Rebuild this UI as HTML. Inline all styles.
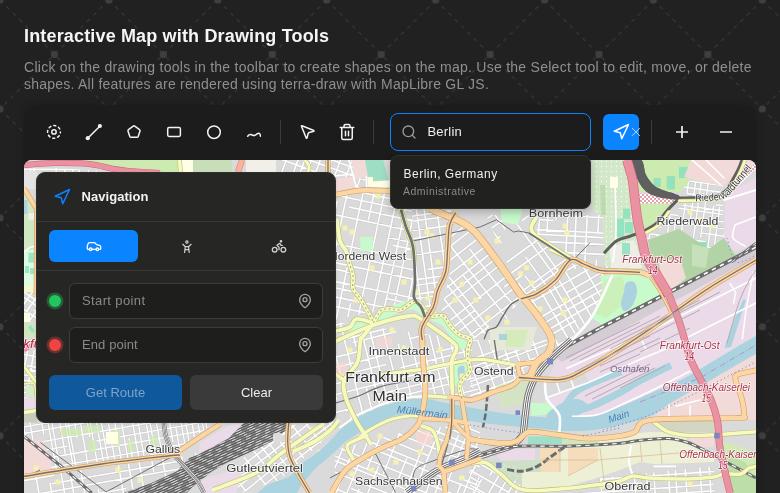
<!DOCTYPE html>
<html lang="en">
<head>
<meta charset="utf-8">
<title>Interactive Map with Drawing Tools</title>
<style>
*{box-sizing:border-box;margin:0;padding:0}
html,body{width:780px;height:493px;overflow:hidden;background:#212121;font-family:"Liberation Sans",sans-serif;color:#f2f2f2}
body{position:relative}
#bgpat{position:absolute;left:0;top:0;width:780px;height:493px}
.abs{position:absolute}
h1,p.desc,#search,#drop,#panel{will-change:transform}
h1{position:absolute;left:24px;top:25px;font-size:18px;line-height:22px;font-weight:700;color:#f5f5f5;white-space:nowrap;letter-spacing:0.16px}
p.desc{position:absolute;left:24px;top:59px;font-size:14px;line-height:16.5px;color:#8f8f8f;white-space:nowrap;letter-spacing:0.265px}
#card{position:absolute;left:24px;top:105px;width:732px;height:400px;background:#1c1c1c;border-radius:12px 12px 0 0;box-shadow:0 0 8px rgba(0,0,0,.14)}
#map{position:absolute;left:24px;top:160px;width:732px;height:333px;border-radius:8px 8px 0 0;overflow:hidden;background:#e0dfdf}
.tool{position:absolute;width:20px;height:20px}
.tool svg{display:block}
.vdiv{position:absolute;width:1px;height:24px;top:120px;background:#3a3a3a}
#search{position:absolute;left:390px;top:113px;width:201px;height:38px;border:1px solid #0a84ff;border-radius:8px;background:#1c1c1c}
#search span{position:absolute;left:36.5px;top:10px;font-size:13px;line-height:16px;color:#f0f0f0;letter-spacing:.2px}
#navbtn{position:absolute;left:603px;top:114px;width:36px;height:36px;border-radius:6px;background:#0a84ff}
#drop{position:absolute;left:390px;top:155px;width:201px;height:54px;border-radius:8px;background:#212120;border:1px solid #313130;box-shadow:0 3px 8px rgba(0,0,0,.25)}
#drop .t{position:absolute;left:12.5px;top:9.5px;font-size:12px;line-height:16px;color:#f0f0f0;letter-spacing:.5px}
#drop .s{position:absolute;left:12px;top:28px;font-size:10.5px;line-height:14px;color:#8a8a8a;letter-spacing:.49px}
#panel{position:absolute;left:36px;top:172px;width:300px;height:250.5px;border-radius:9px;background:#262625;border:1px solid #2f2f2e;box-shadow:0 1px 3px rgba(0,0,0,.12)}
#panel .hd{position:absolute;left:43.500px;top:16px;font-size:13px;line-height:16px;font-weight:700;color:#f2f2f2;letter-spacing:.05px}
#panel .ln{position:absolute;left:-1px;width:298px;height:1px;background:#383837}
.mode{position:absolute;top:57px;height:32px;width:89px;border-radius:6px}
.inp{position:absolute;left:31px;width:254px;height:36px;border-radius:6px;background:#1e1e1d;border:1px solid #3c3c3b}
.inp span{position:absolute;left:12px;top:9px;font-size:13px;line-height:16px;color:#8a8a8a}
.dot{position:absolute;left:10.500px;width:12px;height:12px;border-radius:50%}
.btn{position:absolute;top:202px;height:35px;width:133px;border-radius:6px;font-size:13px;line-height:35px;text-align:center}
</style>
</head>
<body>
<svg id="bgpat" width="780" height="493">
<defs>
<pattern id="pt" x="0" y="0" width="108.9" height="108.9" patternUnits="userSpaceOnUse">
<path d="M0 0L108.9 108.9M108.9 0L0 108.9" stroke="#3b3b3b" stroke-width="1" stroke-dasharray="4 5" fill="none"/>
<circle cx="0" cy="0" r="3.6" fill="#3f3f3f"/><circle cx="108.9" cy="0" r="3.6" fill="#3f3f3f"/><circle cx="0" cy="108.9" r="3.6" fill="#3f3f3f"/><circle cx="108.9" cy="108.9" r="3.6" fill="#3f3f3f"/><circle cx="54.45" cy="54.45" r="3.6" fill="#3f3f3f"/>
</pattern>
</defs>
<rect width="780" height="493" fill="url(#pt)"/>
</svg>

<h1>Interactive Map with Drawing Tools</h1>
<p class="desc">Click on the drawing tools in the toolbar to create shapes on the map. Use the Select tool to edit, move, or delete<br><span style="letter-spacing:.233px">shapes. All features are rendered using terra-draw with MapLibre GL JS.</span></p>

<div id="card"></div>

<!-- toolbar -->
<div id="toolbar">
<svg class="abs" style="left:24px;top:104px" width="732" height="56" viewBox="24 104 732 56" fill="none" stroke="#f2f2f2" stroke-width="1.5" stroke-linecap="round" stroke-linejoin="round">
<!-- point -->
<circle cx="54" cy="131.9" r="6.4" stroke-dasharray="2 3.027" stroke-dashoffset="1"/>
<circle cx="54" cy="131.9" r="2.2"/>
<!-- line -->
<path d="M88 138L99.8 126.2"/>
<circle cx="87.8" cy="138.2" r="2.1" fill="#f2f2f2" stroke="none"/><circle cx="99.9" cy="126" r="2.1" fill="#f2f2f2" stroke="none"/>
<!-- polygon -->
<path d="M133.2 126.2a1.3 1.3 0 0 1 1.6 0l4.7 3.5a1.3 1.3 0 0 1 .45 1.45l-1.75 5.3a1.3 1.3 0 0 1-1.2 .85h-6a1.3 1.3 0 0 1-1.2-.85l-1.75-5.3a1.3 1.3 0 0 1 .45-1.45z"/>
<!-- rect -->
<rect x="167.7" y="127.5" width="12.7" height="8.9" rx="1.4"/>
<!-- circle -->
<circle cx="214" cy="132.2" r="6.3"/>
<!-- freehand -->
<path d="M247.700 136.300C248.600 135 249.800 134.300 251 134.600S253.400 135.900 255 135.300S257.600 132.900 259 133.200S260.300 135 260.400 136.300"/>
<!-- select -->
<path d="M301.45 126.2a.37.37 0 0 1 .49-.49l11.9 4.85a.38.38 0 0 1-.05.71l-4.55 1.18a1.5 1.5 0 0 0-1.08 1.07l-1.17 4.57a.38.38 0 0 1-.71.05z"/>
<!-- trash -->
<g stroke-width="1.5"><path d="M340.25 127.5h13.5M352.25 127.5v10.5c0 .75-.75 1.5-1.5 1.5h-7.5c-.75 0-1.500-.75-1.500-1.500v-10.5M344 127.500v-1.500c0-.75.75-1.500 1.500-1.500h3c.75 0 1.500.75 1.500 1.500v1.500M345.500 131.250v4.500M348.500 131.250v4.500"/></g>
<!-- plus / minus -->
<g stroke-width="1.7" stroke-linecap="butt"><path d="M676 132h12M682 126v12M720 132h12"/></g>
</svg>
<div class="vdiv" style="left:280px"></div>
<div class="vdiv" style="left:373px"></div>
<div class="vdiv" style="left:651px"></div>
<div id="search"><svg class="abs" style="left:10px;top:10px" width="16" height="16" viewBox="0 0 24 24" fill="none" stroke="#9b9b9b" stroke-width="2" stroke-linecap="round"><circle cx="11" cy="11" r="8"/><path d="m21 21-4.300-4.300"/></svg><span>Berlin</span></div>
<div id="navbtn"><svg class="abs" style="left:8.500px;top:8.800px" width="18" height="18" viewBox="0 0 24 24" fill="none" stroke="#fff" stroke-width="2" stroke-linecap="round" stroke-linejoin="round"><polygon points="3 11 22 2 13 21 11 13 3 11"/></svg></div>
<svg class="abs" style="left:630px;top:126px" width="12" height="12" viewBox="0 0 12 12" fill="none" stroke="#b4d6fb" stroke-width="1" stroke-linecap="round"><path d="M2.200 2.200l7.400 7.400M9.600 2.200l-7.400 7.400"/></svg>
</div>

<div id="map">
<!--MAPSVG-->
<svg width="732" height="333" viewBox="24 160 732 333" font-family="'Liberation Sans',sans-serif" style="display:block;filter:blur(.6px)">
<rect x="24" y="160" width="732" height="333" fill="#dbdada"/>
<clipPath id="c1"><path d="M335 190L412 190 414 300 380 310 335 320Z"/></clipPath>
<g clip-path="url(#c1)" fill="none"><path d="M313 159.3L344.8 166.1M344.8 166.1L373.8 172.3M368.2 178.5L402.7 185.9M402.7 185.9L463.9 198.9M463.9 198.9L468.1 199.8M346.7 182.6L377.3 189.1M377.3 189.1L433.6 201.1M433.6 201.1L466.3 208M336.9 187.3L370.8 194.5M370.8 194.5L412.8 203.5M412.8 203.5L460.7 213.6M460.7 213.6L465 214.5M306.7 188.9L354.1 199M354.1 199L412.6 211.5M412.6 211.5L449.5 219.3M449.5 219.3L463.3 222.2M349.1 207.1L400 217.9M400 217.9L447.4 228M447.4 228L461.5 231M302.7 207.9L345.7 217.1M345.7 217.1L406.8 230.1M457.5 240.8L459.3 241.2M300.3 218.9L337.1 226.7M388 237.5L431.3 246.7M299 225.2L334.4 232.8M392.7 245.2L435.6 254.3M435.6 254.3L455.6 258.5M296.8 235.3L338.4 244.2M338.4 244.2L397.2 256.7M397.2 256.7L429.1 263.5M429.1 263.5L453.5 268.6M330.8 252.4L372.5 261.2M372.5 261.2L419.6 271.2M419.6 271.2L451.5 278M292.9 253.7L321.2 259.7M321.2 259.7L376.2 271.4M376.2 271.4L431.8 283.2M291.6 259.9L320.4 266M320.4 266L352.6 272.9M289.1 271.6L320.9 278.4M320.9 278.4L359.9 286.7M359.9 286.7L390.7 293.3M390.7 293.3L445.7 304.9M287.8 277.7L317.9 284.1M317.9 284.1L353.9 291.7M386.1 298.6L444.5 311M286 286.4L313.3 292.2M313.3 292.2L375.6 305.5M375.6 305.5L427.5 316.5M427.5 316.5L442.6 319.7M284 295.5L339 307.2M339 307.2L373.5 314.6M373.5 314.6L436 327.9M436 327.9L440.7 328.8M282.4 303.4L327.7 313M355.1 318.8L391.6 326.6M391.6 326.6L439 336.7M280.1 314.2L342.7 327.5M342.7 327.5L382.4 336M382.4 336L417.1 343.3M417.1 343.3L436.7 347.5M467.7 193L460.6 226.3M451.6 268.7L443.4 307.1M443.4 307.1L434.5 349M434.5 349L434.4 349.6M458.2 190.9L449.2 233.3M449.2 233.3L442.6 264.4M442.6 264.4L432.7 310.8M427.5 335.6L424.9 347.6M446.9 188.5L437.8 231.6M437.8 231.6L429.6 270M422.1 305.3L417.8 325.7M417.8 325.7L413.7 345.2M432.6 185.5L423.2 229.9M423.2 229.9L417.7 255.7M417.7 255.7L411.7 283.9M411.7 283.9L403.9 320.3M420.3 182.9L413.3 215.7M413.3 215.7L403.7 261M403.7 261L394 306.6M394 306.6L387 339.5M406 206.1L397 248.4M397 248.4L390 281.6M390 281.6L382.4 317.2M382.4 317.2L378.1 337.6M401 178.8L393.4 214.4M393.4 214.4L387.5 242.2M387.5 242.2L380.2 276.3M380.2 276.3L371.5 317.6M371.5 317.6L367.7 335.4M388 176L379.7 215.4M379.7 215.4L372.3 250.3M372.3 250.3L362.4 296.6M362.4 296.6L354.8 332.7M378.2 173.9L368.3 220.3M350.7 303.2L344.9 330.5M367.6 171.7L359.1 211.7M359.1 211.7L354 235.7M354 235.7L344 282.7M344 282.7L334.3 328.3M352.5 168.5L343.3 211.7M343.3 211.7L336.5 243.8M336.5 243.8L330.2 273.3M330.2 273.3L324.1 302.1M324.1 302.1L319.7 322.7M337.2 201.1L327.1 248.6M311.2 323.2L311.2 323.4M336.5 165.1L326.8 210.5M321 237.8L311.3 283.4M319.6 194.8L309.8 241M315.2 160.5L308.9 190M308.9 190L299.1 235.9M299.1 235.9L294.1 259.5M283.2 310.6L281.9 317.2" stroke="#cbcaca" stroke-width="2.6"/><path d="M313 159.3L344.8 166.1M344.8 166.1L373.8 172.3M368.2 178.5L402.7 185.9M402.7 185.9L463.9 198.9M463.9 198.9L468.1 199.8M346.7 182.6L377.3 189.1M377.3 189.1L433.6 201.1M433.6 201.1L466.3 208M336.9 187.3L370.8 194.5M370.8 194.5L412.8 203.5M412.8 203.5L460.7 213.6M460.7 213.6L465 214.5M306.7 188.9L354.1 199M354.1 199L412.6 211.5M412.6 211.5L449.5 219.3M449.5 219.3L463.3 222.2M349.1 207.1L400 217.9M400 217.9L447.4 228M447.4 228L461.5 231M302.7 207.9L345.7 217.1M345.7 217.1L406.8 230.1M457.5 240.8L459.3 241.2M300.3 218.9L337.1 226.7M388 237.5L431.3 246.7M299 225.2L334.4 232.8M392.7 245.2L435.6 254.3M435.6 254.3L455.6 258.5M296.8 235.3L338.4 244.2M338.4 244.2L397.2 256.7M397.2 256.7L429.1 263.5M429.1 263.5L453.5 268.6M330.8 252.4L372.5 261.2M372.5 261.2L419.6 271.2M419.6 271.2L451.5 278M292.9 253.7L321.2 259.7M321.2 259.7L376.2 271.4M376.2 271.4L431.8 283.2M291.6 259.9L320.4 266M320.4 266L352.6 272.9M289.1 271.6L320.9 278.4M320.9 278.4L359.9 286.7M359.9 286.7L390.7 293.3M390.7 293.3L445.7 304.9M287.8 277.7L317.9 284.1M317.9 284.1L353.9 291.7M386.1 298.6L444.5 311M286 286.4L313.3 292.2M313.3 292.2L375.6 305.5M375.6 305.5L427.5 316.5M427.5 316.5L442.6 319.7M284 295.5L339 307.2M339 307.2L373.5 314.6M373.5 314.6L436 327.9M436 327.9L440.7 328.8M282.4 303.4L327.7 313M355.1 318.8L391.6 326.6M391.6 326.6L439 336.7M280.1 314.2L342.7 327.5M342.7 327.5L382.4 336M382.4 336L417.1 343.3M417.1 343.3L436.7 347.5M467.7 193L460.6 226.3M451.6 268.7L443.4 307.1M443.4 307.1L434.5 349M434.5 349L434.4 349.6M458.2 190.9L449.2 233.3M449.2 233.3L442.6 264.4M442.6 264.4L432.7 310.8M427.5 335.6L424.9 347.6M446.9 188.5L437.8 231.6M437.8 231.6L429.6 270M422.1 305.3L417.8 325.7M417.8 325.7L413.7 345.2M432.6 185.5L423.2 229.9M423.2 229.9L417.7 255.7M417.7 255.7L411.7 283.9M411.7 283.9L403.9 320.3M420.3 182.9L413.3 215.7M413.3 215.7L403.7 261M403.7 261L394 306.6M394 306.6L387 339.5M406 206.1L397 248.4M397 248.4L390 281.6M390 281.6L382.4 317.2M382.4 317.2L378.1 337.6M401 178.8L393.4 214.4M393.4 214.4L387.5 242.2M387.5 242.2L380.2 276.3M380.2 276.3L371.5 317.6M371.5 317.6L367.7 335.4M388 176L379.7 215.4M379.7 215.4L372.3 250.3M372.3 250.3L362.4 296.6M362.4 296.6L354.8 332.7M378.2 173.9L368.3 220.3M350.7 303.2L344.9 330.5M367.6 171.7L359.1 211.7M359.1 211.7L354 235.7M354 235.7L344 282.7M344 282.7L334.3 328.3M352.5 168.5L343.3 211.7M343.3 211.7L336.5 243.8M336.5 243.8L330.2 273.3M330.2 273.3L324.1 302.1M324.1 302.1L319.7 322.7M337.2 201.1L327.1 248.6M311.2 323.2L311.2 323.4M336.5 165.1L326.8 210.5M321 237.8L311.3 283.4M319.6 194.8L309.8 241M315.2 160.5L308.9 190M308.9 190L299.1 235.9M299.1 235.9L294.1 259.5M283.2 310.6L281.9 317.2" stroke="#fff" stroke-width="1.566"/></g>
<clipPath id="c2"><path d="M412 205L452 205 446 270 430 312 415 300Z"/></clipPath>
<g clip-path="url(#c2)" fill="none"><path d="M363.1 207.5L399 202.4M399 202.4L430.9 197.9M430.9 197.9L457.1 194.3M457.1 194.3L483.2 190.6M483.2 190.6L484.2 190.5M364.3 215.9L393.6 211.8M393.6 211.8L434.7 206M434.7 206L485.3 198.9M365.3 222.9L426 214.3M426 214.3L481.3 206.5M481.3 206.5L486.3 205.8M396.2 223.5L448.2 216.2M479.6 211.8L487 210.7M367.3 237.1L401.5 232.3M401.5 232.3L443.5 226.4M443.5 226.4L485 220.5M485 220.5L488.3 220.1M368.4 244.9L428.5 236.5M466.8 231.1L489.4 227.9M487.9 236L490.5 235.6M370.6 261.1L415.1 254.8M415.1 254.8L464.2 247.9M464.2 247.9L491.7 244M371.9 269.8L402.8 265.5M451.3 258.7L492.9 252.8M427.5 269.5L471.8 263.3M471.8 263.3L494 260.2M374.1 285.6L431.6 277.5M431.6 277.5L481.9 270.4M374.9 291.1L430.3 283.3M430.3 283.3L478.3 276.6M478.3 276.6L495.9 274.1M376.1 299.9L428.4 292.6M428.4 292.6L473.1 286.3M473.1 286.3L497.1 282.9M376.7 304.2L411.7 299.2M411.7 299.2L444.6 294.6M444.6 294.6L497.7 287.1M378 313.2L428 306.1M428 306.1L475.6 299.4M379.1 321.2L415.5 316.1M441.5 312.4L476.7 307.5M476.7 307.5L500.1 304.2M380 327.4L422.1 321.5M422.1 321.5L451.9 317.3M451.9 317.3L484.6 312.7M482.4 189.7L488.7 234.8M488.7 234.8L492.4 261.2M492.4 261.2L498.7 305.7M471.1 191.3L474.3 214M474.3 214L478.9 246.8M478.9 246.8L484.3 284.8M484.3 284.8L488.1 312.3M467.7 191.8L472.2 224.1M476.1 251.4L480 279.8M451.8 194L454.9 216.4M454.9 216.4L460.3 254.7M460.3 254.7L464.1 281.6M464.1 281.6L468.3 311.3M468.3 311.3L468.8 315M447.4 215.5L453.2 257M453.2 257L459.5 301.3M459.5 301.3L461.5 316.1M435 196.4L441.3 241.2M441.3 241.2L447 282.1M447 282.1L452 317.4M422.5 198.1L425.4 218.6M425.4 218.6L429.8 249.9M429.8 249.9L434.9 286.3M434.9 286.3L437.8 306.8M437.8 306.8L439.5 319.2M414.9 199.2L420.4 238.2M420.4 238.2L424 264.3M424 264.3L427.9 291.5M427.9 291.5L431.9 320.2M406.4 200.4L412.5 243.8M412.5 243.8L416.1 268.9M416.1 268.9L422.5 314.8M422.5 314.8L423.4 321.4M397.2 201.7L400.2 223.3M400.2 223.3L403.9 249.4M403.9 249.4L409.9 292.3M409.9 292.3L414.1 322.6M414.1 322.6L414.2 322.7M388.9 202.8L392.6 229.5M392.6 229.5L395.8 252M395.8 252L400.8 288M400.8 288L404.3 313M404.3 313L405.9 323.9M374.1 204.9L380 246.9M382.7 266.6L388.1 304.8M388.1 304.8L391.1 326M368.8 205.7L375 249.7M375 249.7L380.9 291.8M384.5 317.6L385.8 326.7" stroke="#cbcaca" stroke-width="2.6"/><path d="M363.1 207.5L399 202.4M399 202.4L430.9 197.9M430.9 197.9L457.1 194.3M457.1 194.3L483.2 190.6M483.2 190.6L484.2 190.5M364.3 215.9L393.6 211.8M393.6 211.8L434.7 206M434.7 206L485.3 198.9M365.3 222.9L426 214.3M426 214.3L481.3 206.5M481.3 206.5L486.3 205.8M396.2 223.5L448.2 216.2M479.6 211.8L487 210.7M367.3 237.1L401.5 232.3M401.5 232.3L443.5 226.4M443.5 226.4L485 220.5M485 220.5L488.3 220.1M368.4 244.9L428.5 236.5M466.8 231.1L489.4 227.9M487.9 236L490.5 235.6M370.6 261.1L415.1 254.8M415.1 254.8L464.2 247.9M464.2 247.9L491.7 244M371.9 269.8L402.8 265.5M451.3 258.7L492.9 252.8M427.5 269.5L471.8 263.3M471.8 263.3L494 260.2M374.1 285.6L431.6 277.5M431.6 277.5L481.9 270.4M374.9 291.1L430.3 283.3M430.3 283.3L478.3 276.6M478.3 276.6L495.9 274.1M376.1 299.9L428.4 292.6M428.4 292.6L473.1 286.3M473.1 286.3L497.1 282.9M376.7 304.2L411.7 299.2M411.7 299.2L444.6 294.6M444.6 294.6L497.7 287.1M378 313.2L428 306.1M428 306.1L475.6 299.4M379.1 321.2L415.5 316.1M441.5 312.4L476.7 307.5M476.7 307.5L500.1 304.2M380 327.4L422.1 321.5M422.1 321.5L451.9 317.3M451.9 317.3L484.6 312.7M482.4 189.7L488.7 234.8M488.7 234.8L492.4 261.2M492.4 261.2L498.7 305.7M471.1 191.3L474.3 214M474.3 214L478.9 246.8M478.9 246.8L484.3 284.8M484.3 284.8L488.1 312.3M467.7 191.8L472.2 224.1M476.1 251.4L480 279.8M451.8 194L454.9 216.4M454.9 216.4L460.3 254.7M460.3 254.7L464.1 281.6M464.1 281.6L468.3 311.3M468.3 311.3L468.8 315M447.4 215.5L453.2 257M453.2 257L459.5 301.3M459.5 301.3L461.5 316.1M435 196.4L441.3 241.2M441.3 241.2L447 282.1M447 282.1L452 317.4M422.5 198.1L425.4 218.6M425.4 218.6L429.8 249.9M429.8 249.9L434.9 286.3M434.9 286.3L437.8 306.8M437.8 306.8L439.5 319.2M414.9 199.2L420.4 238.2M420.4 238.2L424 264.3M424 264.3L427.9 291.5M427.9 291.5L431.9 320.2M406.4 200.4L412.5 243.8M412.5 243.8L416.1 268.9M416.1 268.9L422.5 314.8M422.5 314.8L423.4 321.4M397.2 201.7L400.2 223.3M400.2 223.3L403.9 249.4M403.9 249.4L409.9 292.3M409.9 292.3L414.1 322.6M414.1 322.6L414.2 322.7M388.9 202.8L392.6 229.5M392.6 229.5L395.8 252M395.8 252L400.8 288M400.8 288L404.3 313M404.3 313L405.9 323.9M374.1 204.9L380 246.9M382.7 266.6L388.1 304.8M388.1 304.8L391.1 326M368.8 205.7L375 249.7M375 249.7L380.9 291.8M384.5 317.6L385.8 326.7" stroke="#fff" stroke-width="1.566"/></g>
<clipPath id="c3"><path d="M452 215L486 250 522 296 500 330 470 340 440 318 450 272Z"/></clipPath>
<g clip-path="url(#c3)" fill="none"><path d="M371.6 265.4L414.2 232.2M414.2 232.2L458.1 197.9M495.6 168.6L495.7 168.5M407.5 249.1L436.1 226.7M478 194L501.3 175.8M501.3 175.8L501.4 175.7M381.9 278.6L403.4 261.8M403.4 261.8L438.3 234.6M438.3 234.6L478.5 203.1M478.5 203.1L506 181.6M387.7 286L429.8 253.1M429.8 253.1L451.6 236.1M451.6 236.1L492.8 203.9M492.8 203.9L511.8 189M392.2 291.8L414.4 274.4M414.4 274.4L448 248.1M448 248.1L475.1 227M475.1 227L516.3 194.8M398.9 300.3L429.3 276.5M429.3 276.5L457.3 254.7M457.3 254.7L501.1 220.5M501.1 220.5L523 203.4M401.6 303.8L435.1 277.6M484.4 239L517.3 213.4M405.5 308.8L438.4 283.1M438.4 283.1L485.7 246.1M485.7 246.1L529.6 211.8M410.9 315.7L459.8 277.4M459.8 277.4L481.9 260.1M481.9 260.1L514.3 234.8M514.3 234.8L535 218.7M415.4 321.4L447 296.7M447 296.7L471.8 277.3M471.8 277.3L499.1 256M499.1 256L539.5 224.4M420 327.4L455.2 299.9M455.2 299.9L503.7 262M503.7 262L535.7 237M535.7 237L544.1 230.4M450.5 320.2L473.5 302.2M473.5 302.2L502.3 279.7M502.3 279.7L550.1 242.3M550.1 242.3L552.2 240.7M432.5 343.3L474.9 310.1M504.2 287.2L547.8 253.2M547.8 253.2L556.6 246.3M436.7 348.7L472 321.1M472 321.1L521.4 282.5M521.4 282.5L550 260.1M550 260.1L560.8 251.7M442.9 356.6L485.9 322.9M485.9 322.9L530 288.5M530 288.5L560.9 264.4M560.9 264.4L567 259.6M445.7 360.2L489.2 326.2M512.3 308.2L549.8 278.8M549.8 278.8L569.8 263.2M476.1 350.4L512.1 322.3M512.1 322.3L546.5 295.4M546.5 295.4L576.6 271.9M459.6 378L505.9 341.8M505.9 341.8L530.6 322.5M530.6 322.5L560.5 299.1M560.5 299.1L583.7 281M463 382.3L491.4 360.1M491.4 360.1L538.8 323.1M538.8 323.1L569.7 299M569.7 299L587.1 285.3M493.3 168L518.6 200.4M518.6 200.4L533.7 219.8M533.7 219.8L562.2 256.2M488.3 171.9L505 193.3M505 193.3L529.1 224.1M529.1 224.1L549.2 249.9M549.2 249.9L570.8 277.5M570.8 277.5L585.3 296M479.1 179.1L503.8 210.7M523.9 236.4L540.9 258.2M540.9 258.2L565.2 289.3M470.7 185.6L487.4 206.9M487.4 206.9L504.4 228.7M527.8 258.6L542.9 278M542.9 278L566.3 308M566.3 308L567.7 309.7M462.4 192.1L480.9 215.7M480.9 215.7L511.8 255.3M511.8 255.3L535.5 285.7M535.5 285.7L556.5 312.5M556.5 312.5L559.4 316.2M470.6 220.8L500.5 259.1M500.5 259.1L528.9 295.5M528.9 295.5L550.5 323.1M449.2 202.4L472.6 232.5M502.7 271L527.5 302.7M469.6 249.1L491.9 277.7M491.9 277.7L523 317.6M523 317.6L536.1 334.4M428.8 218.3L443.1 236.5M443.1 236.5L463.5 262.7M463.5 262.7L488.2 294.3M488.2 294.3L504.4 315.1M504.4 315.1L521.8 337.3M521.8 337.3L525.8 342.4M422.5 223.3L443.1 249.7M463.5 275.7L481.3 298.6M511.2 336.8L519.4 347.4M412.9 230.7L428.4 250.5M428.4 250.5L451.8 280.5M451.8 280.5L470.7 304.7M470.7 304.7L494.7 335.4M494.7 335.4L509.9 354.9M407.9 234.6L432.6 266.3M432.6 266.3L450.2 288.8M450.2 288.8L477.9 324.2M477.9 324.2L494.5 345.4M399.2 241.5L420.7 268.9M420.7 268.9L434.7 286.8M434.7 286.8L449.4 305.7M449.4 305.7L477.1 341.1M477.1 341.1L491.3 359.3M491.3 359.3L496.2 365.6M388.7 249.7L420.4 290.3M420.4 290.3L448.7 326.5M448.7 326.5L480.2 366.8M480.2 366.8L485.7 373.8M412.1 294.3L431.8 319.5M431.8 319.5L448 340.2M448 340.2L466.3 363.7M466.3 363.7L478.5 379.4M373.8 261.4L391.9 284.5M411 309L427.6 330.3M427.6 330.3L458.2 369.5M458.2 369.5L470.7 385.5" stroke="#cbcaca" stroke-width="2.6"/><path d="M371.6 265.4L414.2 232.2M414.2 232.2L458.1 197.9M495.6 168.6L495.7 168.5M407.5 249.1L436.1 226.7M478 194L501.3 175.8M501.3 175.8L501.4 175.7M381.9 278.6L403.4 261.8M403.4 261.8L438.3 234.6M438.3 234.6L478.5 203.1M478.5 203.1L506 181.6M387.7 286L429.8 253.1M429.8 253.1L451.6 236.1M451.6 236.1L492.8 203.9M492.8 203.9L511.8 189M392.2 291.8L414.4 274.4M414.4 274.4L448 248.1M448 248.1L475.1 227M475.1 227L516.3 194.8M398.9 300.3L429.3 276.5M429.3 276.5L457.3 254.7M457.3 254.7L501.1 220.5M501.1 220.5L523 203.4M401.6 303.8L435.1 277.6M484.4 239L517.3 213.4M405.5 308.8L438.4 283.1M438.4 283.1L485.7 246.1M485.7 246.1L529.6 211.8M410.9 315.7L459.8 277.4M459.8 277.4L481.9 260.1M481.9 260.1L514.3 234.8M514.3 234.8L535 218.7M415.4 321.4L447 296.7M447 296.7L471.8 277.3M471.8 277.3L499.1 256M499.1 256L539.5 224.4M420 327.4L455.2 299.9M455.2 299.9L503.7 262M503.7 262L535.7 237M535.7 237L544.1 230.4M450.5 320.2L473.5 302.2M473.5 302.2L502.3 279.7M502.3 279.7L550.1 242.3M550.1 242.3L552.2 240.7M432.5 343.3L474.9 310.1M504.2 287.2L547.8 253.2M547.8 253.2L556.6 246.3M436.7 348.7L472 321.1M472 321.1L521.4 282.5M521.4 282.5L550 260.1M550 260.1L560.8 251.7M442.9 356.6L485.9 322.9M485.9 322.9L530 288.5M530 288.5L560.9 264.4M560.9 264.4L567 259.6M445.7 360.2L489.2 326.2M512.3 308.2L549.8 278.8M549.8 278.8L569.8 263.2M476.1 350.4L512.1 322.3M512.1 322.3L546.5 295.4M546.5 295.4L576.6 271.9M459.6 378L505.9 341.8M505.9 341.8L530.6 322.5M530.6 322.5L560.5 299.1M560.5 299.1L583.7 281M463 382.3L491.4 360.1M491.4 360.1L538.8 323.1M538.8 323.1L569.7 299M569.7 299L587.1 285.3M493.3 168L518.6 200.4M518.6 200.4L533.7 219.8M533.7 219.8L562.2 256.2M488.3 171.9L505 193.3M505 193.3L529.1 224.1M529.1 224.1L549.2 249.9M549.2 249.9L570.8 277.5M570.8 277.5L585.3 296M479.1 179.1L503.8 210.7M523.9 236.4L540.9 258.2M540.9 258.2L565.2 289.3M470.7 185.6L487.4 206.9M487.4 206.9L504.4 228.7M527.8 258.6L542.9 278M542.9 278L566.3 308M566.3 308L567.7 309.7M462.4 192.1L480.9 215.7M480.9 215.7L511.8 255.3M511.8 255.3L535.5 285.7M535.5 285.7L556.5 312.5M556.5 312.5L559.4 316.2M470.6 220.8L500.5 259.1M500.5 259.1L528.9 295.5M528.9 295.5L550.5 323.1M449.2 202.4L472.6 232.5M502.7 271L527.5 302.7M469.6 249.1L491.9 277.7M491.9 277.7L523 317.6M523 317.6L536.1 334.4M428.8 218.3L443.1 236.5M443.1 236.5L463.5 262.7M463.5 262.7L488.2 294.3M488.2 294.3L504.4 315.1M504.4 315.1L521.8 337.3M521.8 337.3L525.8 342.4M422.5 223.3L443.1 249.7M463.5 275.7L481.3 298.6M511.2 336.8L519.4 347.4M412.9 230.7L428.4 250.5M428.4 250.5L451.8 280.5M451.8 280.5L470.7 304.7M470.7 304.7L494.7 335.4M494.7 335.4L509.9 354.9M407.9 234.6L432.6 266.3M432.6 266.3L450.2 288.8M450.2 288.8L477.9 324.2M477.9 324.2L494.5 345.4M399.2 241.5L420.7 268.9M420.7 268.9L434.7 286.8M434.7 286.8L449.4 305.7M449.4 305.7L477.1 341.1M477.1 341.1L491.3 359.3M491.3 359.3L496.2 365.6M388.7 249.7L420.4 290.3M420.4 290.3L448.7 326.5M448.7 326.5L480.2 366.8M480.2 366.8L485.7 373.8M412.1 294.3L431.8 319.5M431.8 319.5L448 340.2M448 340.2L466.3 363.7M466.3 363.7L478.5 379.4M373.8 261.4L391.9 284.5M411 309L427.6 330.3M427.6 330.3L458.2 369.5M458.2 369.5L470.7 385.5" stroke="#fff" stroke-width="1.566"/></g>
<clipPath id="c4"><path d="M486 215L540 215 533 234 570 262 553 284 522 297Z"/></clipPath>
<g clip-path="url(#c4)" fill="none"><path d="M439.5 240.8L477.4 213.3M477.4 213.3L510 189.5M510 189.5L540.9 167.1M445.5 249.1L497.4 211.3M497.4 211.3L531.2 186.8M531.2 186.8L546.9 175.4M451.5 257.3L496.5 224.6M496.5 224.6L523.6 204.9M523.6 204.9L546.8 188.1M546.8 188.1L552.9 183.6M458.3 266.8L500.3 236.3M522.1 220.5L548.4 201.4M548.4 201.4L559.8 193.1M463.3 273.6L491.9 252.7M546.9 212.8L564.7 199.9M469.8 282.6L497.8 262.2M534 235.9L571.2 208.9M472.9 286.9L514.1 257M514.1 257L559.7 223.9M479.6 296.1L512 272.5M512 272.5L547.3 246.9M547.3 246.9L581.1 222.4M484.4 302.7L522.3 275.1M492 313.1L518.1 294.1M518.1 294.1L558.3 264.9M558.3 264.9L593.4 239.4M525.7 294.6L574.5 259.1M501.9 326.7L537.8 300.6M537.8 300.6L573.3 274.8M573.3 274.8L598.3 256.7M598.3 256.7L603.3 253M507.5 334.5L555 300M555 300L584.8 278.3M584.8 278.3L609 260.8M511.7 340.2L552.9 310.2M552.9 310.2L581.3 289.6M581.3 289.6L603.5 273.4M603.5 273.4L613.1 266.5M540.8 169.2L559.2 194.6M559.2 194.6L577.7 220M577.7 220L606.4 259.4M606.4 259.4L614.5 270.6M531.2 176.2L558.7 214M558.7 214L586.5 252.3M586.5 252.3L604.9 277.6M589.7 271.5L597.9 282.7M517.5 186.2L530.8 204.6M530.8 204.6L554.7 237.4M580.4 272.7L591.2 287.6M532.3 235.1L560.3 273.7M499.2 199.4L512.4 217.7M512.4 217.7L539.4 254.8M539.4 254.8L566.7 292.3M489 206.8L505.3 229.2M525.4 256.9L542.6 280.6M542.6 280.6L562.7 308.3M479.9 213.4L501.5 243.1M525 275.6L545 303M545 303L553.6 314.9M472.1 219.2L488.5 241.8M488.5 241.8L502.8 261.4M518.4 283L534.6 305.3M463.4 225.5L490.1 262.3M490.1 262.3L511.5 291.7M511.5 291.7L537.1 326.9M453.6 232.5L470.1 255.2M515.4 317.6L527.3 334M442.1 240.9L461 267M461 267L480.6 294M480.6 294L494.8 313.5M494.8 313.5L507.9 331.5M507.9 331.5L515.8 342.4" stroke="#cbcaca" stroke-width="2.6"/><path d="M439.5 240.8L477.4 213.3M477.4 213.3L510 189.5M510 189.5L540.9 167.1M445.5 249.1L497.4 211.3M497.4 211.3L531.2 186.8M531.2 186.8L546.9 175.4M451.5 257.3L496.5 224.6M496.5 224.6L523.6 204.9M523.6 204.9L546.8 188.1M546.8 188.1L552.9 183.6M458.3 266.8L500.3 236.3M522.1 220.5L548.4 201.4M548.4 201.4L559.8 193.1M463.3 273.6L491.9 252.7M546.9 212.8L564.7 199.9M469.8 282.6L497.8 262.2M534 235.9L571.2 208.9M472.9 286.9L514.1 257M514.1 257L559.7 223.9M479.6 296.1L512 272.5M512 272.5L547.3 246.9M547.3 246.9L581.1 222.4M484.4 302.7L522.3 275.1M492 313.1L518.1 294.1M518.1 294.1L558.3 264.9M558.3 264.9L593.4 239.4M525.7 294.6L574.5 259.1M501.9 326.7L537.8 300.6M537.8 300.6L573.3 274.8M573.3 274.8L598.3 256.7M598.3 256.7L603.3 253M507.5 334.5L555 300M555 300L584.8 278.3M584.8 278.3L609 260.8M511.7 340.2L552.9 310.2M552.9 310.2L581.3 289.6M581.3 289.6L603.5 273.4M603.5 273.4L613.1 266.5M540.8 169.2L559.2 194.6M559.2 194.6L577.7 220M577.7 220L606.4 259.4M606.4 259.4L614.5 270.6M531.2 176.2L558.7 214M558.7 214L586.5 252.3M586.5 252.3L604.9 277.6M589.7 271.5L597.9 282.7M517.5 186.2L530.8 204.6M530.8 204.6L554.7 237.4M580.4 272.7L591.2 287.6M532.3 235.1L560.3 273.7M499.2 199.4L512.4 217.7M512.4 217.7L539.4 254.8M539.4 254.8L566.7 292.3M489 206.8L505.3 229.2M525.4 256.9L542.6 280.6M542.6 280.6L562.7 308.3M479.9 213.4L501.5 243.1M525 275.6L545 303M545 303L553.6 314.9M472.1 219.2L488.5 241.8M488.5 241.8L502.8 261.4M518.4 283L534.6 305.3M463.4 225.5L490.1 262.3M490.1 262.3L511.5 291.7M511.5 291.7L537.1 326.9M453.6 232.5L470.1 255.2M515.4 317.6L527.3 334M442.1 240.9L461 267M461 267L480.6 294M480.6 294L494.8 313.5M494.8 313.5L507.9 331.5M507.9 331.5L515.8 342.4" stroke="#fff" stroke-width="1.566"/></g>
<clipPath id="c5"><path d="M540 215L603 215 612 272 572 262 536 234Z"/></clipPath>
<g clip-path="url(#c5)" fill="none"><path d="M525.3 188.9L578.1 191.7M578.1 191.7L617 193.7M617 193.7L628.1 194.3M524.9 197.2L559.3 199M559.3 199L610.8 201.7M610.8 201.7L627.7 202.6M567.1 208.8L606 210.9M606 210.9L627.2 212M524 213.5L575.5 216.2M575.5 216.2L604.3 217.7M604.3 217.7L626.9 218.9M523.7 218.8L553.6 220.4M523.2 228.9L573.1 231.5M573.1 231.5L611.1 233.5M523 233.5L547.7 234.8M547.7 234.8L597.5 237.4M597.5 237.4L625.8 238.9M522.6 240.3L566.2 242.6M566.2 242.6L614.3 245.1M614.3 245.1L625.5 245.7M522.1 250.2L553.3 251.8M553.3 251.8L606 254.6M606 254.6L624.9 255.6M521.6 259.6L560.2 261.6M604.6 263.9L624.4 265M521.1 268.2L553 269.9M553 269.9L591.7 271.9M591.7 271.9L624 273.6M520.7 275.9L566 278.3M566 278.3L602.5 280.2M520.3 283.9L569.8 286.5M610.6 288.6L623.2 289.3M628.1 194.8L626.1 231.4M626.1 231.4L624.4 264.8M624.4 264.8L622.7 297.6M616.1 234.2L613.7 280.2M613.7 280.2L612.8 297.1M610.7 193.9L609.1 224.5M609.1 224.5L607.1 262.7M607.1 262.7L605.7 289.2M605.7 289.2L605.3 296.7M599.9 193.3L597.8 234.3M596.5 259.4L594.5 296.1M588.5 192.7L586.7 227.2M586.7 227.2L584.3 272.6M584.3 272.6L583.1 295.5M577.5 192.1L576 219.4M576 219.4L574.9 242.1M574.9 242.1L573.3 271M573.3 271L572.1 295M567.8 216L565.7 254.9M565.7 254.9L564.4 280.8M564.4 280.8L563.6 294.5M557.7 191.1L556.1 220.2M553.9 262.6L552.3 293.9M549.2 190.6L547 232.4M546 252.2L543.8 293.5M540.8 190.2L539.6 213.4M539.6 213.4L537.5 253.7M537.5 253.7L536.2 277.2M536.2 277.2L535.4 293M527 189.5L524.9 229.9M524.9 229.9L522.6 273.4M522.6 273.4L521.7 292.3" stroke="#cbcaca" stroke-width="2.6"/><path d="M525.3 188.9L578.1 191.7M578.1 191.7L617 193.7M617 193.7L628.1 194.3M524.9 197.2L559.3 199M559.3 199L610.8 201.7M610.8 201.7L627.7 202.6M567.1 208.8L606 210.9M606 210.9L627.2 212M524 213.5L575.5 216.2M575.5 216.2L604.3 217.7M604.3 217.7L626.9 218.9M523.7 218.8L553.6 220.4M523.2 228.9L573.1 231.5M573.1 231.5L611.1 233.5M523 233.5L547.7 234.8M547.7 234.8L597.5 237.4M597.5 237.4L625.8 238.9M522.6 240.3L566.2 242.6M566.2 242.6L614.3 245.1M614.3 245.1L625.5 245.7M522.1 250.2L553.3 251.8M553.3 251.8L606 254.6M606 254.6L624.9 255.6M521.6 259.6L560.2 261.6M604.6 263.9L624.4 265M521.1 268.2L553 269.9M553 269.9L591.7 271.9M591.7 271.9L624 273.6M520.7 275.9L566 278.3M566 278.3L602.5 280.2M520.3 283.9L569.8 286.5M610.6 288.6L623.2 289.3M628.1 194.8L626.1 231.4M626.1 231.4L624.4 264.8M624.4 264.8L622.7 297.6M616.1 234.2L613.7 280.2M613.7 280.2L612.8 297.1M610.7 193.9L609.1 224.5M609.1 224.5L607.1 262.7M607.1 262.7L605.7 289.2M605.7 289.2L605.3 296.7M599.9 193.3L597.8 234.3M596.5 259.4L594.5 296.1M588.5 192.7L586.7 227.2M586.7 227.2L584.3 272.6M584.3 272.6L583.1 295.5M577.5 192.1L576 219.4M576 219.4L574.9 242.1M574.9 242.1L573.3 271M573.3 271L572.1 295M567.8 216L565.7 254.9M565.7 254.9L564.4 280.8M564.4 280.8L563.6 294.5M557.7 191.1L556.1 220.2M553.9 262.6L552.3 293.9M549.2 190.6L547 232.4M546 252.2L543.8 293.5M540.8 190.2L539.6 213.4M539.6 213.4L537.5 253.7M537.5 253.7L536.2 277.2M536.2 277.2L535.4 293M527 189.5L524.9 229.9M524.9 229.9L522.6 273.4M522.6 273.4L521.7 292.3" stroke="#fff" stroke-width="1.62"/></g>
<clipPath id="c6"><path d="M522 300L556 284 572 264 612 275 590 318 560 350 551 336Z"/></clipPath>
<g clip-path="url(#c6)" fill="none"><path d="M476.6 282.9L516.4 259.8M516.4 259.8L560.1 234.6M560.1 234.6L586.9 219.1M586.9 219.1L591.3 216.6M479.5 287.9L503 274.3M503 274.3L536.2 255.2M579.3 230.2L594.2 221.6M483.7 295.2L526.2 270.6M526.2 270.6L557.3 252.7M557.3 252.7L578.9 240.2M487.6 302L532.7 276M532.7 276L579.1 249.2M579.1 249.2L602.4 235.8M490.7 307.3L527.4 286.1M527.4 286.1L570.5 261.2M570.5 261.2L603 242.4M603 242.4L605.4 241.1M493.8 312.7L528.5 292.6M528.5 292.6L556.1 276.7M556.1 276.7L586.7 259M586.7 259L608.5 246.4M498.7 321.3L540 297.4M540 297.4L568.2 281.1M568.2 281.1L603.8 260.6M565.5 293.2L590.3 278.9M590.3 278.9L618 262.9M507.5 336.5L543.8 315.5M543.8 315.5L580.5 294.3M580.5 294.3L616.4 273.6M616.4 273.6L622.3 270.3M510.9 342.4L533.3 329.5M533.3 329.5L553.8 317.6M553.8 317.6L598.4 291.9M598.4 291.9L625.7 276.2M514.8 349.1L541.4 333.7M541.4 333.7L572.5 315.7M572.5 315.7L603.8 297.7M517.7 354.1L540.5 340.9M540.5 340.9L575.8 320.5M607.6 302.2L632.4 287.9M523.9 364.8L556.5 346M556.5 346L578.8 333.1M578.8 333.1L604.2 318.5M570.1 344.8L590.2 333.2M590.2 333.2L616.3 318.1M641 303.8L641.5 303.6M532.3 379.3L554.1 366.7M554.1 366.7L593.1 344.2M593.1 344.2L638.2 318.2M638.2 318.2L647 313.1M533.9 382.2L571.3 360.6M571.3 360.6L593 348.1M593 348.1L632.5 325.2M632.5 325.2L648.6 315.9M537.6 388.5L572.9 368.1M610.9 346.2L652.3 322.3M542 396.3L573 378.4M573 378.4L614.1 354.6M614.1 354.6L655.1 331M590.5 217L610.2 251.1M610.2 251.1L627.1 280.4M627.1 280.4L646.8 314.6M646.8 314.6L656.7 331.7M582.3 221.7L600.2 252.7M600.2 252.7L620.8 288.3M633.6 310.4L646.1 332.1M646.1 332.1L648.6 336.4M574.3 226.3L594.1 260.6M594.1 260.6L614.3 295.6M614.3 295.6L626.9 317.5M626.9 317.5L640.5 341M563.6 232.5L573.8 250.2M573.8 250.2L593.2 283.7M593.2 283.7L611.9 316.1M611.9 316.1L624 337.1M624 337.1L629.9 347.2M557 236.3L575.7 268.8M590.8 294.8L610.2 328.5M610.2 328.5L622.3 349.5M622.3 349.5L623.2 351M548 241.5L564.7 270.3M564.7 270.3L576.3 290.4M576.3 290.4L594.4 321.8M594.4 321.8L610.8 350.1M553.5 270.5L570.7 300.3M570.7 300.3L581.9 319.6M581.9 319.6L595.4 343.1M604.8 359.3L605.8 361.1M533.3 250L545.8 271.6M545.8 271.6L560.4 296.9M560.4 296.9L579.3 329.7M579.3 329.7L599.5 364.7M539.8 272.7L549.6 289.6M549.6 289.6L569.9 324.7M569.9 324.7L591.1 361.6M591.1 361.6L594.6 367.6M521 257.1L542.4 294.2M542.4 294.2L558.8 322.5M558.8 322.5L580.1 359.5M580.1 359.5L587.2 371.8M510.9 262.9L532.7 300.7M532.7 300.7L542.3 317.4M542.3 317.4L556 341M556 341L576.7 376.9M576.7 376.9L577.1 377.6M525.1 304.9L536.1 323.9M536.1 323.9L557.3 360.6M557.3 360.6L569.6 382M496.6 271.2L509.8 294.2M509.8 294.2L520.6 312.8M520.6 312.8L531.9 332.3M531.9 332.3L542.8 351.3M542.8 351.3L552.1 367.4M486.6 276.9L507.7 313.5M543 374.7L552.8 391.7M477.2 282.3L490.7 305.7M490.7 305.7L505.9 332.1M505.9 332.1L516.9 351.1M516.9 351.1L526.8 368.2M543 396.3L543.5 397.1" stroke="#cbcaca" stroke-width="2.7"/><path d="M476.6 282.9L516.4 259.8M516.4 259.8L560.1 234.6M560.1 234.6L586.9 219.1M586.9 219.1L591.3 216.6M479.5 287.9L503 274.3M503 274.3L536.2 255.2M579.3 230.2L594.2 221.6M483.7 295.2L526.2 270.6M526.2 270.6L557.3 252.7M557.3 252.7L578.9 240.2M487.6 302L532.7 276M532.7 276L579.1 249.2M579.1 249.2L602.4 235.8M490.7 307.3L527.4 286.1M527.4 286.1L570.5 261.2M570.5 261.2L603 242.4M603 242.4L605.4 241.1M493.8 312.7L528.5 292.6M528.5 292.6L556.1 276.7M556.1 276.7L586.7 259M586.7 259L608.5 246.4M498.7 321.3L540 297.4M540 297.4L568.2 281.1M568.2 281.1L603.8 260.6M565.5 293.2L590.3 278.9M590.3 278.9L618 262.9M507.5 336.5L543.8 315.5M543.8 315.5L580.5 294.3M580.5 294.3L616.4 273.6M616.4 273.6L622.3 270.3M510.9 342.4L533.3 329.5M533.3 329.5L553.8 317.6M553.8 317.6L598.4 291.9M598.4 291.9L625.7 276.2M514.8 349.1L541.4 333.7M541.4 333.7L572.5 315.7M572.5 315.7L603.8 297.7M517.7 354.1L540.5 340.9M540.5 340.9L575.8 320.5M607.6 302.2L632.4 287.9M523.9 364.8L556.5 346M556.5 346L578.8 333.1M578.8 333.1L604.2 318.5M570.1 344.8L590.2 333.2M590.2 333.2L616.3 318.1M641 303.8L641.5 303.6M532.3 379.3L554.1 366.7M554.1 366.7L593.1 344.2M593.1 344.2L638.2 318.2M638.2 318.2L647 313.1M533.9 382.2L571.3 360.6M571.3 360.6L593 348.1M593 348.1L632.5 325.2M632.5 325.2L648.6 315.9M537.6 388.5L572.9 368.1M610.9 346.2L652.3 322.3M542 396.3L573 378.4M573 378.4L614.1 354.6M614.1 354.6L655.1 331M590.5 217L610.2 251.1M610.2 251.1L627.1 280.4M627.1 280.4L646.8 314.6M646.8 314.6L656.7 331.7M582.3 221.7L600.2 252.7M600.2 252.7L620.8 288.3M633.6 310.4L646.1 332.1M646.1 332.1L648.6 336.4M574.3 226.3L594.1 260.6M594.1 260.6L614.3 295.6M614.3 295.6L626.9 317.5M626.9 317.5L640.5 341M563.6 232.5L573.8 250.2M573.8 250.2L593.2 283.7M593.2 283.7L611.9 316.1M611.9 316.1L624 337.1M624 337.1L629.9 347.2M557 236.3L575.7 268.8M590.8 294.8L610.2 328.5M610.2 328.5L622.3 349.5M622.3 349.5L623.2 351M548 241.5L564.7 270.3M564.7 270.3L576.3 290.4M576.3 290.4L594.4 321.8M594.4 321.8L610.8 350.1M553.5 270.5L570.7 300.3M570.7 300.3L581.9 319.6M581.9 319.6L595.4 343.1M604.8 359.3L605.8 361.1M533.3 250L545.8 271.6M545.8 271.6L560.4 296.9M560.4 296.9L579.3 329.7M579.3 329.7L599.5 364.7M539.8 272.7L549.6 289.6M549.6 289.6L569.9 324.7M569.9 324.7L591.1 361.6M591.1 361.6L594.6 367.6M521 257.1L542.4 294.2M542.4 294.2L558.8 322.5M558.8 322.5L580.1 359.5M580.1 359.5L587.2 371.8M510.9 262.9L532.7 300.7M532.7 300.7L542.3 317.4M542.3 317.4L556 341M556 341L576.7 376.9M576.7 376.9L577.1 377.6M525.1 304.9L536.1 323.9M536.1 323.9L557.3 360.6M557.3 360.6L569.6 382M496.6 271.2L509.8 294.2M509.8 294.2L520.6 312.8M520.6 312.8L531.9 332.3M531.9 332.3L542.8 351.3M542.8 351.3L552.1 367.4M486.6 276.9L507.7 313.5M543 374.7L552.8 391.7M477.2 282.3L490.7 305.7M490.7 305.7L505.9 332.1M505.9 332.1L516.9 351.1M516.9 351.1L526.8 368.2M543 396.3L543.5 397.1" stroke="#fff" stroke-width="1.6740000000000002"/></g>
<clipPath id="c7"><path d="M335 322L470 340 480 395 410 397 335 425Z"/></clipPath>
<g clip-path="url(#c7)" fill="none"><path d="M294.5 304.4L329 295.8M329 295.8L365.8 286.6M365.8 286.6L408 276.1M297.5 316.6L330 308.5M330 308.5L365 299.7M365 299.7L397.1 291.7M397.1 291.7L456.9 276.8M299.7 325.3L326.7 318.5M326.7 318.5L362.1 309.7M362.1 309.7L387.7 303.3M424.6 294.1L449.7 287.9M449.7 287.9L480 280.3M301.8 333.6L334.5 325.5M334.5 325.5L364.3 318M364.3 318L416.4 305.1M448.3 297.1L476.4 290.1M476.4 290.1L482.1 288.7M303.3 339.8L353.2 327.4M353.2 327.4L398.6 316.1M398.6 316.1L426 309.3M426 309.3L465.3 299.5M465.3 299.5L483.7 294.9M305.5 348.7L360.9 334.9M360.9 334.9L386.5 328.6M386.5 328.6L428.2 318.2M428.2 318.2L462.6 309.6M462.6 309.6L485.9 303.8M352.8 342.6L396 331.8M439.1 321.1L487.2 309.1M309.3 363.8L359.3 351.3M410.6 338.5L466.2 324.6M466.2 324.6L489.6 318.8M311.7 373.3L337.4 366.9M337.4 366.9L370.3 358.7M370.3 358.7L399 351.6M452.6 338.2L481 331.1M314 382.4L357.3 371.6M357.3 371.6L386 364.5M436.1 352L465.5 344.7M465.5 344.7L494.3 337.5M315.6 388.9L345.4 381.4M400.6 367.7L445.7 356.4M445.7 356.4L476.5 348.7M476.5 348.7L495.9 343.9M318.1 398.9L361.5 388.1M361.5 388.1L419.5 373.6M419.5 373.6L456.4 364.4M456.4 364.4L493.2 355.2M493.2 355.2L498.4 354M375.3 395.3L418.5 384.5M418.5 384.5L476.2 370.1M476.2 370.1L500.9 364M322.3 415.8L349.7 408.9M392.5 398.3L422.4 390.8M422.4 390.8L474.6 377.8M474.6 377.8L502.6 370.8M325.1 427.3L351.4 420.7M351.4 420.7L385.7 412.1M385.7 412.1L420.3 403.5M420.3 403.5L477.8 389.2M477.8 389.2L505.5 382.3M327.3 435.8L362.4 427.1M410.1 415.2L456 403.7M456 403.7L499 393M499 393L507.6 390.9M328.2 439.6L357.8 432.2M357.8 432.2L397.1 422.4M430.7 414.1L474.9 403M474.9 403L508.5 394.7M330.6 449.1L380.5 436.6M380.5 436.6L424.7 425.6M424.7 425.6L466.2 415.2M466.2 415.2L499.7 406.9M499.7 406.9L510.9 404.1M332.6 457.1L370 447.8M370 447.8L403.4 439.5M403.4 439.5L445.6 429M445.6 429L505.3 414.1M505.3 414.1L512.9 412.2M375.7 457.6L414.3 447.9M465.1 435.3L498 427.1M498 427.1L515.5 422.7M336.6 473.4L385.3 461.3M385.3 461.3L440.2 447.6M440.2 447.6L483.3 436.9M483.3 436.9L517 428.5M339.2 483.7L389.1 471.3M389.1 471.3L418.6 463.9M418.6 463.9L443.7 457.6M443.7 457.6L489.3 446.3M489.3 446.3L519.5 438.7M473.8 261.2L485.3 307.6M485.3 307.6L493.3 339.5M493.3 339.5L501.8 373.7M501.8 373.7L509.2 403.2M509.2 403.2L518.4 440.2M518.4 440.2L518.7 441.5M463.4 263.8L471.8 297.6M479.2 327.4L488.6 365M488.6 365L494.4 388.5M494.4 388.5L502 418.8M502 418.8L508.3 444.1M466.6 313.4L472.2 335.6M472.2 335.6L481 371M481 371L491.8 414.5M491.8 414.5L499.7 446.3M443.1 268.8L451.2 301.1M451.2 301.1L460.7 339.3M460.7 339.3L472.8 387.9M481.8 424.1L488.1 449.2M433.2 271.3L444.8 317.9M444.8 317.9L453.5 353M453.5 353L463.3 392.1M463.3 392.1L471 423M471 423L478.1 451.7M421.7 274.2L432.9 319.2M432.9 319.2L438.9 343.3M438.9 343.3L449.1 384.3M449.1 384.3L461.6 434.1M461.6 434.1L466.7 454.5M414.7 275.9L423.6 311.5M423.6 311.5L430.1 337.7M430.1 337.7L439.7 376.2M439.7 376.2L452.2 426.1M452.2 426.1L457.7 448.2M457.7 448.2L459.7 456.3M406.1 278.1L413.6 307.8M413.6 307.8L423 345.8M423 345.8L429.7 372.4M429.7 372.4L438.9 409.4M438.9 409.4L448.8 449.2M448.8 449.2L451.1 458.4M395.7 280.7L402 306.1M408 330.1L414.4 355.9M414.4 355.9L425.6 400.8M436.7 445.3L440.6 461M383.2 283.8L391 315M398.2 343.6L409.9 390.9M409.9 390.9L417.7 421.9M425.7 454.1L428.2 464.1M372.3 286.5L382 325.5M382 325.5L387.5 347.6M387.5 347.6L399 393.4M399 393.4L410.7 440.6M410.7 440.6L417.3 466.8M359.7 289.6L371.8 338.2M371.8 338.2L379.8 370.5M379.8 370.5L386.6 397.8M386.6 397.8L398.2 444.2M398.2 444.2L404.6 470M351.6 291.7L358.1 318M358.1 318L365.4 347.3M365.4 347.3L371.5 371.5M371.5 371.5L379.5 403.7M385.2 426.4L396.4 471.4M396.4 471.4L396.5 472M342.9 293.8L348.3 315.7M348.3 315.7L356 346.5M366.4 388L373.5 416.8M373.5 416.8L379.7 441.4M379.7 441.4L387.8 474.2M333.6 296.2L344 338.1M344 338.1L356.2 387M356.2 387L368.3 435.6M368.3 435.6L375.2 463.1M375.2 463.1L378.5 476.5M321.7 299.1L331.1 337.2M331.1 337.2L338.1 365.2M338.1 365.2L344.9 392.3M344.9 392.3L351 416.7M351 416.7L360.1 453.4M360.1 453.4L366.6 479.5M312.3 301.5L319.8 331.4M319.8 331.4L325.6 354.8M325.6 354.8L337 400.5M347.1 440.7L356.4 478M356.4 478L357.3 481.8M312.2 330.7L322.6 372.5M322.6 372.5L330.7 405.1M330.7 405.1L341.6 448.6M297.5 305.2L307.6 345.9M307.6 345.9L315.4 377M315.4 377L325.4 417.1M325.4 417.1L332.4 445.2M332.4 445.2L340.2 476.4" stroke="#cbcaca" stroke-width="2.6"/><path d="M294.5 304.4L329 295.8M329 295.8L365.8 286.6M365.8 286.6L408 276.1M297.5 316.6L330 308.5M330 308.5L365 299.7M365 299.7L397.1 291.7M397.1 291.7L456.9 276.8M299.7 325.3L326.7 318.5M326.7 318.5L362.1 309.7M362.1 309.7L387.7 303.3M424.6 294.1L449.7 287.9M449.7 287.9L480 280.3M301.8 333.6L334.5 325.5M334.5 325.5L364.3 318M364.3 318L416.4 305.1M448.3 297.1L476.4 290.1M476.4 290.1L482.1 288.7M303.3 339.8L353.2 327.4M353.2 327.4L398.6 316.1M398.6 316.1L426 309.3M426 309.3L465.3 299.5M465.3 299.5L483.7 294.9M305.5 348.7L360.9 334.9M360.9 334.9L386.5 328.6M386.5 328.6L428.2 318.2M428.2 318.2L462.6 309.6M462.6 309.6L485.9 303.8M352.8 342.6L396 331.8M439.1 321.1L487.2 309.1M309.3 363.8L359.3 351.3M410.6 338.5L466.2 324.6M466.2 324.6L489.6 318.8M311.7 373.3L337.4 366.9M337.4 366.9L370.3 358.7M370.3 358.7L399 351.6M452.6 338.2L481 331.1M314 382.4L357.3 371.6M357.3 371.6L386 364.5M436.1 352L465.5 344.7M465.5 344.7L494.3 337.5M315.6 388.9L345.4 381.4M400.6 367.7L445.7 356.4M445.7 356.4L476.5 348.7M476.5 348.7L495.9 343.9M318.1 398.9L361.5 388.1M361.5 388.1L419.5 373.6M419.5 373.6L456.4 364.4M456.4 364.4L493.2 355.2M493.2 355.2L498.4 354M375.3 395.3L418.5 384.5M418.5 384.5L476.2 370.1M476.2 370.1L500.9 364M322.3 415.8L349.7 408.9M392.5 398.3L422.4 390.8M422.4 390.8L474.6 377.8M474.6 377.8L502.6 370.8M325.1 427.3L351.4 420.7M351.4 420.7L385.7 412.1M385.7 412.1L420.3 403.5M420.3 403.5L477.8 389.2M477.8 389.2L505.5 382.3M327.3 435.8L362.4 427.1M410.1 415.2L456 403.7M456 403.7L499 393M499 393L507.6 390.9M328.2 439.6L357.8 432.2M357.8 432.2L397.1 422.4M430.7 414.1L474.9 403M474.9 403L508.5 394.7M330.6 449.1L380.5 436.6M380.5 436.6L424.7 425.6M424.7 425.6L466.2 415.2M466.2 415.2L499.7 406.9M499.7 406.9L510.9 404.1M332.6 457.1L370 447.8M370 447.8L403.4 439.5M403.4 439.5L445.6 429M445.6 429L505.3 414.1M505.3 414.1L512.9 412.2M375.7 457.6L414.3 447.9M465.1 435.3L498 427.1M498 427.1L515.5 422.7M336.6 473.4L385.3 461.3M385.3 461.3L440.2 447.6M440.2 447.6L483.3 436.9M483.3 436.9L517 428.5M339.2 483.7L389.1 471.3M389.1 471.3L418.6 463.9M418.6 463.9L443.7 457.6M443.7 457.6L489.3 446.3M489.3 446.3L519.5 438.7M473.8 261.2L485.3 307.6M485.3 307.6L493.3 339.5M493.3 339.5L501.8 373.7M501.8 373.7L509.2 403.2M509.2 403.2L518.4 440.2M518.4 440.2L518.7 441.5M463.4 263.8L471.8 297.6M479.2 327.4L488.6 365M488.6 365L494.4 388.5M494.4 388.5L502 418.8M502 418.8L508.3 444.1M466.6 313.4L472.2 335.6M472.2 335.6L481 371M481 371L491.8 414.5M491.8 414.5L499.7 446.3M443.1 268.8L451.2 301.1M451.2 301.1L460.7 339.3M460.7 339.3L472.8 387.9M481.8 424.1L488.1 449.2M433.2 271.3L444.8 317.9M444.8 317.9L453.5 353M453.5 353L463.3 392.1M463.3 392.1L471 423M471 423L478.1 451.7M421.7 274.2L432.9 319.2M432.9 319.2L438.9 343.3M438.9 343.3L449.1 384.3M449.1 384.3L461.6 434.1M461.6 434.1L466.7 454.5M414.7 275.9L423.6 311.5M423.6 311.5L430.1 337.7M430.1 337.7L439.7 376.2M439.7 376.2L452.2 426.1M452.2 426.1L457.7 448.2M457.7 448.2L459.7 456.3M406.1 278.1L413.6 307.8M413.6 307.8L423 345.8M423 345.8L429.7 372.4M429.7 372.4L438.9 409.4M438.9 409.4L448.8 449.2M448.8 449.2L451.1 458.4M395.7 280.7L402 306.1M408 330.1L414.4 355.9M414.4 355.9L425.6 400.8M436.7 445.3L440.6 461M383.2 283.8L391 315M398.2 343.6L409.9 390.9M409.9 390.9L417.7 421.9M425.7 454.1L428.2 464.1M372.3 286.5L382 325.5M382 325.5L387.5 347.6M387.5 347.6L399 393.4M399 393.4L410.7 440.6M410.7 440.6L417.3 466.8M359.7 289.6L371.8 338.2M371.8 338.2L379.8 370.5M379.8 370.5L386.6 397.8M386.6 397.8L398.2 444.2M398.2 444.2L404.6 470M351.6 291.7L358.1 318M358.1 318L365.4 347.3M365.4 347.3L371.5 371.5M371.5 371.5L379.5 403.7M385.2 426.4L396.4 471.4M396.4 471.4L396.5 472M342.9 293.8L348.3 315.7M348.3 315.7L356 346.5M366.4 388L373.5 416.8M373.5 416.8L379.7 441.4M379.7 441.4L387.8 474.2M333.6 296.2L344 338.1M344 338.1L356.2 387M356.2 387L368.3 435.6M368.3 435.6L375.2 463.1M375.2 463.1L378.5 476.5M321.7 299.1L331.1 337.2M331.1 337.2L338.1 365.2M338.1 365.2L344.9 392.3M344.9 392.3L351 416.7M351 416.7L360.1 453.4M360.1 453.4L366.6 479.5M312.3 301.5L319.8 331.4M319.8 331.4L325.6 354.8M325.6 354.8L337 400.5M347.1 440.7L356.4 478M356.4 478L357.3 481.8M312.2 330.7L322.6 372.5M322.6 372.5L330.7 405.1M330.7 405.1L341.6 448.6M297.5 305.2L307.6 345.9M307.6 345.9L315.4 377M315.4 377L325.4 417.1M325.4 417.1L332.4 445.2M332.4 445.2L340.2 476.4" stroke="#fff" stroke-width="1.566"/></g>
<clipPath id="c8"><path d="M470 340L550 340 530 375 470 398Z"/></clipPath>
<g clip-path="url(#c8)" fill="none"><path d="M490.3 320.3L515.9 311M515.9 311L542.2 301.4M443.5 342.5L478.3 329.8M478.3 329.8L508.6 318.8M508.6 318.8L543.9 305.9M446.5 350.6L493.9 333.3M493.9 333.3L518.2 324.4M518.2 324.4L546.8 314M526.6 329.9L549.5 321.5M452.2 366.5L479.4 356.6M479.4 356.6L517 342.9M517 342.9L552.6 329.9M454.7 373.3L493.4 359.2M493.4 359.2L541.1 341.9M541.1 341.9L555.1 336.8M456.2 377.4L504.2 359.9M504.2 359.9L545.8 344.8M545.8 344.8L556.6 340.8M459.2 385.7L510.8 366.9M510.8 366.9L553.6 351.3M553.6 351.3L559.6 349.1M460.8 390L497.2 376.7M497.2 376.7L528.3 365.4M528.3 365.4L557.1 354.9M557.1 354.9L561.2 353.4M463.8 398.2L503.2 383.9M503.2 383.9L539.3 370.8M466.4 405.2L518.3 386.3M518.3 386.3L566.7 368.7M469.6 414.2L509.5 399.7M562 380.6L570 377.7M471.3 418.7L505 406.5M505 406.5L553.1 389M553.1 389L571.6 382.2M504.3 416.3L528.9 407.3M521.5 421.8L562.4 407M562.4 407L578.5 401.1M539.9 301.3L552.5 335.9M552.5 335.9L567.8 377.9M567.8 377.9L576.4 401.7M535.8 302.8L549.6 340.7M549.6 340.7L559 366.4M559 366.4L571.5 400.8M571.5 400.8L572.4 403.1M520.8 308.2L534.3 345.3M534.3 345.3L542.6 368.2M542.6 368.2L552.2 394.5M552.2 394.5L557.3 408.6M512.3 311.3L519.3 330.6M519.3 330.6L531.7 364.8M531.7 364.8L544.8 400.9M544.8 400.9L548.8 411.7M502.7 314.8L512.1 340.6M512.1 340.6L519.5 360.9M519.5 360.9L527.6 383.2M493.4 318.2L501.8 341.2M501.8 341.2L508.4 359.5M508.4 359.5L523 399.5M523 399.5L529.9 418.6M482.4 322.2L492.9 351.1M492.9 351.1L503.6 380.5M503.6 380.5L517.9 419.7M517.9 419.7L518.9 422.6M472.5 325.8L482.3 352.9M482.3 352.9L489.7 373.2M489.7 373.2L500.6 403.1M500.6 403.1L509 426.2M458.5 330.9L470.9 364.9M470.9 364.9L478.1 384.6M478.1 384.6L490.3 418.3M490.3 418.3L495.1 431.3M450.2 333.9L459.6 359.7M474.4 400.4L482.8 423.4" stroke="#cbcaca" stroke-width="2.6"/><path d="M490.3 320.3L515.9 311M515.9 311L542.2 301.4M443.5 342.5L478.3 329.8M478.3 329.8L508.6 318.8M508.6 318.8L543.9 305.9M446.5 350.6L493.9 333.3M493.9 333.3L518.2 324.4M518.2 324.4L546.8 314M526.6 329.9L549.5 321.5M452.2 366.5L479.4 356.6M479.4 356.6L517 342.9M517 342.9L552.6 329.9M454.7 373.3L493.4 359.2M493.4 359.2L541.1 341.9M541.1 341.9L555.1 336.8M456.2 377.4L504.2 359.9M504.2 359.9L545.8 344.8M545.8 344.8L556.6 340.8M459.2 385.7L510.8 366.9M510.8 366.9L553.6 351.3M553.6 351.3L559.6 349.1M460.8 390L497.2 376.7M497.2 376.7L528.3 365.4M528.3 365.4L557.1 354.9M557.1 354.9L561.2 353.4M463.8 398.2L503.2 383.9M503.2 383.9L539.3 370.8M466.4 405.2L518.3 386.3M518.3 386.3L566.7 368.7M469.6 414.2L509.5 399.7M562 380.6L570 377.7M471.3 418.7L505 406.5M505 406.5L553.1 389M553.1 389L571.6 382.2M504.3 416.3L528.9 407.3M521.5 421.8L562.4 407M562.4 407L578.5 401.1M539.9 301.3L552.5 335.9M552.5 335.9L567.8 377.9M567.8 377.9L576.4 401.7M535.8 302.8L549.6 340.7M549.6 340.7L559 366.4M559 366.4L571.5 400.8M571.5 400.8L572.4 403.1M520.8 308.2L534.3 345.3M534.3 345.3L542.6 368.2M542.6 368.2L552.2 394.5M552.2 394.5L557.3 408.6M512.3 311.3L519.3 330.6M519.3 330.6L531.7 364.8M531.7 364.8L544.8 400.9M544.8 400.9L548.8 411.7M502.7 314.8L512.1 340.6M512.1 340.6L519.5 360.9M519.5 360.9L527.6 383.2M493.4 318.2L501.8 341.2M501.8 341.2L508.4 359.5M508.4 359.5L523 399.5M523 399.5L529.9 418.6M482.4 322.2L492.9 351.1M492.9 351.1L503.6 380.5M503.6 380.5L517.9 419.7M517.9 419.7L518.9 422.6M472.5 325.8L482.3 352.9M482.3 352.9L489.7 373.2M489.7 373.2L500.6 403.1M500.6 403.1L509 426.2M458.5 330.9L470.9 364.9M470.9 364.9L478.1 384.6M478.1 384.6L490.3 418.3M490.3 418.3L495.1 431.3M450.2 333.9L459.6 359.7M474.4 400.4L482.8 423.4" stroke="#fff" stroke-width="1.566"/></g>
<clipPath id="c9"><path d="M335 450L420 428 480 425 480 493 335 493Z"/></clipPath>
<g clip-path="url(#c9)" fill="none"><path d="M361.2 349.1L401 365.2M401 365.2L439.2 380.6M473.3 394.4L500.7 405.5M358 357.2L382.8 367.2M382.8 367.2L412.4 379.2M412.4 379.2L451.4 394.9M490.9 410.9L513.9 420.2M355.3 363.7L379.5 373.5M379.5 373.5L427.9 393.1M427.9 393.1L471.8 410.8M471.8 410.8L497.2 421.1M351.9 372.1L379.1 383.1M379.1 383.1L418.3 398.9M418.3 398.9L444.5 409.5M444.5 409.5L468.1 419.1M501.5 432.5L507.8 435.1M348.8 380L383.8 394.1M383.8 394.1L424.8 410.7M424.8 410.7L464 426.5M464 426.5L504.7 442.9M346 386.8L391.4 405.1M438.6 424.2L472 437.7M472 437.7L501.9 449.8M343.2 393.6L368.2 403.7M414.8 422.5L465.1 442.9M465.1 442.9L494.9 454.9M494.9 454.9L499.1 456.6M363.4 408.6L410 427.4M410 427.4L448.9 443.1M448.9 443.1L491.9 460.5M491.9 460.5L496.8 462.5M337 409L383.8 427.9M383.8 427.9L406.1 436.9M406.1 436.9L432.7 447.7M432.7 447.7L481.4 467.4M481.4 467.4L492.9 472M333.6 417.4L367.6 431.1M367.6 431.1L394.4 441.9M394.4 441.9L428.4 455.7M469.1 472.1L489.6 480.4M330.3 425.7L353.6 435.1M353.6 435.1L386.6 448.4M386.6 448.4L426.2 464.4M459 477.7L486.2 488.7M380.3 452.1L406.7 462.8M406.7 462.8L437 475M437 475L474.3 490.1M474.3 490.1L484 494M323.8 441.8L346.8 451M346.8 451L392.4 469.5M392.4 469.5L438.1 487.9M438.1 487.9L479.5 504.7M479.5 504.7L479.7 504.7M320.4 450.1L363.3 467.4M363.3 467.4L408.6 485.8M408.6 485.8L446.2 500.9M446.2 500.9L476.3 513.1M318.8 454L351.1 467.1M351.1 467.1L403.4 488.2M403.4 488.2L436.6 501.6M436.6 501.6L465.7 513.4M314.8 464L350.4 478.4M350.4 478.4L381.6 491M381.6 491L405.6 500.7M405.6 500.7L437 513.3M437 513.3L470.7 527M351.2 488.6L378.6 499.7M378.6 499.7L430.9 520.8M430.9 520.8L467.3 535.5M309.1 478L346 492.9M346 492.9L376.3 505.1M376.3 505.1L399 514.3M399 514.3L429.1 526.5M429.1 526.5L457.8 538M457.8 538L465.1 541M304.9 488.6L332.8 499.9M332.8 499.9L384.3 520.7M384.3 520.7L408.7 530.5M408.7 530.5L457.5 550.3M457.5 550.3L460.8 551.6M301.5 496.9L343.1 513.7M343.1 513.7L371.5 525.2M371.5 525.2L416.5 543.3M416.5 543.3L450.8 557.2M299.9 501L341 517.6M341 517.6L378.1 532.6M378.1 532.6L407.9 544.7M407.9 544.7L430.3 553.7M430.3 553.7L455.8 564M516.5 412.3L501.9 448.5M501.9 448.5L493.7 468.8M493.7 468.8L485 490.3M485 490.3L476.8 510.5M476.8 510.5L465.3 539.1M465.3 539.1L453.5 568.2M506.9 408.5L496.3 434.7M496.3 434.7L486.4 459.1M486.4 459.1L471.4 496.3M471.4 496.3L461 522M461 522L443.9 564.4M482.3 446.9L475 465.1M475 465.1L461.1 499.5M461.1 499.5L450.2 526.5M450.2 526.5L440.6 550.2M493.6 403.1L481.3 433.7M481.3 433.7L472.2 456.2M461.2 483.3L452.2 505.7M452.2 505.7L435.6 546.8M435.6 546.8L430.6 559M481.6 398.3L469.3 428.7M469.3 428.7L458.5 455.3M458.5 455.3L446.6 484.8M458.6 435.1L445.6 467.2M445.6 467.2L429 508.2M429 508.2L415.4 541.9M415.4 541.9L411.6 551.3M466.6 392.2L457.3 415.2M457.3 415.2L443.5 449.3M443.5 449.3L426.2 492.2M426.2 492.2L413.1 524.5M413.1 524.5L403.6 548.1M456.2 388L440.6 426.6M440.6 426.6L430 452.9M430 452.9L413.7 493.2M413.7 493.2L399.6 528.3M399.6 528.3L393.2 543.9M448.1 384.7L431.9 424.9M431.9 424.9L416.7 462.4M416.7 462.4L407.6 484.9M407.6 484.9L390.3 527.8M438.1 380.7L421.6 421.5M406.9 458L397.9 480.1M397.9 480.1L389.8 500.3M389.8 500.3L375.1 536.6M423.4 374.7L415.8 393.5M415.8 393.5L400.5 431.3M400.5 431.3L392.9 450.2M392.9 450.2L383.3 474M375 494.6L360.4 530.6M404.5 402.2L392.9 430.9M378.7 466.1L363.9 502.5M363.9 502.5L355.5 523.3M355.5 523.3L353.7 527.9M407.8 368.5L390.8 410.7M390.8 410.7L376.1 447M376.1 447L367.1 469.4M359.1 489.1L346.7 519.8M346.7 519.8L344.9 524.4M398.7 364.8L384.8 399.1M384.8 399.1L372 430.8M372 430.8L354.8 473.5M354.8 473.5L340.3 509.4M340.3 509.4L335.7 520.7M389.2 360.9L378 388.5M378 388.5L369.3 410.1M369.3 410.1L362 428.1M362 428.1L345.4 469.4M345.4 469.4L331.9 502.6M331.9 502.6L326.2 516.8M379.7 357.1L364.5 394.7M364.5 394.7L356.7 413.9M356.7 413.9L346.2 440M346.2 440L333.4 471.7M369.7 353L357.3 383.8M357.3 383.8L339.9 426.7M339.9 426.7L326.3 460.5M326.3 460.5L315.2 487.9M315.2 487.9L306.7 509M361 349.5L350.5 375.6M350.5 375.6L337.7 407.2M337.7 407.2L324.3 440.5M324.3 440.5L307.8 481.3M307.8 481.3L298 505.5" stroke="#cbcaca" stroke-width="2.6"/><path d="M361.2 349.1L401 365.2M401 365.2L439.2 380.6M473.3 394.4L500.7 405.5M358 357.2L382.8 367.2M382.8 367.2L412.4 379.2M412.4 379.2L451.4 394.9M490.9 410.9L513.9 420.2M355.3 363.7L379.5 373.5M379.5 373.5L427.9 393.1M427.9 393.1L471.8 410.8M471.8 410.8L497.2 421.1M351.9 372.1L379.1 383.1M379.1 383.1L418.3 398.9M418.3 398.9L444.5 409.5M444.5 409.5L468.1 419.1M501.5 432.5L507.8 435.1M348.8 380L383.8 394.1M383.8 394.1L424.8 410.7M424.8 410.7L464 426.5M464 426.5L504.7 442.9M346 386.8L391.4 405.1M438.6 424.2L472 437.7M472 437.7L501.9 449.8M343.2 393.6L368.2 403.7M414.8 422.5L465.1 442.9M465.1 442.9L494.9 454.9M494.9 454.9L499.1 456.6M363.4 408.6L410 427.4M410 427.4L448.9 443.1M448.9 443.1L491.9 460.5M491.9 460.5L496.8 462.5M337 409L383.8 427.9M383.8 427.9L406.1 436.9M406.1 436.9L432.7 447.7M432.7 447.7L481.4 467.4M481.4 467.4L492.9 472M333.6 417.4L367.6 431.1M367.6 431.1L394.4 441.9M394.4 441.9L428.4 455.7M469.1 472.1L489.6 480.4M330.3 425.7L353.6 435.1M353.6 435.1L386.6 448.4M386.6 448.4L426.2 464.4M459 477.7L486.2 488.7M380.3 452.1L406.7 462.8M406.7 462.8L437 475M437 475L474.3 490.1M474.3 490.1L484 494M323.8 441.8L346.8 451M346.8 451L392.4 469.5M392.4 469.5L438.1 487.9M438.1 487.9L479.5 504.7M479.5 504.7L479.7 504.7M320.4 450.1L363.3 467.4M363.3 467.4L408.6 485.8M408.6 485.8L446.2 500.9M446.2 500.9L476.3 513.1M318.8 454L351.1 467.1M351.1 467.1L403.4 488.2M403.4 488.2L436.6 501.6M436.6 501.6L465.7 513.4M314.8 464L350.4 478.4M350.4 478.4L381.6 491M381.6 491L405.6 500.7M405.6 500.7L437 513.3M437 513.3L470.7 527M351.2 488.6L378.6 499.7M378.6 499.7L430.9 520.8M430.9 520.8L467.3 535.5M309.1 478L346 492.9M346 492.9L376.3 505.1M376.3 505.1L399 514.3M399 514.3L429.1 526.5M429.1 526.5L457.8 538M457.8 538L465.1 541M304.9 488.6L332.8 499.9M332.8 499.9L384.3 520.7M384.3 520.7L408.7 530.5M408.7 530.5L457.5 550.3M457.5 550.3L460.8 551.6M301.5 496.9L343.1 513.7M343.1 513.7L371.5 525.2M371.5 525.2L416.5 543.3M416.5 543.3L450.8 557.2M299.9 501L341 517.6M341 517.6L378.1 532.6M378.1 532.6L407.9 544.7M407.9 544.7L430.3 553.7M430.3 553.7L455.8 564M516.5 412.3L501.9 448.5M501.9 448.5L493.7 468.8M493.7 468.8L485 490.3M485 490.3L476.8 510.5M476.8 510.5L465.3 539.1M465.3 539.1L453.5 568.2M506.9 408.5L496.3 434.7M496.3 434.7L486.4 459.1M486.4 459.1L471.4 496.3M471.4 496.3L461 522M461 522L443.9 564.4M482.3 446.9L475 465.1M475 465.1L461.1 499.5M461.1 499.5L450.2 526.5M450.2 526.5L440.6 550.2M493.6 403.1L481.3 433.7M481.3 433.7L472.2 456.2M461.2 483.3L452.2 505.7M452.2 505.7L435.6 546.8M435.6 546.8L430.6 559M481.6 398.3L469.3 428.7M469.3 428.7L458.5 455.3M458.5 455.3L446.6 484.8M458.6 435.1L445.6 467.2M445.6 467.2L429 508.2M429 508.2L415.4 541.9M415.4 541.9L411.6 551.3M466.6 392.2L457.3 415.2M457.3 415.2L443.5 449.3M443.5 449.3L426.2 492.2M426.2 492.2L413.1 524.5M413.1 524.5L403.6 548.1M456.2 388L440.6 426.6M440.6 426.6L430 452.9M430 452.9L413.7 493.2M413.7 493.2L399.6 528.3M399.6 528.3L393.2 543.9M448.1 384.7L431.9 424.9M431.9 424.9L416.7 462.4M416.7 462.4L407.6 484.9M407.6 484.9L390.3 527.8M438.1 380.7L421.6 421.5M406.9 458L397.9 480.1M397.9 480.1L389.8 500.3M389.8 500.3L375.1 536.6M423.4 374.7L415.8 393.5M415.8 393.5L400.5 431.3M400.5 431.3L392.9 450.2M392.9 450.2L383.3 474M375 494.6L360.4 530.6M404.5 402.2L392.9 430.9M378.7 466.1L363.9 502.5M363.9 502.5L355.5 523.3M355.5 523.3L353.7 527.9M407.8 368.5L390.8 410.7M390.8 410.7L376.1 447M376.1 447L367.1 469.4M359.1 489.1L346.7 519.8M346.7 519.8L344.9 524.4M398.7 364.8L384.8 399.1M384.8 399.1L372 430.8M372 430.8L354.8 473.5M354.8 473.5L340.3 509.4M340.3 509.4L335.7 520.7M389.2 360.9L378 388.5M378 388.5L369.3 410.1M369.3 410.1L362 428.1M362 428.1L345.4 469.4M345.4 469.4L331.9 502.6M331.9 502.6L326.2 516.8M379.7 357.1L364.5 394.7M364.5 394.7L356.7 413.9M356.7 413.9L346.2 440M346.2 440L333.4 471.7M369.7 353L357.3 383.8M357.3 383.8L339.9 426.7M339.9 426.7L326.3 460.5M326.3 460.5L315.2 487.9M315.2 487.9L306.7 509M361 349.5L350.5 375.6M350.5 375.6L337.7 407.2M337.7 407.2L324.3 440.5M324.3 440.5L307.8 481.3M307.8 481.3L298 505.5" stroke="#fff" stroke-width="1.566"/></g>
<clipPath id="c10"><path d="M470 464L515 464 522 493 470 493Z"/></clipPath>
<g clip-path="url(#c10)" fill="none"><path d="M484.2 431.4L506.5 444.3M506.5 444.3L538.9 463M538.9 463L542.7 465.2M480.8 437.4L520.8 460.5M520.8 460.5L539.3 471.1M474.8 447.7L494.5 459.1M494.5 459.1L533.3 481.5M498 465.6L525.9 481.7M525.9 481.7L531.3 484.9M469.1 457.5L513.7 483.3M513.7 483.3L527.6 491.3M463.9 466.5L486.5 479.5M486.5 479.5L514.6 495.8M514.6 495.8L522.4 500.3M461 471.6L480.1 482.6M513.5 502L519.5 505.4M457.5 477.6L482.4 492M482.4 492L503.4 504.1M503.4 504.1L516 511.4M452.8 485.8L487.5 505.9M487.5 505.9L507.3 517.3M507.3 517.3L511.3 519.6M542.5 466.3L524 498.3M524 498.3L509.6 523.3M509.6 523.3L508.7 524.8M533.8 461.3L514.5 494.8M514.5 494.8L500 519.8M528.4 458.2L513.6 483.9M513.6 483.9L497.2 512.3M521.5 454.2L505.6 481.8M505.6 481.8L490.3 508.3M490.3 508.3L487.8 512.7M513.7 449.7L492.9 485.9M492.9 485.9L480 508.2M507 445.9L489.8 475.6M481.8 479.2L470.9 498.1M475.8 465.3L458.2 495.7M483 432L462.2 467.9M462.2 467.9L450.6 488.1" stroke="#cbcaca" stroke-width="2.6"/><path d="M484.2 431.4L506.5 444.3M506.5 444.3L538.9 463M538.9 463L542.7 465.2M480.8 437.4L520.8 460.5M520.8 460.5L539.3 471.1M474.8 447.7L494.5 459.1M494.5 459.1L533.3 481.5M498 465.6L525.9 481.7M525.9 481.7L531.3 484.9M469.1 457.5L513.7 483.3M513.7 483.3L527.6 491.3M463.9 466.5L486.5 479.5M486.5 479.5L514.6 495.8M514.6 495.8L522.4 500.3M461 471.6L480.1 482.6M513.5 502L519.5 505.4M457.5 477.6L482.4 492M482.4 492L503.4 504.1M503.4 504.1L516 511.4M452.8 485.8L487.5 505.9M487.5 505.9L507.3 517.3M507.3 517.3L511.3 519.6M542.5 466.3L524 498.3M524 498.3L509.6 523.3M509.6 523.3L508.7 524.8M533.8 461.3L514.5 494.8M514.5 494.8L500 519.8M528.4 458.2L513.6 483.9M513.6 483.9L497.2 512.3M521.5 454.2L505.6 481.8M505.6 481.8L490.3 508.3M490.3 508.3L487.8 512.7M513.7 449.7L492.9 485.9M492.9 485.9L480 508.2M507 445.9L489.8 475.6M481.8 479.2L470.9 498.1M475.8 465.3L458.2 495.7M483 432L462.2 467.9M462.2 467.9L450.6 488.1" stroke="#fff" stroke-width="1.566"/></g>
<clipPath id="c11"><path d="M24 422L215 422 170 455 24 476Z"/></clipPath>
<g clip-path="url(#c11)" fill="none"><path d="M-0.3 364.4L18.6 361.1M18.6 361.1L37.2 357.8M37.2 357.8L61.7 353.5M83.6 349.6L103.2 346.2M103.2 346.2L132.4 341M132.4 341L151.1 337.7M151.1 337.7L165.9 335.1M165.9 335.1L186.9 331.4M186.9 331.4L203.1 328.5M1.4 373.8L19 370.6M43.5 366.3L63.3 362.8M63.3 362.8L85 359M85 359L105 355.5M105 355.5L134.1 350.4M134.1 350.4L161.5 345.5M161.5 345.5L186.7 341.1M186.7 341.1L204.7 337.9M2.5 380L24.6 376.1M24.6 376.1L39.3 373.5M39.3 373.5L54.5 370.9M54.5 370.9L71.7 367.8M71.7 367.8L96.3 363.5M96.3 363.5L119.6 359.4M119.6 359.4L146.4 354.7M146.4 354.7L164.2 351.5M164.2 351.5L180.8 348.6M198.6 345.5L205.9 344.2M4.4 390.7L30.9 386.1M30.9 386.1L62.1 380.6M106 372.8L135.9 367.6M135.9 367.6L154.1 364.4M154.1 364.4L174 360.8M174 360.8L190.7 357.9M190.7 357.9L207.7 354.9M5.8 398.8L38.5 393.1M38.5 393.1L52.9 390.5M52.9 390.5L79 385.9M103.2 381.7L126 377.7M126 377.7L148 373.8M148 373.8L164 370.9M164 370.9L180.1 368.1M180.1 368.1L209.2 363M6.9 404.8L27.3 401.2M27.3 401.2L50.7 397.1M50.7 397.1L66.2 394.3M66.2 394.3L96.6 389M120.8 384.7L137.3 381.8M137.3 381.8L168.2 376.3M168.2 376.3L186.4 373.1M186.4 373.1L200.8 370.6M200.8 370.6L210.2 368.9M8.8 415.5L23.5 412.9M23.5 412.9L45.9 409M45.9 409L74 404M74 404L102.9 398.9M102.9 398.9L118 396.3M118 396.3L133.6 393.5M133.6 393.5L162.6 388.4M10 422.5L31 418.8M31 418.8L47.9 415.8M47.9 415.8L79.8 410.1M79.8 410.1L109.8 404.9M132.8 400.8L148.4 398.1M148.4 398.1L164.4 395.2M188.5 391L211.3 387M211.3 387L213.3 386.6M11.2 429.2L32.7 425.4M32.7 425.4L48.9 422.6M48.9 422.6L79.5 417.2M110.4 411.7L142.3 406.1M142.3 406.1L171.3 401M171.3 401L198.4 396.2M198.4 396.2L214.5 393.4M12.3 435.6L33.6 431.8M33.6 431.8L53 428.4M53 428.4L68.4 425.7M68.4 425.7L86.7 422.5M86.7 422.5L115.6 417.4M115.6 417.4L130.5 414.7M130.5 414.7L155.8 410.3M155.8 410.3L170.4 407.7M170.4 407.7L197.5 402.9M197.5 402.9L215.6 399.7M14.3 446.7L28.2 444.2M28.2 444.2L49.9 440.4M49.9 440.4L65.4 437.6M65.4 437.6L93.3 432.7M93.3 432.7L110 429.8M110 429.8L126.4 426.9M126.4 426.9L144.4 423.7M144.4 423.7L177 418M177 418L206 412.9M206 412.9L217.6 410.8M15.8 455.2L41.8 450.6M41.8 450.6L67.6 446.1M96.5 441L124.1 436.1M124.1 436.1L141 433.1M141 433.1L167.7 428.4M167.7 428.4L184.1 425.6M184.1 425.6L215.9 419.9M215.9 419.9L219.1 419.4M17.2 463.5L39.4 459.6M39.4 459.6L68.2 454.5M68.2 454.5L87.8 451M87.8 451L111.8 446.8M111.8 446.8L127.8 444M127.8 444L156.7 438.9M156.7 438.9L186.6 433.6M186.6 433.6L204.2 430.5M204.2 430.5L220.6 427.6M18.9 473L46.4 468.2M46.4 468.2L75.2 463.1M75.2 463.1L102.1 458.4M102.1 458.4L131.8 453.1M131.8 453.1L147.3 450.4M147.3 450.4L177.1 445.1M177.1 445.1L202.4 440.7M19.8 478.3L35.7 475.5M35.7 475.5L57.5 471.6M57.5 471.6L80.1 467.6M80.1 467.6L98 464.5M98 464.5L128 459.2M147.4 455.8L166.4 452.4M166.4 452.4L188.7 448.5M21.5 487.8L40.5 484.5M40.5 484.5L61.2 480.8M61.2 480.8L92.2 475.4M92.2 475.4L123.1 469.9M123.1 469.9L146.5 465.8M146.5 465.8L170.1 461.6M170.1 461.6L187.5 458.6M187.5 458.6L204.4 455.6M204.4 455.6L218.1 453.2M218.1 453.2L224.9 452M43.7 493.3L68.1 489M68.1 489L91.7 484.9M91.7 484.9L123.4 479.3M150 474.6L175.8 470M175.8 470L208 464.4M208 464.4L226.5 461.1M24.6 505.4L51.4 500.6M51.4 500.6L74.8 496.5M107.3 490.8L137.2 485.5M137.2 485.5L161.7 481.2M161.7 481.2L189.9 476.2M189.9 476.2L217.7 471.3M217.7 471.3L228 469.5M57 508.1L82.1 503.7M82.1 503.7L96.7 501.1M96.7 501.1L124.9 496.2M124.9 496.2L144.1 492.8M144.1 492.8L163.4 489.4M163.4 489.4L185.3 485.5M185.3 485.5L211.6 480.9M211.6 480.9L229.4 477.7M27.5 522.1L54.6 517.3M54.6 517.3L71.5 514.3M71.5 514.3L101.2 509.1M121.6 505.5L145.3 501.3M145.3 501.3L162.2 498.3M162.2 498.3L179.3 495.3M179.3 495.3L194.1 492.7M194.1 492.7L215.2 489M215.2 489L230.9 486.2M29 530.1L46.5 527M68.7 523.1L87.5 519.8M87.5 519.8L108.7 516M108.7 516L127.6 512.7M127.6 512.7L158.9 507.2M158.9 507.2L188.8 501.9M188.8 501.9L217.5 496.9M217.5 496.9L232.3 494.3M30.1 536.4L56.8 531.6M56.8 531.6L75.8 528.3M75.8 528.3L107.3 522.7M107.3 522.7L126.6 519.3M126.6 519.3L145.3 516M145.3 516L159.9 513.5M159.9 513.5L184.6 509.1M184.6 509.1L216.5 503.5M31.6 545.1L58.4 540.3M87.8 535.2L107.4 531.7M107.4 531.7L139.8 526M139.8 526L166.9 521.2M166.9 521.2L188.3 517.4M188.3 517.4L216.4 512.5M216.4 512.5L235 509.2M32.5 550.2L63.1 544.8M63.1 544.8L86.9 540.6M138.3 531.6L160 527.7M160 527.7L190.2 522.4M190.2 522.4L215.1 518M215.1 518L235.9 514.4M34.5 561.5L64.4 556.2M64.4 556.2L91.1 551.5M91.1 551.5L114.5 547.4M114.5 547.4L145.6 541.9M145.6 541.9L175.2 536.7M205.9 531.3L233.2 526.5M233.2 526.5L237.9 525.6M35.5 567.1L65.1 561.9M65.1 561.9L83 558.7M83 558.7L98.6 556M98.6 556L131.1 550.3M131.1 550.3L151.8 546.6M151.8 546.6L167 543.9M231.9 532.5L238.8 531.3M211.8 370.3L216.2 395.3M216.2 395.3L221.1 423.5M221.1 423.5L227.2 457.7M227.2 457.7L234.3 497.9M234.3 497.9L240.4 532.5M205.8 370L211.6 402.5M211.6 402.5L215.2 423.3M215.2 423.3L222 461.6M222 461.6L227.2 491.4M227.2 491.4L233.4 526.1M233.4 526.1L234.7 533.5M189.8 331.8L194.8 359.6M194.8 359.6L198.5 380.6M198.5 380.6L202.4 403.2M202.4 403.2L209 440.5M209 440.5L214.5 471.6M214.5 471.6L218.8 495.8M218.8 495.8L223.5 522.4M223.5 522.4L225.7 535.1M186.5 332.4L193.1 370.2M193.1 370.2L197.7 396.3M197.7 396.3L204.4 434.1M204.4 434.1L211.3 473.1M211.3 473.1L219 516.7M182.1 333.1L189.5 375.2M189.5 375.2L195.8 411.1M195.8 411.1L200.8 439.6M200.8 439.6L207.2 475.6M212 502.8L216.1 526.5M216.1 526.5L217.9 536.5M176.3 334.2L180.1 356.1M180.1 356.1L187.2 395.9M187.2 395.9L195.2 441.3M195.2 441.3L202.3 481.6M209.5 522.6L212.1 537.5M174.9 361L182.5 404.3M182.5 404.3L190.3 448.6M190.3 448.6L195.7 479.3M195.7 479.3L200.9 508.6M165.9 336L172 370.7M172 370.7L175.4 390M175.4 390L182.4 430M182.4 430L186 450.2M191.9 483.5L196.8 511.2M196.8 511.2L201.7 539.3M159.9 337L164.4 362.6M175.7 426.7L180 451.1M180 451.1L186.1 485.7M186.1 485.7L192.8 523.7M192.8 523.7L195.8 540.4M154.6 338L159.9 367.7M159.9 367.7L166.6 405.8M166.6 405.8L173 442.2M178.6 473.8L186.2 517.1M186.2 517.1L189.9 537.9M189.9 537.9L190.5 541.3M148.4 339.1L155.6 380.1M162.5 418.9L166.3 440.5M173.4 481L177 501.3M177 501.3L184.2 542.4M141.9 340.2L148.3 376.3M148.3 376.3L152.9 402.4M152.9 402.4L156.3 421.9M156.3 421.9L160.2 443.7M160.2 443.7L166.9 481.7M166.9 481.7L174 522.3M143.4 384.8L150.7 426.6M150.7 426.6L157.9 467.6M157.9 467.6L164.2 503.1M171.3 543.5L171.5 544.7M131.9 342L135.3 361.2M135.3 361.2L138.8 380.9M138.8 380.9L146 421.6M146 421.6L149.9 444M149.9 444L154.2 468.5M154.2 468.5L158.1 490.5M158.1 490.5L164 524.2M164 524.2L167.8 545.3M124.2 343.3L128 365.1M128 365.1L132.8 392.2M132.8 392.2L136.8 415.2M136.8 415.2L144.8 460.4M148.2 479.6L152.1 501.7M152.1 501.7L158.3 536.8M158.3 536.8L160 546.7M118.8 344.3L126.5 387.8M126.5 387.8L133.6 428.1M133.6 428.1L140.9 469.5M140.9 469.5L144.4 489.4M144.4 489.4L151.7 531.1M151.7 531.1L154.7 547.6M112.6 345.4L119.3 383.3M119.3 383.3L124.1 410.4M129 438.1L134.4 468.9M134.4 468.9L140.9 505.4M140.9 505.4L147.8 544.8M147.8 544.8L148.5 548.7M113.4 376.2L117.8 401.5M117.8 401.5L125.5 445.1M125.5 445.1L132.5 484.7M132.5 484.7L140 527.5M101.4 347.3L107.8 383.1M107.8 383.1L113.6 416.5M113.6 416.5L117.8 439.9M117.8 439.9L124.2 476.3M124.2 476.3L132 520.3M132 520.3L137.3 550.7M95.3 348.4L99.6 373.2M107.2 416.4L111.8 442.4M111.8 442.4L119.8 487.9M119.8 487.9L125.3 518.6M125.3 518.6L131.1 551.8M93.1 375.5L99.7 413M99.7 413L104.3 439M104.3 439L110.7 475.2M110.7 475.2L117.2 511.8M117.2 511.8L123.8 549.4M87.8 373.3L93.5 405.5M93.5 405.5L100.1 442.9M100.1 442.9L107.1 482.5M107.1 482.5L110.9 504.2M110.9 504.2L116.2 534.2M116.2 534.2L119.7 553.8M77.6 351.6L82.6 379.7M82.6 379.7L86.1 399.6M86.1 399.6L90.5 424.7M90.5 424.7L97.6 465.2M102.3 491.6L106.6 515.8M106.6 515.8L110.7 539M110.7 539L113.5 554.9M74.9 352L78.7 373.7M78.7 373.7L83.9 402.9M83.9 402.9L89.9 437.2M101 499.8L108.9 544.5M68.3 353.2L73.3 382M73.3 382L77.2 404.1M77.2 404.1L84.3 444.3M84.3 444.3L89.5 473.6M89.5 473.6L93.9 498.6M93.9 498.6L98.3 523.5M98.3 523.5L103.4 552.3M103.4 552.3L104.1 556.5M62.6 354.2L69.9 395.6M69.9 395.6L73.4 415.4M73.4 415.4L77.3 437.6M84 475.6L87.9 497.8M87.9 497.8L92.1 521.5M97.5 552.3L98.5 557.5M62.3 389.2L66.7 414.2M66.7 414.2L72.7 448.2M72.7 448.2L80.6 493M80.6 493L84.4 515M84.4 515L90.3 548M90.3 548L92.1 558.7M53.7 355.8L58.3 381.9M58.3 381.9L63.8 413.3M63.8 413.3L67.5 434.3M67.5 434.3L72.4 461.8M72.4 461.8L78.9 498.6M78.9 498.6L82.8 520.8M82.8 520.8L88.4 552.7M88.4 552.7L89.6 559.1M48.2 356.7L53.8 388.3M53.8 388.3L59.6 421.7M59.6 421.7L65.3 454.1M71.8 490.5L78.9 531M78.9 531L84 560.1M40.4 358.1L44.7 382M44.7 382L50.8 417M50.8 417L54.6 438.3M54.6 438.3L58.1 458.3M58.1 458.3L62.1 481.1M62.1 481.1L69 520.1M69 520.1L76.3 561.5M36.8 358.7L44.6 403.1M44.6 403.1L50.2 434.9M50.2 434.9L58.1 479.2M58.1 479.2L66.1 524.8M66.1 524.8L70.5 549.6M70.5 549.6L72.7 562.1M30.7 359.8L38.6 404.5M38.6 404.5L43.8 434.4M50.4 471.3L55.5 500.4M62.7 541.5L66.5 563.2M43.3 469.1L47.3 491.9M47.3 491.9L53.4 526.4M53.4 526.4L57 547M57 547L60.1 564.3M19.1 361.9L26.7 404.6M26.7 404.6L34.1 446.6M34.1 446.6L38.7 472.9M51.6 546.2L55 565.2M12.5 363L19.9 405.3M19.9 405.3L25.8 438.5M25.8 438.5L32.9 479.1M38.7 511.8L43.2 537.4M43.2 537.4L48.3 566.4M10.1 388.4L17.7 431.4M17.7 431.4L21.9 455.3M21.9 455.3L26.5 481.2M26.5 481.2L31.6 510M38.1 547.1L41.7 567.6M8.2 405.4L13.8 437.2M13.8 437.2L20.5 475.1M20.5 475.1L24.7 499M24.7 499L31.8 539M31.8 539L36.9 568.4" stroke="#cbcaca" stroke-width="2.4"/><path d="M-0.3 364.4L18.6 361.1M18.6 361.1L37.2 357.8M37.2 357.8L61.7 353.5M83.6 349.6L103.2 346.2M103.2 346.2L132.4 341M132.4 341L151.1 337.7M151.1 337.7L165.9 335.1M165.9 335.1L186.9 331.4M186.9 331.4L203.1 328.5M1.4 373.8L19 370.6M43.5 366.3L63.3 362.8M63.3 362.8L85 359M85 359L105 355.5M105 355.5L134.1 350.4M134.1 350.4L161.5 345.5M161.5 345.5L186.7 341.1M186.7 341.1L204.7 337.9M2.5 380L24.6 376.1M24.6 376.1L39.3 373.5M39.3 373.5L54.5 370.9M54.5 370.9L71.7 367.8M71.7 367.8L96.3 363.5M96.3 363.5L119.6 359.4M119.6 359.4L146.4 354.7M146.4 354.7L164.2 351.5M164.2 351.5L180.8 348.6M198.6 345.5L205.9 344.2M4.4 390.7L30.9 386.1M30.9 386.1L62.1 380.6M106 372.8L135.9 367.6M135.9 367.6L154.1 364.4M154.1 364.4L174 360.8M174 360.8L190.7 357.9M190.7 357.9L207.7 354.9M5.8 398.8L38.5 393.1M38.5 393.1L52.9 390.5M52.9 390.5L79 385.9M103.2 381.7L126 377.7M126 377.7L148 373.8M148 373.8L164 370.9M164 370.9L180.1 368.1M180.1 368.1L209.2 363M6.9 404.8L27.3 401.2M27.3 401.2L50.7 397.1M50.7 397.1L66.2 394.3M66.2 394.3L96.6 389M120.8 384.7L137.3 381.8M137.3 381.8L168.2 376.3M168.2 376.3L186.4 373.1M186.4 373.1L200.8 370.6M200.8 370.6L210.2 368.9M8.8 415.5L23.5 412.9M23.5 412.9L45.9 409M45.9 409L74 404M74 404L102.9 398.9M102.9 398.9L118 396.3M118 396.3L133.6 393.5M133.6 393.5L162.6 388.4M10 422.5L31 418.8M31 418.8L47.9 415.8M47.9 415.8L79.8 410.1M79.8 410.1L109.8 404.9M132.8 400.8L148.4 398.1M148.4 398.1L164.4 395.2M188.5 391L211.3 387M211.3 387L213.3 386.6M11.2 429.2L32.7 425.4M32.7 425.4L48.9 422.6M48.9 422.6L79.5 417.2M110.4 411.7L142.3 406.1M142.3 406.1L171.3 401M171.3 401L198.4 396.2M198.4 396.2L214.5 393.4M12.3 435.6L33.6 431.8M33.6 431.8L53 428.4M53 428.4L68.4 425.7M68.4 425.7L86.7 422.5M86.7 422.5L115.6 417.4M115.6 417.4L130.5 414.7M130.5 414.7L155.8 410.3M155.8 410.3L170.4 407.7M170.4 407.7L197.5 402.9M197.5 402.9L215.6 399.7M14.3 446.7L28.2 444.2M28.2 444.2L49.9 440.4M49.9 440.4L65.4 437.6M65.4 437.6L93.3 432.7M93.3 432.7L110 429.8M110 429.8L126.4 426.9M126.4 426.9L144.4 423.7M144.4 423.7L177 418M177 418L206 412.9M206 412.9L217.6 410.8M15.8 455.2L41.8 450.6M41.8 450.6L67.6 446.1M96.5 441L124.1 436.1M124.1 436.1L141 433.1M141 433.1L167.7 428.4M167.7 428.4L184.1 425.6M184.1 425.6L215.9 419.9M215.9 419.9L219.1 419.4M17.2 463.5L39.4 459.6M39.4 459.6L68.2 454.5M68.2 454.5L87.8 451M87.8 451L111.8 446.8M111.8 446.8L127.8 444M127.8 444L156.7 438.9M156.7 438.9L186.6 433.6M186.6 433.6L204.2 430.5M204.2 430.5L220.6 427.6M18.9 473L46.4 468.2M46.4 468.2L75.2 463.1M75.2 463.1L102.1 458.4M102.1 458.4L131.8 453.1M131.8 453.1L147.3 450.4M147.3 450.4L177.1 445.1M177.1 445.1L202.4 440.7M19.8 478.3L35.7 475.5M35.7 475.5L57.5 471.6M57.5 471.6L80.1 467.6M80.1 467.6L98 464.5M98 464.5L128 459.2M147.4 455.8L166.4 452.4M166.4 452.4L188.7 448.5M21.5 487.8L40.5 484.5M40.5 484.5L61.2 480.8M61.2 480.8L92.2 475.4M92.2 475.4L123.1 469.9M123.1 469.9L146.5 465.8M146.5 465.8L170.1 461.6M170.1 461.6L187.5 458.6M187.5 458.6L204.4 455.6M204.4 455.6L218.1 453.2M218.1 453.2L224.9 452M43.7 493.3L68.1 489M68.1 489L91.7 484.9M91.7 484.9L123.4 479.3M150 474.6L175.8 470M175.8 470L208 464.4M208 464.4L226.5 461.1M24.6 505.4L51.4 500.6M51.4 500.6L74.8 496.5M107.3 490.8L137.2 485.5M137.2 485.5L161.7 481.2M161.7 481.2L189.9 476.2M189.9 476.2L217.7 471.3M217.7 471.3L228 469.5M57 508.1L82.1 503.7M82.1 503.7L96.7 501.1M96.7 501.1L124.9 496.2M124.9 496.2L144.1 492.8M144.1 492.8L163.4 489.4M163.4 489.4L185.3 485.5M185.3 485.5L211.6 480.9M211.6 480.9L229.4 477.7M27.5 522.1L54.6 517.3M54.6 517.3L71.5 514.3M71.5 514.3L101.2 509.1M121.6 505.5L145.3 501.3M145.3 501.3L162.2 498.3M162.2 498.3L179.3 495.3M179.3 495.3L194.1 492.7M194.1 492.7L215.2 489M215.2 489L230.9 486.2M29 530.1L46.5 527M68.7 523.1L87.5 519.8M87.5 519.8L108.7 516M108.7 516L127.6 512.7M127.6 512.7L158.9 507.2M158.9 507.2L188.8 501.9M188.8 501.9L217.5 496.9M217.5 496.9L232.3 494.3M30.1 536.4L56.8 531.6M56.8 531.6L75.8 528.3M75.8 528.3L107.3 522.7M107.3 522.7L126.6 519.3M126.6 519.3L145.3 516M145.3 516L159.9 513.5M159.9 513.5L184.6 509.1M184.6 509.1L216.5 503.5M31.6 545.1L58.4 540.3M87.8 535.2L107.4 531.7M107.4 531.7L139.8 526M139.8 526L166.9 521.2M166.9 521.2L188.3 517.4M188.3 517.4L216.4 512.5M216.4 512.5L235 509.2M32.5 550.2L63.1 544.8M63.1 544.8L86.9 540.6M138.3 531.6L160 527.7M160 527.7L190.2 522.4M190.2 522.4L215.1 518M215.1 518L235.9 514.4M34.5 561.5L64.4 556.2M64.4 556.2L91.1 551.5M91.1 551.5L114.5 547.4M114.5 547.4L145.6 541.9M145.6 541.9L175.2 536.7M205.9 531.3L233.2 526.5M233.2 526.5L237.9 525.6M35.5 567.1L65.1 561.9M65.1 561.9L83 558.7M83 558.7L98.6 556M98.6 556L131.1 550.3M131.1 550.3L151.8 546.6M151.8 546.6L167 543.9M231.9 532.5L238.8 531.3M211.8 370.3L216.2 395.3M216.2 395.3L221.1 423.5M221.1 423.5L227.2 457.7M227.2 457.7L234.3 497.9M234.3 497.9L240.4 532.5M205.8 370L211.6 402.5M211.6 402.5L215.2 423.3M215.2 423.3L222 461.6M222 461.6L227.2 491.4M227.2 491.4L233.4 526.1M233.4 526.1L234.7 533.5M189.8 331.8L194.8 359.6M194.8 359.6L198.5 380.6M198.5 380.6L202.4 403.2M202.4 403.2L209 440.5M209 440.5L214.5 471.6M214.5 471.6L218.8 495.8M218.8 495.8L223.5 522.4M223.5 522.4L225.7 535.1M186.5 332.4L193.1 370.2M193.1 370.2L197.7 396.3M197.7 396.3L204.4 434.1M204.4 434.1L211.3 473.1M211.3 473.1L219 516.7M182.1 333.1L189.5 375.2M189.5 375.2L195.8 411.1M195.8 411.1L200.8 439.6M200.8 439.6L207.2 475.6M212 502.8L216.1 526.5M216.1 526.5L217.9 536.5M176.3 334.2L180.1 356.1M180.1 356.1L187.2 395.9M187.2 395.9L195.2 441.3M195.2 441.3L202.3 481.6M209.5 522.6L212.1 537.5M174.9 361L182.5 404.3M182.5 404.3L190.3 448.6M190.3 448.6L195.7 479.3M195.7 479.3L200.9 508.6M165.9 336L172 370.7M172 370.7L175.4 390M175.4 390L182.4 430M182.4 430L186 450.2M191.9 483.5L196.8 511.2M196.8 511.2L201.7 539.3M159.9 337L164.4 362.6M175.7 426.7L180 451.1M180 451.1L186.1 485.7M186.1 485.7L192.8 523.7M192.8 523.7L195.8 540.4M154.6 338L159.9 367.7M159.9 367.7L166.6 405.8M166.6 405.8L173 442.2M178.6 473.8L186.2 517.1M186.2 517.1L189.9 537.9M189.9 537.9L190.5 541.3M148.4 339.1L155.6 380.1M162.5 418.9L166.3 440.5M173.4 481L177 501.3M177 501.3L184.2 542.4M141.9 340.2L148.3 376.3M148.3 376.3L152.9 402.4M152.9 402.4L156.3 421.9M156.3 421.9L160.2 443.7M160.2 443.7L166.9 481.7M166.9 481.7L174 522.3M143.4 384.8L150.7 426.6M150.7 426.6L157.9 467.6M157.9 467.6L164.2 503.1M171.3 543.5L171.5 544.7M131.9 342L135.3 361.2M135.3 361.2L138.8 380.9M138.8 380.9L146 421.6M146 421.6L149.9 444M149.9 444L154.2 468.5M154.2 468.5L158.1 490.5M158.1 490.5L164 524.2M164 524.2L167.8 545.3M124.2 343.3L128 365.1M128 365.1L132.8 392.2M132.8 392.2L136.8 415.2M136.8 415.2L144.8 460.4M148.2 479.6L152.1 501.7M152.1 501.7L158.3 536.8M158.3 536.8L160 546.7M118.8 344.3L126.5 387.8M126.5 387.8L133.6 428.1M133.6 428.1L140.9 469.5M140.9 469.5L144.4 489.4M144.4 489.4L151.7 531.1M151.7 531.1L154.7 547.6M112.6 345.4L119.3 383.3M119.3 383.3L124.1 410.4M129 438.1L134.4 468.9M134.4 468.9L140.9 505.4M140.9 505.4L147.8 544.8M147.8 544.8L148.5 548.7M113.4 376.2L117.8 401.5M117.8 401.5L125.5 445.1M125.5 445.1L132.5 484.7M132.5 484.7L140 527.5M101.4 347.3L107.8 383.1M107.8 383.1L113.6 416.5M113.6 416.5L117.8 439.9M117.8 439.9L124.2 476.3M124.2 476.3L132 520.3M132 520.3L137.3 550.7M95.3 348.4L99.6 373.2M107.2 416.4L111.8 442.4M111.8 442.4L119.8 487.9M119.8 487.9L125.3 518.6M125.3 518.6L131.1 551.8M93.1 375.5L99.7 413M99.7 413L104.3 439M104.3 439L110.7 475.2M110.7 475.2L117.2 511.8M117.2 511.8L123.8 549.4M87.8 373.3L93.5 405.5M93.5 405.5L100.1 442.9M100.1 442.9L107.1 482.5M107.1 482.5L110.9 504.2M110.9 504.2L116.2 534.2M116.2 534.2L119.7 553.8M77.6 351.6L82.6 379.7M82.6 379.7L86.1 399.6M86.1 399.6L90.5 424.7M90.5 424.7L97.6 465.2M102.3 491.6L106.6 515.8M106.6 515.8L110.7 539M110.7 539L113.5 554.9M74.9 352L78.7 373.7M78.7 373.7L83.9 402.9M83.9 402.9L89.9 437.2M101 499.8L108.9 544.5M68.3 353.2L73.3 382M73.3 382L77.2 404.1M77.2 404.1L84.3 444.3M84.3 444.3L89.5 473.6M89.5 473.6L93.9 498.6M93.9 498.6L98.3 523.5M98.3 523.5L103.4 552.3M103.4 552.3L104.1 556.5M62.6 354.2L69.9 395.6M69.9 395.6L73.4 415.4M73.4 415.4L77.3 437.6M84 475.6L87.9 497.8M87.9 497.8L92.1 521.5M97.5 552.3L98.5 557.5M62.3 389.2L66.7 414.2M66.7 414.2L72.7 448.2M72.7 448.2L80.6 493M80.6 493L84.4 515M84.4 515L90.3 548M90.3 548L92.1 558.7M53.7 355.8L58.3 381.9M58.3 381.9L63.8 413.3M63.8 413.3L67.5 434.3M67.5 434.3L72.4 461.8M72.4 461.8L78.9 498.6M78.9 498.6L82.8 520.8M82.8 520.8L88.4 552.7M88.4 552.7L89.6 559.1M48.2 356.7L53.8 388.3M53.8 388.3L59.6 421.7M59.6 421.7L65.3 454.1M71.8 490.5L78.9 531M78.9 531L84 560.1M40.4 358.1L44.7 382M44.7 382L50.8 417M50.8 417L54.6 438.3M54.6 438.3L58.1 458.3M58.1 458.3L62.1 481.1M62.1 481.1L69 520.1M69 520.1L76.3 561.5M36.8 358.7L44.6 403.1M44.6 403.1L50.2 434.9M50.2 434.9L58.1 479.2M58.1 479.2L66.1 524.8M66.1 524.8L70.5 549.6M70.5 549.6L72.7 562.1M30.7 359.8L38.6 404.5M38.6 404.5L43.8 434.4M50.4 471.3L55.5 500.4M62.7 541.5L66.5 563.2M43.3 469.1L47.3 491.9M47.3 491.9L53.4 526.4M53.4 526.4L57 547M57 547L60.1 564.3M19.1 361.9L26.7 404.6M26.7 404.6L34.1 446.6M34.1 446.6L38.7 472.9M51.6 546.2L55 565.2M12.5 363L19.9 405.3M19.9 405.3L25.8 438.5M25.8 438.5L32.9 479.1M38.7 511.8L43.2 537.4M43.2 537.4L48.3 566.4M10.1 388.4L17.7 431.4M17.7 431.4L21.9 455.3M21.9 455.3L26.5 481.2M26.5 481.2L31.6 510M38.1 547.1L41.7 567.6M8.2 405.4L13.8 437.2M13.8 437.2L20.5 475.1M20.5 475.1L24.7 499M24.7 499L31.8 539M31.8 539L36.9 568.4" stroke="#fff" stroke-width="1.4040000000000001"/></g>
<clipPath id="c12"><path d="M24 478L170 458 200 452 150 493 24 493Z"/></clipPath>
<g clip-path="url(#c12)" fill="none"><path d="M2.6 395.6L62.2 385.1M62.2 385.1L95.9 379.2M95.9 379.2L134.1 372.4M186.8 363.1L188.5 362.8M3.6 401.2L33.9 395.9M74.2 388.8L120.4 380.6M120.4 380.6L166.3 372.5M166.3 372.5L189.5 368.4M5.1 409.6L31.1 405M31.1 405L62.3 399.5M62.3 399.5L121.9 389M121.9 389L177 379.3M177 379.3L190.9 376.8M6.6 417.9L59.2 408.6M59.2 408.6L93.7 402.6M93.7 402.6L140.5 394.3M140.5 394.3L192.4 385.2M7.6 424L52.1 416.2M87.2 410L112.7 405.5M162.9 396.6L193.5 391.2M35.9 431.7L94.5 421.3M94.5 421.3L125.2 415.9M125.2 415.9L169.2 408.1M169.2 408.1L195.6 403.5M10.4 439.7L38.8 434.7M38.8 434.7L67.5 429.6M67.5 429.6L117.6 420.8M117.6 420.8L171.2 411.3M171.2 411.3L196.2 406.9M57.5 441.8L88.4 436.3M88.4 436.3L127.5 429.4M127.5 429.4L161.1 423.5M13.1 455.1L63.7 446.1M63.7 446.1L117.3 436.7M117.3 436.7L146 431.6M191.5 423.6L199 422.3M14.6 463.2L48.5 457.2M48.5 457.2L89 450.1M140.2 441.1L191.4 432M191.4 432L200.4 430.4M16 471.6L73.5 461.5M73.5 461.5L110 455M110 455L144.7 448.9M144.7 448.9L178.1 443M178.1 443L201.9 438.8M17.8 481.7L54.2 475.3M152.4 458L179.5 453.2M179.5 453.2L203.7 448.9M51.6 483.8L95.1 476.1M95.1 476.1L133.4 469.4M133.4 469.4L177.6 461.6M20.5 497L54.9 491M54.9 491L88.2 485.1M88.2 485.1L130.6 477.6M130.6 477.6L183.4 468.3M183.4 468.3L206.4 464.3M22.2 506.8L51.4 501.7M51.4 501.7L99.4 493.2M99.4 493.2L126.2 488.5M183.9 478.3L208.1 474.1M23.1 511.9L75.2 502.7M55.1 516.3L83 511.4M83 511.4L127.3 503.6M127.3 503.6L158.7 498M158.7 498L210.7 488.9M25.7 526.4L59.7 520.4M59.7 520.4L89.3 515.2M89.3 515.2L141.1 506.1M141.1 506.1L198.6 495.9M198.6 495.9L211.5 493.7M27.2 534.8L78.1 525.8M78.1 525.8L108.1 520.6M167.6 510.1L213 502.1M28.3 541L70.4 533.5M70.4 533.5L101.1 528.1M101.1 528.1L137.9 521.6M137.9 521.6L189.8 512.5M189.8 512.5L214.1 508.2M76.1 544.1L128.7 534.8M128.7 534.8L186.1 524.7M186.1 524.7L216.1 519.4M31.4 558.8L69.8 552.1M69.8 552.1L107.8 545.4M107.8 545.4L137.1 540.2M137.1 540.2L194.9 530M194.9 530L217.3 526.1M32.9 567.4L91 557.2M91 557.2L151.7 546.5M151.7 546.5L204 537.3M204 537.3L218.8 534.7M34.6 577.1L64.8 571.8M64.8 571.8L102.2 565.2M102.2 565.2L139.9 558.6M139.9 558.6L195.4 548.8M195.4 548.8L220.5 544.3M194.1 399.8L201.5 442.1M201.5 442.1L207 473.3M207 473.3L214.1 513.2M214.1 513.2L220.4 549.2M180.1 364.7L184 386.4M184 386.4L187.4 406.2M191.9 431.3L195.5 452.1M195.5 452.1L199.8 476.5M199.8 476.5L205.1 506.3M205.1 506.3L212.9 550.5M165.8 367.2L171.4 398.8M171.4 398.8L178.2 437.4M178.2 437.4L185.7 479.8M185.7 479.8L189.5 501.7M189.5 501.7L196.8 542.9M196.8 542.9L198.6 553M154.8 369.1L159.2 393.7M159.2 393.7L164.2 422.5M178.5 503.6L184.7 538.4M184.7 538.4L187.6 555M147 370.5L154.2 411.5M154.2 411.5L159.3 440M159.3 440L166.1 479M166.1 479L170.5 503.9M170.5 503.9L178.5 549.4M178.5 549.4L179.8 556.4M136.3 372.4L141 399.5M141 399.5L147.8 438.1M147.8 438.1L153.8 471.8M160.3 508.6L168.1 553.2M168.1 553.2L169 558.3M123.7 374.6L129.6 408.4M129.6 408.4L137.1 450.6M137.1 450.6L144.8 494.3M144.8 494.3L148.3 514M148.3 514L155.8 557M155.8 557L156.5 560.5M113.1 376.5L117.1 399.4M117.1 399.4L124.2 439.9M124.2 439.9L130.4 475M130.4 475L135.1 501.4M135.1 501.4L140.9 534.2M144.7 555.7L145.8 562.3M103.2 378.2L107.7 404.1M107.7 404.1L111.9 427.9M111.9 427.9L119.5 471M119.5 471L125.6 505.7M125.6 505.7L132.5 544.8M132.5 544.8L135.9 564.1M87.7 381L91.3 401.4M96.7 432.3L100.4 453.2M107 490.3L112.5 521.7M112.5 521.7L120.5 566.8M79.5 382.4L83.8 406.8M83.8 406.8L89.1 436.8M89.1 436.8L93.9 463.9M98.3 488.8L102.5 513M102.5 513L108.3 545.5M108.3 545.5L112.3 568.3M65.7 384.9L73.5 429.1M73.5 429.1L77.8 453.5M77.8 453.5L81.8 476.4M81.8 476.4L85.5 497.4M85.5 497.4L93.5 542.2M93.5 542.2L98.5 570.7M54.9 386.8L60.1 416.3M60.1 416.3L67.6 458.4M67.6 458.4L70.9 477.6M70.9 477.6L77.7 516.1M77.7 516.1L84.1 552M84.1 552L87.7 572.6M46.1 388.3L52.6 425M60.4 469.4L65.5 498.2M65.5 498.2L72.6 538.4M72.6 538.4L78.9 574.1M33.7 390.5L39 420.3M39 420.3L42.9 442.4M50 482.8L54.9 510.5M54.9 510.5L60.6 542.8M60.6 542.8L66.5 576.3M21.2 392.7L27.6 428.8M27.6 428.8L32.5 456.7M32.5 456.7L38.7 492M38.7 492L43.3 518.1M43.3 518.1L48.5 547.5M48.5 547.5L54 578.5M14.8 393.8L22.1 434.8M44.5 562.1L47.6 579.7" stroke="#cbcaca" stroke-width="2.6"/><path d="M2.6 395.6L62.2 385.1M62.2 385.1L95.9 379.2M95.9 379.2L134.1 372.4M186.8 363.1L188.5 362.8M3.6 401.2L33.9 395.9M74.2 388.8L120.4 380.6M120.4 380.6L166.3 372.5M166.3 372.5L189.5 368.4M5.1 409.6L31.1 405M31.1 405L62.3 399.5M62.3 399.5L121.9 389M121.9 389L177 379.3M177 379.3L190.9 376.8M6.6 417.9L59.2 408.6M59.2 408.6L93.7 402.6M93.7 402.6L140.5 394.3M140.5 394.3L192.4 385.2M7.6 424L52.1 416.2M87.2 410L112.7 405.5M162.9 396.6L193.5 391.2M35.9 431.7L94.5 421.3M94.5 421.3L125.2 415.9M125.2 415.9L169.2 408.1M169.2 408.1L195.6 403.5M10.4 439.7L38.8 434.7M38.8 434.7L67.5 429.6M67.5 429.6L117.6 420.8M117.6 420.8L171.2 411.3M171.2 411.3L196.2 406.9M57.5 441.8L88.4 436.3M88.4 436.3L127.5 429.4M127.5 429.4L161.1 423.5M13.1 455.1L63.7 446.1M63.7 446.1L117.3 436.7M117.3 436.7L146 431.6M191.5 423.6L199 422.3M14.6 463.2L48.5 457.2M48.5 457.2L89 450.1M140.2 441.1L191.4 432M191.4 432L200.4 430.4M16 471.6L73.5 461.5M73.5 461.5L110 455M110 455L144.7 448.9M144.7 448.9L178.1 443M178.1 443L201.9 438.8M17.8 481.7L54.2 475.3M152.4 458L179.5 453.2M179.5 453.2L203.7 448.9M51.6 483.8L95.1 476.1M95.1 476.1L133.4 469.4M133.4 469.4L177.6 461.6M20.5 497L54.9 491M54.9 491L88.2 485.1M88.2 485.1L130.6 477.6M130.6 477.6L183.4 468.3M183.4 468.3L206.4 464.3M22.2 506.8L51.4 501.7M51.4 501.7L99.4 493.2M99.4 493.2L126.2 488.5M183.9 478.3L208.1 474.1M23.1 511.9L75.2 502.7M55.1 516.3L83 511.4M83 511.4L127.3 503.6M127.3 503.6L158.7 498M158.7 498L210.7 488.9M25.7 526.4L59.7 520.4M59.7 520.4L89.3 515.2M89.3 515.2L141.1 506.1M141.1 506.1L198.6 495.9M198.6 495.9L211.5 493.7M27.2 534.8L78.1 525.8M78.1 525.8L108.1 520.6M167.6 510.1L213 502.1M28.3 541L70.4 533.5M70.4 533.5L101.1 528.1M101.1 528.1L137.9 521.6M137.9 521.6L189.8 512.5M189.8 512.5L214.1 508.2M76.1 544.1L128.7 534.8M128.7 534.8L186.1 524.7M186.1 524.7L216.1 519.4M31.4 558.8L69.8 552.1M69.8 552.1L107.8 545.4M107.8 545.4L137.1 540.2M137.1 540.2L194.9 530M194.9 530L217.3 526.1M32.9 567.4L91 557.2M91 557.2L151.7 546.5M151.7 546.5L204 537.3M204 537.3L218.8 534.7M34.6 577.1L64.8 571.8M64.8 571.8L102.2 565.2M102.2 565.2L139.9 558.6M139.9 558.6L195.4 548.8M195.4 548.8L220.5 544.3M194.1 399.8L201.5 442.1M201.5 442.1L207 473.3M207 473.3L214.1 513.2M214.1 513.2L220.4 549.2M180.1 364.7L184 386.4M184 386.4L187.4 406.2M191.9 431.3L195.5 452.1M195.5 452.1L199.8 476.5M199.8 476.5L205.1 506.3M205.1 506.3L212.9 550.5M165.8 367.2L171.4 398.8M171.4 398.8L178.2 437.4M178.2 437.4L185.7 479.8M185.7 479.8L189.5 501.7M189.5 501.7L196.8 542.9M196.8 542.9L198.6 553M154.8 369.1L159.2 393.7M159.2 393.7L164.2 422.5M178.5 503.6L184.7 538.4M184.7 538.4L187.6 555M147 370.5L154.2 411.5M154.2 411.5L159.3 440M159.3 440L166.1 479M166.1 479L170.5 503.9M170.5 503.9L178.5 549.4M178.5 549.4L179.8 556.4M136.3 372.4L141 399.5M141 399.5L147.8 438.1M147.8 438.1L153.8 471.8M160.3 508.6L168.1 553.2M168.1 553.2L169 558.3M123.7 374.6L129.6 408.4M129.6 408.4L137.1 450.6M137.1 450.6L144.8 494.3M144.8 494.3L148.3 514M148.3 514L155.8 557M155.8 557L156.5 560.5M113.1 376.5L117.1 399.4M117.1 399.4L124.2 439.9M124.2 439.9L130.4 475M130.4 475L135.1 501.4M135.1 501.4L140.9 534.2M144.7 555.7L145.8 562.3M103.2 378.2L107.7 404.1M107.7 404.1L111.9 427.9M111.9 427.9L119.5 471M119.5 471L125.6 505.7M125.6 505.7L132.5 544.8M132.5 544.8L135.9 564.1M87.7 381L91.3 401.4M96.7 432.3L100.4 453.2M107 490.3L112.5 521.7M112.5 521.7L120.5 566.8M79.5 382.4L83.8 406.8M83.8 406.8L89.1 436.8M89.1 436.8L93.9 463.9M98.3 488.8L102.5 513M102.5 513L108.3 545.5M108.3 545.5L112.3 568.3M65.7 384.9L73.5 429.1M73.5 429.1L77.8 453.5M77.8 453.5L81.8 476.4M81.8 476.4L85.5 497.4M85.5 497.4L93.5 542.2M93.5 542.2L98.5 570.7M54.9 386.8L60.1 416.3M60.1 416.3L67.6 458.4M67.6 458.4L70.9 477.6M70.9 477.6L77.7 516.1M77.7 516.1L84.1 552M84.1 552L87.7 572.6M46.1 388.3L52.6 425M60.4 469.4L65.5 498.2M65.5 498.2L72.6 538.4M72.6 538.4L78.9 574.1M33.7 390.5L39 420.3M39 420.3L42.9 442.4M50 482.8L54.9 510.5M54.9 510.5L60.6 542.8M60.6 542.8L66.5 576.3M21.2 392.7L27.6 428.8M27.6 428.8L32.5 456.7M32.5 456.7L38.7 492M38.7 492L43.3 518.1M43.3 518.1L48.5 547.5M48.5 547.5L54 578.5M14.8 393.8L22.1 434.8M44.5 562.1L47.6 579.7" stroke="#fff" stroke-width="1.566"/></g>
<clipPath id="c13"><path d="M250 450L290 425 335 422 335 430 280 480 240 493 215 493Z"/></clipPath>
<g clip-path="url(#c13)" fill="none"><path d="M172.4 445.9L215.7 412M258.4 378.7L288.6 355.1M175.8 450.3L216.8 418.2M216.8 418.2L237.9 401.8M237.9 401.8L276.2 371.8M178 453.1L197.2 438.1M232.3 410.6L255.1 392.8M255.1 392.8L289.7 365.8M289.7 365.8L294.2 362.3M183.9 460.6L212.7 438.1M212.7 438.1L237.4 418.8M237.4 418.8L282 384M282 384L300.1 369.9M225.3 435.5L257.7 410.2M257.7 410.2L277.2 394.9M277.2 394.9L303.6 374.3M192.8 472L227.1 445.2M227.1 445.2L256.1 422.5M256.1 422.5L297.1 390.5M232.1 446.8L271.7 415.8M303.7 390.8L311.6 384.6M200.5 481.9L238.1 452.5M238.1 452.5L281.8 418.3M281.8 418.3L316.7 391.1M204.1 486.5L229.7 466.4M229.7 466.4L269 435.7M269 435.7L309.1 404.4M309.1 404.4L320.3 395.7M208.7 492.3L243.2 465.3M243.2 465.3L284.3 433.3M284.3 433.3L310.1 413.1M310.1 413.1L324.8 401.6M213.3 498.2L251.8 468.1M251.8 468.1L294.1 435.1M294.1 435.1L323.8 411.8M323.8 411.8L329.4 407.4M217.1 503.1L238.7 486.3M238.7 486.3L268.9 462.7M268.9 462.7L294.2 442.9M329.8 415.1L333.3 412.4M221.7 509L247.6 488.8M247.6 488.8L290.2 455.5M290.2 455.5L334.9 420.6M334.9 420.6L337.9 418.3M226.1 514.7L267.3 482.5M267.3 482.5L310.7 448.6M310.7 448.6L332.5 431.6M332.5 431.6L342.3 423.9M230.7 520.6L263.5 495M263.5 495L285.6 477.8M285.6 477.8L314 455.5M233.1 523.7L274 491.7M274 491.7L293.5 476.5M293.5 476.5L324.4 452.4M324.4 452.4L349.3 432.9M238.5 530.5L260.7 513.2M260.7 513.2L282.5 496.2M282.5 496.2L314.2 471.4M314.2 471.4L337.1 453.5M337.1 453.5L354.7 439.8M243.9 537.4L268.3 518.4M268.3 518.4L303 491.3M303 491.3L341.7 461M341.7 461L360.1 446.7M246.4 540.7L288.9 507.5M288.9 507.5L325.3 479M325.3 479L350 459.7M350 459.7L362.6 449.9M251.7 547.4L288.2 518.9M288.2 518.9L317.4 496.1M317.4 496.1L339.6 478.7M339.6 478.7L367.9 456.7M256.6 553.7L295.1 523.6M295.1 523.6L318 505.8M318 505.8L346.2 483.7M262 560.6L290.7 538.2M341.5 498.5L367.5 478.1M367.5 478.1L378.2 469.8M288.2 353.6L312.9 385.2M312.9 385.2L331.5 409.1M331.5 409.1L352 435.3M352 435.3L371.6 460.4M371.6 460.4L379 469.8M280.1 360L290.8 373.7M290.8 373.7L304.5 391.2M304.5 391.2L316.8 407M316.8 407L337.3 433.2M337.3 433.2L361.7 464.4M361.7 464.4L370.9 476.1M274.2 364.6L291.1 386.2M291.1 386.2L306.3 405.7M306.3 405.7L317.1 419.5M317.1 419.5L341 450.1M363.8 479.3L365 480.8M265.2 371.6L289.6 402.8M289.6 402.8L313.3 433.1M313.3 433.1L328.7 452.8M328.7 452.8L345.3 474M345.3 474L356 487.8M255.9 378.8L277.6 406.6M277.6 406.6L290.4 422.9M290.4 422.9L310.8 449M310.8 449L336.1 481.4M336.1 481.4L346.7 495M247.2 385.7L265.9 409.7M265.9 409.7L289.8 440.4M289.8 440.4L302.5 456.6M302.5 456.6L315.3 473M315.3 473L337.8 501.7M337.8 501.7L337.9 501.9M259.1 414.8L270.6 429.5M270.6 429.5L284.7 447.5M284.7 447.5L298.8 465.6M313 483.8L330.7 506.4M330.7 506.4L331.2 507.1M232.8 396.9L255.8 426.3M255.8 426.3L273.8 449.4M273.8 449.4L293.4 474.4M320.5 509.1L323.6 513.1M226.4 401.9L250.9 433.3M250.9 433.3L263.8 449.7M263.8 449.7L279.2 469.5M279.2 469.5L300.2 496.4M313.3 513.1L317.2 518.1M239.4 432.7L257.5 455.8M257.5 455.8L269.7 471.3M269.7 471.3L290.9 498.5M290.9 498.5L304 515.2M304 515.2L310.4 523.4M210.5 414.3L221.2 427.9M221.2 427.9L237.7 449.1M237.7 449.1L249.6 464.3M249.6 464.3L274.9 496.7M274.9 496.7L289.4 515.3M289.4 515.3L301.3 530.5M216.9 435.9L235.6 459.8M259.8 490.8L277.8 513.9M277.8 513.9L291.3 531.1M291.3 531.1L294.8 535.6M195.2 426.3L217.9 455.3M217.9 455.3L230.5 471.5M230.5 471.5L243 487.5M243 487.5L264 514.3M187.3 432.4L199.6 448.1M199.6 448.1L211 462.7M211 462.7L232.3 490M232.3 490L253.2 516.7M253.2 516.7L274.3 543.8M274.3 543.8L278.1 548.6M184 435L205.4 462.4M205.4 462.4L225.4 488M225.4 488L248.9 518.1M248.9 518.1L261.2 533.9M176.9 440.6L200.5 470.7M200.5 470.7L215.8 490.3M215.8 490.3L238 518.8M238 518.8L257.3 543.5M257.3 543.5L267.7 556.8" stroke="#cbcaca" stroke-width="2.6"/><path d="M172.4 445.9L215.7 412M258.4 378.7L288.6 355.1M175.8 450.3L216.8 418.2M216.8 418.2L237.9 401.8M237.9 401.8L276.2 371.8M178 453.1L197.2 438.1M232.3 410.6L255.1 392.8M255.1 392.8L289.7 365.8M289.7 365.8L294.2 362.3M183.9 460.6L212.7 438.1M212.7 438.1L237.4 418.8M237.4 418.8L282 384M282 384L300.1 369.9M225.3 435.5L257.7 410.2M257.7 410.2L277.2 394.9M277.2 394.9L303.6 374.3M192.8 472L227.1 445.2M227.1 445.2L256.1 422.5M256.1 422.5L297.1 390.5M232.1 446.8L271.7 415.8M303.7 390.8L311.6 384.6M200.5 481.9L238.1 452.5M238.1 452.5L281.8 418.3M281.8 418.3L316.7 391.1M204.1 486.5L229.7 466.4M229.7 466.4L269 435.7M269 435.7L309.1 404.4M309.1 404.4L320.3 395.7M208.7 492.3L243.2 465.3M243.2 465.3L284.3 433.3M284.3 433.3L310.1 413.1M310.1 413.1L324.8 401.6M213.3 498.2L251.8 468.1M251.8 468.1L294.1 435.1M294.1 435.1L323.8 411.8M323.8 411.8L329.4 407.4M217.1 503.1L238.7 486.3M238.7 486.3L268.9 462.7M268.9 462.7L294.2 442.9M329.8 415.1L333.3 412.4M221.7 509L247.6 488.8M247.6 488.8L290.2 455.5M290.2 455.5L334.9 420.6M334.9 420.6L337.9 418.3M226.1 514.7L267.3 482.5M267.3 482.5L310.7 448.6M310.7 448.6L332.5 431.6M332.5 431.6L342.3 423.9M230.7 520.6L263.5 495M263.5 495L285.6 477.8M285.6 477.8L314 455.5M233.1 523.7L274 491.7M274 491.7L293.5 476.5M293.5 476.5L324.4 452.4M324.4 452.4L349.3 432.9M238.5 530.5L260.7 513.2M260.7 513.2L282.5 496.2M282.5 496.2L314.2 471.4M314.2 471.4L337.1 453.5M337.1 453.5L354.7 439.8M243.9 537.4L268.3 518.4M268.3 518.4L303 491.3M303 491.3L341.7 461M341.7 461L360.1 446.7M246.4 540.7L288.9 507.5M288.9 507.5L325.3 479M325.3 479L350 459.7M350 459.7L362.6 449.9M251.7 547.4L288.2 518.9M288.2 518.9L317.4 496.1M317.4 496.1L339.6 478.7M339.6 478.7L367.9 456.7M256.6 553.7L295.1 523.6M295.1 523.6L318 505.8M318 505.8L346.2 483.7M262 560.6L290.7 538.2M341.5 498.5L367.5 478.1M367.5 478.1L378.2 469.8M288.2 353.6L312.9 385.2M312.9 385.2L331.5 409.1M331.5 409.1L352 435.3M352 435.3L371.6 460.4M371.6 460.4L379 469.8M280.1 360L290.8 373.7M290.8 373.7L304.5 391.2M304.5 391.2L316.8 407M316.8 407L337.3 433.2M337.3 433.2L361.7 464.4M361.7 464.4L370.9 476.1M274.2 364.6L291.1 386.2M291.1 386.2L306.3 405.7M306.3 405.7L317.1 419.5M317.1 419.5L341 450.1M363.8 479.3L365 480.8M265.2 371.6L289.6 402.8M289.6 402.8L313.3 433.1M313.3 433.1L328.7 452.8M328.7 452.8L345.3 474M345.3 474L356 487.8M255.9 378.8L277.6 406.6M277.6 406.6L290.4 422.9M290.4 422.9L310.8 449M310.8 449L336.1 481.4M336.1 481.4L346.7 495M247.2 385.7L265.9 409.7M265.9 409.7L289.8 440.4M289.8 440.4L302.5 456.6M302.5 456.6L315.3 473M315.3 473L337.8 501.7M337.8 501.7L337.9 501.9M259.1 414.8L270.6 429.5M270.6 429.5L284.7 447.5M284.7 447.5L298.8 465.6M313 483.8L330.7 506.4M330.7 506.4L331.2 507.1M232.8 396.9L255.8 426.3M255.8 426.3L273.8 449.4M273.8 449.4L293.4 474.4M320.5 509.1L323.6 513.1M226.4 401.9L250.9 433.3M250.9 433.3L263.8 449.7M263.8 449.7L279.2 469.5M279.2 469.5L300.2 496.4M313.3 513.1L317.2 518.1M239.4 432.7L257.5 455.8M257.5 455.8L269.7 471.3M269.7 471.3L290.9 498.5M290.9 498.5L304 515.2M304 515.2L310.4 523.4M210.5 414.3L221.2 427.9M221.2 427.9L237.7 449.1M237.7 449.1L249.6 464.3M249.6 464.3L274.9 496.7M274.9 496.7L289.4 515.3M289.4 515.3L301.3 530.5M216.9 435.9L235.6 459.8M259.8 490.8L277.8 513.9M277.8 513.9L291.3 531.1M291.3 531.1L294.8 535.6M195.2 426.3L217.9 455.3M217.9 455.3L230.5 471.5M230.5 471.5L243 487.5M243 487.5L264 514.3M187.3 432.4L199.6 448.1M199.6 448.1L211 462.7M211 462.7L232.3 490M232.3 490L253.2 516.7M253.2 516.7L274.3 543.8M274.3 543.8L278.1 548.6M184 435L205.4 462.4M205.4 462.4L225.4 488M225.4 488L248.9 518.1M248.9 518.1L261.2 533.9M176.9 440.6L200.5 470.7M200.5 470.7L215.8 490.3M215.8 490.3L238 518.8M238 518.8L257.3 543.5M257.3 543.5L267.7 556.8" stroke="#fff" stroke-width="1.566"/></g>
<clipPath id="c14"><path d="M680 179L722 185 724 237 709 249 679 229 645 240 660 222 690 200Z"/></clipPath>
<g clip-path="url(#c14)" fill="none"><path d="M636.3 149L665.7 153.1M665.7 153.1L690.8 156.6M690.8 156.6L720 160.7M720 160.7L742.3 163.9M742.3 163.9L748.8 164.8M635.3 156.3L656.7 159.3M656.7 159.3L680.3 162.6M680.3 162.6L714.2 167.3M714.2 167.3L743.5 171.5M743.5 171.5L747.7 172.1M634.6 160.9L661.2 164.7M661.2 164.7L697.8 169.8M697.8 169.8L732.3 174.6M732.3 174.6L747.1 176.7M633.8 166.7L668.8 171.6M668.8 171.6L690.8 174.7M690.8 174.7L726.6 179.8M726.6 179.8L746.3 182.5M632.9 173.1L651.4 175.7M651.4 175.7L669.2 178.2M669.2 178.2L698.8 182.3M698.8 182.3L738.8 188M738.8 188L745.4 188.9M632 179.7L666.6 184.6M666.6 184.6L692.4 188.2M692.4 188.2L721.1 192.2M721.1 192.2L744.4 195.5M631.1 185.7L658.2 189.5M658.2 189.5L698.5 195.2M698.5 195.2L719.3 198.1M719.3 198.1L743.6 201.5M630.2 192.6L668.4 198M668.4 198L690.1 201M716 204.7L742.6 208.4M652.6 200.9L678.9 204.6M678.9 204.6L696.2 207.1M696.2 207.1L731.4 212M731.4 212L741.9 213.5M629 201.3L662.1 205.9M662.1 205.9L686.1 209.3M686.1 209.3L723.5 214.6M723.5 214.6L741.4 217.1M627.9 208.5L645.8 211M645.8 211L678.2 215.5M707.4 219.6L729.5 222.7M729.5 222.7L740.4 224.3M627 215L667.6 220.7M667.6 220.7L705 226M705 226L736.1 230.4M736.1 230.4L739.5 230.8M626 222.4L661.5 227.4M702.1 233.1L728.2 236.8M728.2 236.8L738.4 238.2M624.9 230.3L651.1 234M651.1 234L670.7 236.7M670.7 236.7L705.6 241.7M641.3 237.7L660.5 240.4M660.5 240.4L687.8 244.3M687.8 244.3L711.7 247.6M711.7 247.6L736.6 251.1M623.3 241.4L652.1 245.5M652.1 245.5L689.7 250.8M689.7 250.8L727.6 256.1M727.6 256.1L735.8 257.2M622.5 247L641.6 249.7M667.4 253.3L700.1 257.9M700.1 257.9L724.9 261.4M724.9 261.4L735 262.8M621.4 254.9L647.1 258.5M647.1 258.5L667.9 261.5M667.9 261.5L700.8 266.1M700.8 266.1L727.5 269.8M727.5 269.8L733.9 270.7M655.2 265L677.5 268.2M677.5 268.2L710.8 272.9M710.8 272.9L733.1 276M749.7 165.8L745.8 194.2M745.8 194.2L742.9 214.5M742.9 214.5L740.4 232.2M740.4 232.2L737.8 250.7M737.8 250.7L734.8 272.2M734.8 272.2L733.9 278.3M742.5 164.8L739.5 186.2M739.5 186.2L735.8 212.5M735.8 212.5L731.5 243.6M731.5 243.6L728.7 263.2M728.7 263.2L726.7 277.3M734 163.6L730.6 187.9M730.6 187.9L726.1 219.9M726.1 219.9L723.7 237.1M723.7 237.1L721.5 252.7M721.5 252.7L718.2 276.1M726.1 162.5L723.5 181.1M719.8 206.9L715.1 240.4M715.1 240.4L710.6 272.6M710.6 272.6L710.3 275M713.7 205.5L711.3 221.9M711.3 221.9L708.9 239.4M708.9 239.4L705.9 260.4M705.9 260.4L704 274.1M711.4 160.4L708 184.5M708 184.5L705.1 205.3M705.1 205.3L700.6 237.1M697.9 256.8L695.6 272.9M704.5 159.5L702 177.4M702 177.4L698.5 202M698.5 202L695.1 226.4M695.1 226.4L690.2 261.2M690.2 261.2L688.7 271.9M698.9 158.7L695.6 181.9M695.6 181.9L692.9 201.3M692.9 201.3L689.7 223.9M686.1 249.2L683.1 271.1M691.9 157.7L689.2 177M689.2 177L684.9 207.2M684.9 207.2L681.6 230.5M681.6 230.5L679.1 248.7M679.1 248.7L676.1 270.1M684.6 156.7L680.3 186.7M675.9 218.5L673 239.2M673 239.2L669.5 264.1M669.5 264.1L668.8 269.1M678.4 155.8L674 187.4M674 187.4L669.5 219.6M669.5 219.6L665.6 247.1M665.6 247.1L663.1 264.6M663.1 264.6L662.6 268.3M668.3 154.4L663.8 186.3M663.8 186.3L659.7 215.3M657.1 234.1L653.8 257.6M653.8 257.6L652.5 266.8M661.1 153.4L658.6 171.4M658.6 171.4L654.8 198.3M654.8 198.3L651.3 223.2M651.3 223.2L648 247.2M653.5 152.3L651.3 168M651.3 168L647.5 194.8M647.5 194.8L644.8 214.3M644.8 214.3L641.8 235.5M641.8 235.5L639 255.2M639 255.2L637.7 264.8M647 151.4L643 179.7M643 179.7L640.5 197.8M636.3 228L631.7 260.4M631.7 260.4L631.2 263.8M640.7 150.5L638.3 167.2M638.3 167.2L635.5 187.3M635.5 187.3L632.1 211.9M632.1 211.9L627.6 243.2M627.6 243.2L625.2 260.5M625.2 260.5L624.9 263" stroke="#cbcaca" stroke-width="2.4"/><path d="M636.3 149L665.7 153.1M665.7 153.1L690.8 156.6M690.8 156.6L720 160.7M720 160.7L742.3 163.9M742.3 163.9L748.8 164.8M635.3 156.3L656.7 159.3M656.7 159.3L680.3 162.6M680.3 162.6L714.2 167.3M714.2 167.3L743.5 171.5M743.5 171.5L747.7 172.1M634.6 160.9L661.2 164.7M661.2 164.7L697.8 169.8M697.8 169.8L732.3 174.6M732.3 174.6L747.1 176.7M633.8 166.7L668.8 171.6M668.8 171.6L690.8 174.7M690.8 174.7L726.6 179.8M726.6 179.8L746.3 182.5M632.9 173.1L651.4 175.7M651.4 175.7L669.2 178.2M669.2 178.2L698.8 182.3M698.8 182.3L738.8 188M738.8 188L745.4 188.9M632 179.7L666.6 184.6M666.6 184.6L692.4 188.2M692.4 188.2L721.1 192.2M721.1 192.2L744.4 195.5M631.1 185.7L658.2 189.5M658.2 189.5L698.5 195.2M698.5 195.2L719.3 198.1M719.3 198.1L743.6 201.5M630.2 192.6L668.4 198M668.4 198L690.1 201M716 204.7L742.6 208.4M652.6 200.9L678.9 204.6M678.9 204.6L696.2 207.1M696.2 207.1L731.4 212M731.4 212L741.9 213.5M629 201.3L662.1 205.9M662.1 205.9L686.1 209.3M686.1 209.3L723.5 214.6M723.5 214.6L741.4 217.1M627.9 208.5L645.8 211M645.8 211L678.2 215.5M707.4 219.6L729.5 222.7M729.5 222.7L740.4 224.3M627 215L667.6 220.7M667.6 220.7L705 226M705 226L736.1 230.4M736.1 230.4L739.5 230.8M626 222.4L661.5 227.4M702.1 233.1L728.2 236.8M728.2 236.8L738.4 238.2M624.9 230.3L651.1 234M651.1 234L670.7 236.7M670.7 236.7L705.6 241.7M641.3 237.7L660.5 240.4M660.5 240.4L687.8 244.3M687.8 244.3L711.7 247.6M711.7 247.6L736.6 251.1M623.3 241.4L652.1 245.5M652.1 245.5L689.7 250.8M689.7 250.8L727.6 256.1M727.6 256.1L735.8 257.2M622.5 247L641.6 249.7M667.4 253.3L700.1 257.9M700.1 257.9L724.9 261.4M724.9 261.4L735 262.8M621.4 254.9L647.1 258.5M647.1 258.5L667.9 261.5M667.9 261.5L700.8 266.1M700.8 266.1L727.5 269.8M727.5 269.8L733.9 270.7M655.2 265L677.5 268.2M677.5 268.2L710.8 272.9M710.8 272.9L733.1 276M749.7 165.8L745.8 194.2M745.8 194.2L742.9 214.5M742.9 214.5L740.4 232.2M740.4 232.2L737.8 250.7M737.8 250.7L734.8 272.2M734.8 272.2L733.9 278.3M742.5 164.8L739.5 186.2M739.5 186.2L735.8 212.5M735.8 212.5L731.5 243.6M731.5 243.6L728.7 263.2M728.7 263.2L726.7 277.3M734 163.6L730.6 187.9M730.6 187.9L726.1 219.9M726.1 219.9L723.7 237.1M723.7 237.1L721.5 252.7M721.5 252.7L718.2 276.1M726.1 162.5L723.5 181.1M719.8 206.9L715.1 240.4M715.1 240.4L710.6 272.6M710.6 272.6L710.3 275M713.7 205.5L711.3 221.9M711.3 221.9L708.9 239.4M708.9 239.4L705.9 260.4M705.9 260.4L704 274.1M711.4 160.4L708 184.5M708 184.5L705.1 205.3M705.1 205.3L700.6 237.1M697.9 256.8L695.6 272.9M704.5 159.5L702 177.4M702 177.4L698.5 202M698.5 202L695.1 226.4M695.1 226.4L690.2 261.2M690.2 261.2L688.7 271.9M698.9 158.7L695.6 181.9M695.6 181.9L692.9 201.3M692.9 201.3L689.7 223.9M686.1 249.2L683.1 271.1M691.9 157.7L689.2 177M689.2 177L684.9 207.2M684.9 207.2L681.6 230.5M681.6 230.5L679.1 248.7M679.1 248.7L676.1 270.1M684.6 156.7L680.3 186.7M675.9 218.5L673 239.2M673 239.2L669.5 264.1M669.5 264.1L668.8 269.1M678.4 155.8L674 187.4M674 187.4L669.5 219.6M669.5 219.6L665.6 247.1M665.6 247.1L663.1 264.6M663.1 264.6L662.6 268.3M668.3 154.4L663.8 186.3M663.8 186.3L659.7 215.3M657.1 234.1L653.8 257.6M653.8 257.6L652.5 266.8M661.1 153.4L658.6 171.4M658.6 171.4L654.8 198.3M654.8 198.3L651.3 223.2M651.3 223.2L648 247.2M653.5 152.3L651.3 168M651.3 168L647.5 194.8M647.5 194.8L644.8 214.3M644.8 214.3L641.8 235.5M641.8 235.5L639 255.2M639 255.2L637.7 264.8M647 151.4L643 179.7M643 179.7L640.5 197.8M636.3 228L631.7 260.4M631.7 260.4L631.2 263.8M640.7 150.5L638.3 167.2M638.3 167.2L635.5 187.3M635.5 187.3L632.1 211.9M632.1 211.9L627.6 243.2M627.6 243.2L625.2 260.5M625.2 260.5L624.9 263" stroke="#fff" stroke-width="1.4040000000000001"/></g>
<clipPath id="c15"><path d="M577 480L620 476 714 466 714 493 577 493Z"/></clipPath>
<g clip-path="url(#c15)" fill="none"><path d="M566.8 411.6L620.6 407.8M653.9 405.5L706.9 401.8M706.9 401.8L714 401.3M567 415.4L626.9 411.2M626.9 411.2L668.5 408.3M668.5 408.3L714.3 405.1M567.5 421.8L607.8 419M607.8 419L648.3 416.1M648.3 416.1L694.2 412.9M694.2 412.9L714.7 411.5M568.1 430.2L596.7 428.2M596.7 428.2L654.1 424.1M654.1 424.1L680.3 422.3M680.3 422.3L715.3 419.9M568.3 434L604.9 431.5M604.9 431.5L656.9 427.8M656.9 427.8L705.7 424.4M568.8 440.6L616 437.3M616 437.3L646.4 435.2M646.4 435.2L682.5 432.7M682.5 432.7L716.1 430.3M680.8 439.2L716.5 436.7M569.7 453.1L613.5 450M613.5 450L643.6 447.9M643.6 447.9L680.2 445.4M680.2 445.4L716.9 442.8M570.2 460.2L607.5 457.6M607.5 457.6L663.2 453.7M663.2 453.7L716.2 450M570.6 466L603.6 463.7M603.6 463.7L656.8 459.9M656.8 459.9L688.1 457.8M688.1 457.8L717.8 455.7M570.9 471.3L616.9 468.1M616.9 468.1L643.8 466.2M643.8 466.2L702.6 462.1M702.6 462.1L718.2 461M571.4 478.3L601.1 476.3M600.3 479.4L633.1 477.1M633.1 477.1L663.7 475M663.7 475L704.5 472.1M704.5 472.1L718.9 471.1M572.1 487.9L601.3 485.9M601.3 485.9L641.8 483.1M698.6 479.1L719.4 477.6M572.5 494.3L608.3 491.8M608.3 491.8L640.7 489.5M640.7 489.5L676.6 487M676.6 487L713.1 484.4M607 498.2L651 495.1M651 495.1L702.7 491.5M702.7 491.5L720.2 490.2M573.5 507.5L631.4 503.5M631.4 503.5L691.1 499.3M691.1 499.3L720.7 497.2M573.8 513L622.9 509.5M668.8 506.3L721.1 502.7M574.1 517.3L606.9 515M707.9 508L721.4 507M574.5 522.3L607.1 520M607.1 520L646.9 517.2M646.9 517.2L686.2 514.4M686.2 514.4L721.8 512M575 529.7L619.3 526.6M619.3 526.6L679.3 522.4M679.3 522.4L722.3 519.4M575.5 536.6L609.9 534.2M609.9 534.2L661.4 530.6M661.4 530.6L717.2 526.7M717.2 526.7L722.8 526.3M575.8 541.1L614.8 538.4M614.8 538.4L670.9 534.5M670.9 534.5L720.8 531M720.8 531L723.1 530.8M576.2 546.6L605.6 544.5M605.6 544.5L657.2 540.9M657.2 540.9L713.5 537M713.5 537L723.5 536.3M576.6 552.3L602.8 550.4M642.2 547.7L699 543.7M699 543.7L723.9 542M603.6 555.4L654.9 551.8M654.9 551.8L698.8 548.7M698.8 548.7L724.2 547M716.1 467.4L718.2 497.3M718.2 497.3L720.3 527M720.3 527L721.8 548.2M704.5 401.4L706.1 424.8M706.1 424.8L708.2 454.7M708.2 454.7L710.4 486.1M710.4 486.1L712.3 513.7M712.3 513.7L714.6 545.8M714.6 545.8L714.8 548.7M695.3 402L696.9 424M696.9 424L699.3 458.6M699.3 458.6L701.3 487.6M701.3 487.6L703.5 518.9M703.5 518.9L705.2 543.6M680.6 403L682 423.3M684.4 457.1L685.6 474.9M685.6 474.9L687.2 497M687.2 497L689.7 532.9M689.7 532.9L690.9 550.3M673.7 446.9L675.5 472.1M675.5 472.1L678 507.1M678 507.1L680.3 540M680.3 540L681 551M663.5 404.2L665.2 427.6M665.2 427.6L667 453.2M667 453.2L668.9 481M668.9 481L670.3 500.2M671.3 515.5L672.5 531.7M672.5 531.7L673.8 551.5M649.1 405.3L651 432.6M651 432.6L652 447.9M652 447.9L653.5 468.4M653.5 468.4L654.6 484.8M654.6 484.8L656.2 507.7M657.9 531.2L659.4 552.5M641.8 405.8L643.7 433.4M643.7 433.4L646.2 469.1M646.2 469.1L647.3 485.1M647.3 485.1L649.3 514.1M649.3 514.1L651.7 548.4M651.7 548.4L652.1 553M629.5 406.6L631 427.9M631 427.9L632.9 455.8M632.9 455.8L634.8 482.3M634.8 482.3L636.7 509.2M636.7 509.2L638.6 536.1M638.6 536.1L639.6 551.7M639.6 551.7L639.8 553.9M615.5 407.6L617.3 432.7M617.3 432.7L619.1 458.9M621.5 493.8L623.1 515.5M623.1 515.5L624.2 531.8M624.2 531.8L625.3 547.5M625.3 547.5L625.8 554.9M607.6 408.2L609.6 438M609.6 438L611.6 465.7M611.6 465.7L613.5 493.1M613.5 493.1L615.7 524.5M615.7 524.5L617.1 544.7M617.1 544.7L617.9 555.4M595.9 409L597.7 435.7M600.2 470.4L601.6 491.1M601.6 491.1L604 525.8M604 525.8L606.2 556.2M581.2 410L582.4 426.4M583.6 444.6L585.1 466M587 493.3L589.3 525.1M589.3 525.1L590.5 543.1M590.5 543.1L591.5 557.3M570.6 430.7L572.9 463.9M572.9 463.9L574.1 481M574.1 481L576.3 512.2M576.3 512.2L578.6 544.7M578.6 544.7L579.5 558.1" stroke="#cbcaca" stroke-width="2.6"/><path d="M566.8 411.6L620.6 407.8M653.9 405.5L706.9 401.8M706.9 401.8L714 401.3M567 415.4L626.9 411.2M626.9 411.2L668.5 408.3M668.5 408.3L714.3 405.1M567.5 421.8L607.8 419M607.8 419L648.3 416.1M648.3 416.1L694.2 412.9M694.2 412.9L714.7 411.5M568.1 430.2L596.7 428.2M596.7 428.2L654.1 424.1M654.1 424.1L680.3 422.3M680.3 422.3L715.3 419.9M568.3 434L604.9 431.5M604.9 431.5L656.9 427.8M656.9 427.8L705.7 424.4M568.8 440.6L616 437.3M616 437.3L646.4 435.2M646.4 435.2L682.5 432.7M682.5 432.7L716.1 430.3M680.8 439.2L716.5 436.7M569.7 453.1L613.5 450M613.5 450L643.6 447.9M643.6 447.9L680.2 445.4M680.2 445.4L716.9 442.8M570.2 460.2L607.5 457.6M607.5 457.6L663.2 453.7M663.2 453.7L716.2 450M570.6 466L603.6 463.7M603.6 463.7L656.8 459.9M656.8 459.9L688.1 457.8M688.1 457.8L717.8 455.7M570.9 471.3L616.9 468.1M616.9 468.1L643.8 466.2M643.8 466.2L702.6 462.1M702.6 462.1L718.2 461M571.4 478.3L601.1 476.3M600.3 479.4L633.1 477.1M633.1 477.1L663.7 475M663.7 475L704.5 472.1M704.5 472.1L718.9 471.1M572.1 487.9L601.3 485.9M601.3 485.9L641.8 483.1M698.6 479.1L719.4 477.6M572.5 494.3L608.3 491.8M608.3 491.8L640.7 489.5M640.7 489.5L676.6 487M676.6 487L713.1 484.4M607 498.2L651 495.1M651 495.1L702.7 491.5M702.7 491.5L720.2 490.2M573.5 507.5L631.4 503.5M631.4 503.5L691.1 499.3M691.1 499.3L720.7 497.2M573.8 513L622.9 509.5M668.8 506.3L721.1 502.7M574.1 517.3L606.9 515M707.9 508L721.4 507M574.5 522.3L607.1 520M607.1 520L646.9 517.2M646.9 517.2L686.2 514.4M686.2 514.4L721.8 512M575 529.7L619.3 526.6M619.3 526.6L679.3 522.4M679.3 522.4L722.3 519.4M575.5 536.6L609.9 534.2M609.9 534.2L661.4 530.6M661.4 530.6L717.2 526.7M717.2 526.7L722.8 526.3M575.8 541.1L614.8 538.4M614.8 538.4L670.9 534.5M670.9 534.5L720.8 531M720.8 531L723.1 530.8M576.2 546.6L605.6 544.5M605.6 544.5L657.2 540.9M657.2 540.9L713.5 537M713.5 537L723.5 536.3M576.6 552.3L602.8 550.4M642.2 547.7L699 543.7M699 543.7L723.9 542M603.6 555.4L654.9 551.8M654.9 551.8L698.8 548.7M698.8 548.7L724.2 547M716.1 467.4L718.2 497.3M718.2 497.3L720.3 527M720.3 527L721.8 548.2M704.5 401.4L706.1 424.8M706.1 424.8L708.2 454.7M708.2 454.7L710.4 486.1M710.4 486.1L712.3 513.7M712.3 513.7L714.6 545.8M714.6 545.8L714.8 548.7M695.3 402L696.9 424M696.9 424L699.3 458.6M699.3 458.6L701.3 487.6M701.3 487.6L703.5 518.9M703.5 518.9L705.2 543.6M680.6 403L682 423.3M684.4 457.1L685.6 474.9M685.6 474.9L687.2 497M687.2 497L689.7 532.9M689.7 532.9L690.9 550.3M673.7 446.9L675.5 472.1M675.5 472.1L678 507.1M678 507.1L680.3 540M680.3 540L681 551M663.5 404.2L665.2 427.6M665.2 427.6L667 453.2M667 453.2L668.9 481M668.9 481L670.3 500.2M671.3 515.5L672.5 531.7M672.5 531.7L673.8 551.5M649.1 405.3L651 432.6M651 432.6L652 447.9M652 447.9L653.5 468.4M653.5 468.4L654.6 484.8M654.6 484.8L656.2 507.7M657.9 531.2L659.4 552.5M641.8 405.8L643.7 433.4M643.7 433.4L646.2 469.1M646.2 469.1L647.3 485.1M647.3 485.1L649.3 514.1M649.3 514.1L651.7 548.4M651.7 548.4L652.1 553M629.5 406.6L631 427.9M631 427.9L632.9 455.8M632.9 455.8L634.8 482.3M634.8 482.3L636.7 509.2M636.7 509.2L638.6 536.1M638.6 536.1L639.6 551.7M639.6 551.7L639.8 553.9M615.5 407.6L617.3 432.7M617.3 432.7L619.1 458.9M621.5 493.8L623.1 515.5M623.1 515.5L624.2 531.8M624.2 531.8L625.3 547.5M625.3 547.5L625.8 554.9M607.6 408.2L609.6 438M609.6 438L611.6 465.7M611.6 465.7L613.5 493.1M613.5 493.1L615.7 524.5M615.7 524.5L617.1 544.7M617.1 544.7L617.9 555.4M595.9 409L597.7 435.7M600.2 470.4L601.6 491.1M601.6 491.1L604 525.8M604 525.8L606.2 556.2M581.2 410L582.4 426.4M583.6 444.6L585.1 466M587 493.3L589.3 525.1M589.3 525.1L590.5 543.1M590.5 543.1L591.5 557.3M570.6 430.7L572.9 463.9M572.9 463.9L574.1 481M574.1 481L576.3 512.2M576.3 512.2L578.6 544.7M578.6 544.7L579.5 558.1" stroke="#fff" stroke-width="1.566"/></g>
<clipPath id="c16"><path d="M24 166L120 172 24 172Z"/></clipPath>
<g clip-path="url(#c16)" fill="none"><path d="M19.9 116.4L53.6 116.4M53.6 116.4L91.2 116.4M91.2 116.4L115 116.4M19.9 124L42.9 124M76.4 124L112.3 124M19.9 128.5L48.3 128.5M69.4 128.5L95 128.5M19.9 132.4L43.1 132.4M43.1 132.4L81.3 132.4M109.3 132.4L124.1 132.4M19.9 140L56 140M90 140L116.5 140M116.5 140L124.1 140M19.9 143.6L43.9 143.6M43.9 143.6L76.5 143.6M76.5 143.6L102.8 143.6M102.8 143.6L124.1 143.6M19.9 150.5L43.3 150.5M43.3 150.5L63 150.5M63 150.5L98.7 150.5M98.7 150.5L124.1 150.5M19.9 154.5L57.3 154.5M83.6 154.5L116.1 154.5M116.1 154.5L124.1 154.5M19.9 159.6L44 159.6M44 159.6L72.5 159.6M72.5 159.6L111.5 159.6M111.5 159.6L124.1 159.6M19.9 165.1L52.5 165.1M52.5 165.1L79.7 165.1M79.7 165.1L97.5 165.1M97.5 165.1L124.1 165.1M19.9 169.4L55.2 169.4M55.2 169.4L82.3 169.4M82.3 169.4L118.8 169.4M118.8 169.4L124.1 169.4M19.9 174.4L47.1 174.4M47.1 174.4L85.7 174.4M85.7 174.4L118.2 174.4M19.9 180.3L47.9 180.3M47.9 180.3L75 180.3M75 180.3L102.3 180.3M102.3 180.3L124.1 180.3M19.9 185.3L43.1 185.3M43.1 185.3L72.2 185.3M72.2 185.3L113 185.3M19.9 189.6L55.9 189.6M55.9 189.6L78.8 189.6M78.8 189.6L106.7 189.6M19.9 194.7L53.7 194.7M53.7 194.7L93 194.7M117.5 194.7L124.1 194.7M48.8 197.7L83.8 197.7M83.8 197.7L107.7 197.7M107.7 197.7L124.1 197.7M19.9 204.3L48 204.3M48 204.3L73.6 204.3M73.6 204.3L105.1 204.3M105.1 204.3L124.1 204.3M19.9 209.2L53.3 209.2M85.9 209.2L111.1 209.2M19.9 214.1L56 214.1M56 214.1L80.4 214.1M80.4 214.1L114.6 214.1M114.6 214.1L124.1 214.1M19.9 219.3L56.7 219.3M56.7 219.3L83.1 219.3M83.1 219.3L100.5 219.3M100.5 219.3L118.4 219.3M118.4 219.3L124.1 219.3M125.1 116.9L125.1 144M125.1 144L125.1 170.5M125.1 170.5L125.1 184.1M125.1 184.1L125.1 200.9M125.1 200.9L125.1 213.8M125.1 213.8L125.1 221.1M116.8 116.9L116.8 143M116.8 143L116.8 159.7M116.8 159.7L116.8 183.4M116.8 183.4L116.8 199.8M116.8 218.9L116.8 221.1M110.5 169.5L110.5 184.1M110.5 184.1L110.5 206.3M110.5 206.3L110.5 221.1M102.1 116.9L102.1 142.4M102.1 142.4L102.1 159.9M102.1 190L102.1 208.9M102.1 208.9L102.1 221.1M96.3 116.9L96.3 144.9M96.3 144.9L96.3 158M96.3 158L96.3 175.9M96.3 175.9L96.3 190.9M96.3 190.9L96.3 205.9M96.3 205.9L96.3 221.1M88.4 116.9L88.4 139.3M88.4 139.3L88.4 165.3M88.4 165.3L88.4 194.8M88.4 194.8L88.4 217.8M79.2 116.9L79.2 131.6M79.2 160.5L79.2 186.1M79.2 186.1L79.2 208.6M79.2 208.6L79.2 221.1M73 116.9L73 141.1M73 141.1L73 171.8M73 215.4L73 221.1M64.9 116.9L64.9 131.5M64.9 160L64.9 176.8M64.9 176.8L64.9 198.2M64.9 198.2L64.9 217.2M64.9 217.2L64.9 221.1M56.1 116.9L56.1 133.4M56.1 163.3L56.1 191.6M56.1 191.6L56.1 218M56.1 218L56.1 221.1M50.6 116.9L50.6 142.9M50.6 142.9L50.6 168.1M50.6 194.6L50.6 221.1M43.7 116.9L43.7 144.5M43.7 189L43.7 217.4M43.7 217.4L43.7 221.1M33.6 116.9L33.6 131.3M33.6 131.3L33.6 157.3M33.6 157.3L33.6 170.5M33.6 170.5L33.6 191.3M33.6 191.3L33.6 219M33.6 219L33.6 221.1M30.4 116.9L30.4 132.3M30.4 132.3L30.4 158.5M30.4 158.5L30.4 174.1M30.4 174.1L30.4 199M30.4 199L30.4 214.3M23.6 147.8L23.6 177.9M23.6 204.1L23.6 221.1" stroke="#cbcaca" stroke-width="2.6"/><path d="M19.9 116.4L53.6 116.4M53.6 116.4L91.2 116.4M91.2 116.4L115 116.4M19.9 124L42.9 124M76.4 124L112.3 124M19.9 128.5L48.3 128.5M69.4 128.5L95 128.5M19.9 132.4L43.1 132.4M43.1 132.4L81.3 132.4M109.3 132.4L124.1 132.4M19.9 140L56 140M90 140L116.5 140M116.5 140L124.1 140M19.9 143.6L43.9 143.6M43.9 143.6L76.5 143.6M76.5 143.6L102.8 143.6M102.8 143.6L124.1 143.6M19.9 150.5L43.3 150.5M43.3 150.5L63 150.5M63 150.5L98.7 150.5M98.7 150.5L124.1 150.5M19.9 154.5L57.3 154.5M83.6 154.5L116.1 154.5M116.1 154.5L124.1 154.5M19.9 159.6L44 159.6M44 159.6L72.5 159.6M72.5 159.6L111.5 159.6M111.5 159.6L124.1 159.6M19.9 165.1L52.5 165.1M52.5 165.1L79.7 165.1M79.7 165.1L97.5 165.1M97.5 165.1L124.1 165.1M19.9 169.4L55.2 169.4M55.2 169.4L82.3 169.4M82.3 169.4L118.8 169.4M118.8 169.4L124.1 169.4M19.9 174.4L47.1 174.4M47.1 174.4L85.7 174.4M85.7 174.4L118.2 174.4M19.9 180.3L47.9 180.3M47.9 180.3L75 180.3M75 180.3L102.3 180.3M102.3 180.3L124.1 180.3M19.9 185.3L43.1 185.3M43.1 185.3L72.2 185.3M72.2 185.3L113 185.3M19.9 189.6L55.9 189.6M55.9 189.6L78.8 189.6M78.8 189.6L106.7 189.6M19.9 194.7L53.7 194.7M53.7 194.7L93 194.7M117.5 194.7L124.1 194.7M48.8 197.7L83.8 197.7M83.8 197.7L107.7 197.7M107.7 197.7L124.1 197.7M19.9 204.3L48 204.3M48 204.3L73.6 204.3M73.6 204.3L105.1 204.3M105.1 204.3L124.1 204.3M19.9 209.2L53.3 209.2M85.9 209.2L111.1 209.2M19.9 214.1L56 214.1M56 214.1L80.4 214.1M80.4 214.1L114.6 214.1M114.6 214.1L124.1 214.1M19.9 219.3L56.7 219.3M56.7 219.3L83.1 219.3M83.1 219.3L100.5 219.3M100.5 219.3L118.4 219.3M118.4 219.3L124.1 219.3M125.1 116.9L125.1 144M125.1 144L125.1 170.5M125.1 170.5L125.1 184.1M125.1 184.1L125.1 200.9M125.1 200.9L125.1 213.8M125.1 213.8L125.1 221.1M116.8 116.9L116.8 143M116.8 143L116.8 159.7M116.8 159.7L116.8 183.4M116.8 183.4L116.8 199.8M116.8 218.9L116.8 221.1M110.5 169.5L110.5 184.1M110.5 184.1L110.5 206.3M110.5 206.3L110.5 221.1M102.1 116.9L102.1 142.4M102.1 142.4L102.1 159.9M102.1 190L102.1 208.9M102.1 208.9L102.1 221.1M96.3 116.9L96.3 144.9M96.3 144.9L96.3 158M96.3 158L96.3 175.9M96.3 175.9L96.3 190.9M96.3 190.9L96.3 205.9M96.3 205.9L96.3 221.1M88.4 116.9L88.4 139.3M88.4 139.3L88.4 165.3M88.4 165.3L88.4 194.8M88.4 194.8L88.4 217.8M79.2 116.9L79.2 131.6M79.2 160.5L79.2 186.1M79.2 186.1L79.2 208.6M79.2 208.6L79.2 221.1M73 116.9L73 141.1M73 141.1L73 171.8M73 215.4L73 221.1M64.9 116.9L64.9 131.5M64.9 160L64.9 176.8M64.9 176.8L64.9 198.2M64.9 198.2L64.9 217.2M64.9 217.2L64.9 221.1M56.1 116.9L56.1 133.4M56.1 163.3L56.1 191.6M56.1 191.6L56.1 218M56.1 218L56.1 221.1M50.6 116.9L50.6 142.9M50.6 142.9L50.6 168.1M50.6 194.6L50.6 221.1M43.7 116.9L43.7 144.5M43.7 189L43.7 217.4M43.7 217.4L43.7 221.1M33.6 116.9L33.6 131.3M33.6 131.3L33.6 157.3M33.6 157.3L33.6 170.5M33.6 170.5L33.6 191.3M33.6 191.3L33.6 219M33.6 219L33.6 221.1M30.4 116.9L30.4 132.3M30.4 132.3L30.4 158.5M30.4 158.5L30.4 174.1M30.4 174.1L30.4 199M30.4 199L30.4 214.3M23.6 147.8L23.6 177.9M23.6 204.1L23.6 221.1" stroke="#fff" stroke-width="1.566"/></g>
<clipPath id="c17"><path d="M275 160L365 160 365 190 275 190Z"/></clipPath>
<g clip-path="url(#c17)" fill="none"><path d="M289.7 107.8L324.4 120.4M324.4 120.4L348.3 129.1M348.3 129.1L380.4 140.8M380.4 140.8L386.4 143M286.3 117.3L331.7 133.8M331.7 133.8L366.4 146.4M284.1 123.2L307.8 131.9M307.8 131.9L329 139.6M329 139.6L362.9 151.9M362.9 151.9L380.8 158.4M281.1 131.5L321.9 146.3M321.9 146.3L357.8 159.4M357.8 159.4L377.8 166.7M277.9 140.3L320.8 156M320.8 156L344.4 164.5M344.4 164.5L367.6 173M367.6 173L374.5 175.5M275.2 147.6L311.4 160.7M311.4 160.7L349.9 174.8M349.9 174.8L371.9 182.8M272.2 156.1L296 164.8M296 164.8L328.1 176.5M328.1 176.5L364.2 189.6M364.2 189.6L368.8 191.3M291.8 172.9L332.4 187.6M332.4 187.6L365.3 199.6M365.3 199.6L365.7 199.8M267.1 170.1L313.8 187.1M313.8 187.1L347.2 199.2M347.2 199.2L363.7 205.3M264.8 176.3L292.2 186.3M292.2 186.3L334.9 201.9M334.9 201.9L361.4 211.5M305.4 203.2L342.4 216.7M342.4 216.7L357.6 222.2M300.6 205.3L343.6 221M343.6 221L356.3 225.6M255.7 201.3L278.7 209.7M278.7 209.7L310.8 221.4M310.8 221.4L352.4 236.5M387 144.7L377.2 171.6M377.2 171.6L367.6 198M367.6 198L353.4 236.9M353.4 236.9L351.8 241.3M374.2 140L364.5 166.5M364.5 166.5L356.9 187.5M356.9 187.5L344.5 221.6M368.9 138L360.7 160.6M360.7 160.6L348.3 194.5M348.3 194.5L336.9 225.8M336.9 225.8L333.7 234.7M361.2 135.3L352.1 160.1M352.1 160.1L337.1 201.4M328.7 224.5L326 231.9M350.8 131.5L340.5 160M340.5 160L330.2 188.2M330.2 188.2L315.7 228.2M343.1 128.7L327.4 171.7M327.4 171.7L314.5 207.3M333 125L319.9 161M319.9 161L308.4 192.5M308.4 192.5L300.1 215.2M300.1 215.2L297.8 221.6M314.4 151.3L305.4 176.1M305.4 176.1L291.2 215.2M291.2 215.2L289.9 218.8M319.3 120L309.5 147M309.5 147L295.5 185.3M295.5 185.3L284.1 216.7M313.4 117.8L305.2 140.2M305.2 140.2L293.7 171.8M293.7 171.8L281.7 204.9M281.7 204.9L278.2 214.5M303 114.1L295.9 133.4M295.9 133.4L286.9 158.1M286.9 158.1L279.2 179.3M279.2 179.3L269.3 206.5M293.9 110.8L278.2 153.9M278.2 153.9L265.3 189.4" stroke="#cbcaca" stroke-width="2.6"/><path d="M289.7 107.8L324.4 120.4M324.4 120.4L348.3 129.1M348.3 129.1L380.4 140.8M380.4 140.8L386.4 143M286.3 117.3L331.7 133.8M331.7 133.8L366.4 146.4M284.1 123.2L307.8 131.9M307.8 131.9L329 139.6M329 139.6L362.9 151.9M362.9 151.9L380.8 158.4M281.1 131.5L321.9 146.3M321.9 146.3L357.8 159.4M357.8 159.4L377.8 166.7M277.9 140.3L320.8 156M320.8 156L344.4 164.5M344.4 164.5L367.6 173M367.6 173L374.5 175.5M275.2 147.6L311.4 160.7M311.4 160.7L349.9 174.8M349.9 174.8L371.9 182.8M272.2 156.1L296 164.8M296 164.8L328.1 176.5M328.1 176.5L364.2 189.6M364.2 189.6L368.8 191.3M291.8 172.9L332.4 187.6M332.4 187.6L365.3 199.6M365.3 199.6L365.7 199.8M267.1 170.1L313.8 187.1M313.8 187.1L347.2 199.2M347.2 199.2L363.7 205.3M264.8 176.3L292.2 186.3M292.2 186.3L334.9 201.9M334.9 201.9L361.4 211.5M305.4 203.2L342.4 216.7M342.4 216.7L357.6 222.2M300.6 205.3L343.6 221M343.6 221L356.3 225.6M255.7 201.3L278.7 209.7M278.7 209.7L310.8 221.4M310.8 221.4L352.4 236.5M387 144.7L377.2 171.6M377.2 171.6L367.6 198M367.6 198L353.4 236.9M353.4 236.9L351.8 241.3M374.2 140L364.5 166.5M364.5 166.5L356.9 187.5M356.9 187.5L344.5 221.6M368.9 138L360.7 160.6M360.7 160.6L348.3 194.5M348.3 194.5L336.9 225.8M336.9 225.8L333.7 234.7M361.2 135.3L352.1 160.1M352.1 160.1L337.1 201.4M328.7 224.5L326 231.9M350.8 131.5L340.5 160M340.5 160L330.2 188.2M330.2 188.2L315.7 228.2M343.1 128.7L327.4 171.7M327.4 171.7L314.5 207.3M333 125L319.9 161M319.9 161L308.4 192.5M308.4 192.5L300.1 215.2M300.1 215.2L297.8 221.6M314.4 151.3L305.4 176.1M305.4 176.1L291.2 215.2M291.2 215.2L289.9 218.8M319.3 120L309.5 147M309.5 147L295.5 185.3M295.5 185.3L284.1 216.7M313.4 117.8L305.2 140.2M305.2 140.2L293.7 171.8M293.7 171.8L281.7 204.9M281.7 204.9L278.2 214.5M303 114.1L295.9 133.4M295.9 133.4L286.9 158.1M286.9 158.1L279.2 179.3M279.2 179.3L269.3 206.5M293.9 110.8L278.2 153.9M278.2 153.9L265.3 189.4" stroke="#fff" stroke-width="1.566"/></g>
<path d="M40 160L178 160 178 172 128 172 112 166 89 161 54 160Z" fill="#cdebb0"/>
<rect x="182" y="160" width="11" height="12" fill="#ffffe5"/>
<rect x="193" y="160" width="39" height="12" fill="#aacbaf" fill-opacity=".55"/>
<rect x="193" y="160" width="39" height="12" fill="#cdebb0" fill-opacity=".5"/>
<rect x="246" y="160" width="30" height="12" fill="#f2efe9"/>
<path d="M351.2 160L365 160 368 176.7 355 179.5Z" fill="#f2dad9"/>
<path d="M335 178.4L353.4 176.7 356.2 187.9 335 191.8Z" fill="#f2dad9"/>
<path d="M365.1 160L383 160 388.5 180 373 181 371.8 176.7 368 176.7Z" fill="#88e0be" fill-opacity=".75"/>
<path d="M367.3 177.3L373 177 373 181.5 389.6 180.6 389.6 187.3 368.4 187.3Z" fill="#ffffe5"/>
<rect x="24" y="171" width="13" height="18" fill="#e4e3e3"/>
<path d="M24 195L37 212 37 246 24 252Z" fill="#cfe8c3"/>
<rect x="24" y="200" width="3.5" height="14" fill="#aad3df"/>
<rect x="28.4" y="213" width="5.6" height="6.7" fill="#f0efe8"/>
<rect x="24" y="250" width="13" height="36" fill="#dffce2"/>
<rect x="28.4" y="252.7" width="5.6" height="9.9" fill="#88e0be" fill-opacity=".8"/>
<rect x="25" y="266" width="4" height="7" fill="#88e0be" fill-opacity=".8"/>
<rect x="30" y="268" width="4" height="6" fill="#88e0be" fill-opacity=".8"/>
<rect x="24" y="286" width="10" height="6" fill="#f7f7c9"/>
<rect x="24" y="312.7" width="6" height="9.3" fill="#ffffe5"/>
<rect x="24" y="322.7" width="13" height="15.3" fill="#cfe6c1"/>
<path d="M28 327L31 325 35 331 32 333Z" fill="#88e0be" fill-opacity=".8"/>
<clipPath id="c18"><path d="M24 292L37 292 37 322 30 322 30 312 24 312Z"/></clipPath>
<g clip-path="url(#c18)" fill="none"><path d="M26.2 277.7L52.3 296M52.3 296L59.5 301M22.3 283.3L39.6 295.4M39.6 295.4L55.6 306.6M18.7 288.3L35 299.7M35 299.7L52.1 311.7M16.2 291.9L44.6 311.8M33.9 310L46.9 319.1M10.6 300L41.5 321.6M41.5 321.6L43.9 323.3M7 305.1L24.1 317.1M4.4 308.8L21 320.4M21 320.4L37.7 332.1M58 301.4L49.7 313.3M49.7 313.3L34.7 334.7M51.2 296.7L38.3 315.2M48 294.4L31.5 317.9M31.5 317.9L24.6 327.7M41.5 289.9L25.9 312.2M25.9 312.2L18.2 323.2M36.5 286.3L21.9 307.2M21.9 307.2L13.1 319.7M30.7 282.3L14.9 304.9M14.9 304.9L7.3 315.6" stroke="#cbcaca" stroke-width="2.6"/><path d="M26.2 277.7L52.3 296M52.3 296L59.5 301M22.3 283.3L39.6 295.4M39.6 295.4L55.6 306.6M18.7 288.3L35 299.7M35 299.7L52.1 311.7M16.2 291.9L44.6 311.8M33.9 310L46.9 319.1M10.6 300L41.5 321.6M41.5 321.6L43.9 323.3M7 305.1L24.1 317.1M4.4 308.8L21 320.4M21 320.4L37.7 332.1M58 301.4L49.7 313.3M49.7 313.3L34.7 334.7M51.2 296.7L38.3 315.2M48 294.4L31.5 317.9M31.5 317.9L24.6 327.7M41.5 289.9L25.9 312.2M25.9 312.2L18.2 323.2M36.5 286.3L21.9 307.2M21.9 307.2L13.1 319.7M30.7 282.3L14.9 304.9M14.9 304.9L7.3 315.6" stroke="#fff" stroke-width="1.566"/></g>
<clipPath id="c19"><path d="M24 350L37 350 37 398 24 398Z"/></clipPath>
<g clip-path="url(#c19)" fill="none"><path d="M6.9 341.5L32.2 346M32.2 346L58.7 350.7M58.7 350.7L63.8 351.6M6.3 344.9L44.2 351.6M5.2 351.1L23.1 354.3M23.1 354.3L52.6 359.5M52.6 359.5L62.1 361.2M43.4 361.1L61.5 364.3M3.4 361.6L36.7 367.5M54.9 370.7L60.2 371.6M2.7 365.3L37.9 371.5M37.9 371.5L59.6 375.4M1.8 370.8L30.1 375.8M30.1 375.8L58.6 380.8M0.8 376.2L35.1 382.2M35.1 382.2L57.7 386.2M-0.4 383.2L27.2 388.1M27.2 388.1L56.4 393.2M-1.2 387.7L37 394.5M37 394.5L55.6 397.8M-2.2 393L31.7 399M31.7 399L54.7 403M62.9 365.8L58.8 388.6M58.8 388.6L55.8 405.9M55.8 405.9L55.5 407.7M55.8 349.1L52.1 369.8M52.1 369.8L48 393.2M48 393.2L45.7 406M41.4 380.5L37.9 400.8M37.9 400.8L37.2 404.5M43.2 346.9L40.9 360M40.9 360L38.4 373.8M38.4 373.8L35.3 391.8M35.3 391.8L33.1 403.8M35.1 345.5L30.7 370.5M30.7 370.5L27 391.5M28.7 344.4L25.8 360.4M25.8 360.4L20.8 388.7M20.8 388.7L18.6 401.2M23.9 343.5L19.3 369.3M16.7 384L13.8 400.4M17.2 342.3L12.3 370.1M12.3 370.1L7.2 398.9M7.2 398.9L7.1 399.2M2.4 368L-1.6 390.3M-1.6 390.3L-2.8 397.4" stroke="#cbcaca" stroke-width="2.6"/><path d="M6.9 341.5L32.2 346M32.2 346L58.7 350.7M58.7 350.7L63.8 351.6M6.3 344.9L44.2 351.6M5.2 351.1L23.1 354.3M23.1 354.3L52.6 359.5M52.6 359.5L62.1 361.2M43.4 361.1L61.5 364.3M3.4 361.6L36.7 367.5M54.9 370.7L60.2 371.6M2.7 365.3L37.9 371.5M37.9 371.5L59.6 375.4M1.8 370.8L30.1 375.8M30.1 375.8L58.6 380.8M0.8 376.2L35.1 382.2M35.1 382.2L57.7 386.2M-0.4 383.2L27.2 388.1M27.2 388.1L56.4 393.2M-1.2 387.7L37 394.5M37 394.5L55.6 397.8M-2.2 393L31.7 399M31.7 399L54.7 403M62.9 365.8L58.8 388.6M58.8 388.6L55.8 405.9M55.8 405.9L55.5 407.7M55.8 349.1L52.1 369.8M52.1 369.8L48 393.2M48 393.2L45.7 406M41.4 380.5L37.9 400.8M37.9 400.8L37.2 404.5M43.2 346.9L40.9 360M40.9 360L38.4 373.8M38.4 373.8L35.3 391.8M35.3 391.8L33.1 403.8M35.1 345.5L30.7 370.5M30.7 370.5L27 391.5M28.7 344.4L25.8 360.4M25.8 360.4L20.8 388.7M20.8 388.7L18.6 401.2M23.9 343.5L19.3 369.3M16.7 384L13.8 400.4M17.2 342.3L12.3 370.1M12.3 370.1L7.2 398.9M7.2 398.9L7.1 399.2M2.4 368L-1.6 390.3M-1.6 390.3L-2.8 397.4" stroke="#fff" stroke-width="1.566"/></g>
<path d="M26 386L35 386 35 397 26 397Z" fill="#d6ecc9"/>
<rect x="24" y="397.6" width="13" height="12.1" fill="#ebdbe8"/>
<rect x="24" y="414" width="13" height="8.5" fill="#c9ccba"/>
<pattern id="dots" width="5" height="5" patternUnits="userSpaceOnUse"><circle cx="1.500" cy="1.500" r=".650" fill="#fff" fill-opacity=".85"/></pattern>
<path d="M592 160L628 160 636 195 636 212 641 232 648 254 650 262 640 270 612 272 604 262 603 215 592 210Z" fill="#d2e8c8"/>
<path d="M592 160L628 160 636 195 636 212 641 232 648 254 650 262 640 270 612 272 604 262 603 215 592 210Z" fill="url(#dots)"/>
<path d="M600 185L605 185 606 215 601 215Z" fill="#add19e" fill-opacity=".6"/>
<rect x="610" y="177" width="8" height="11" fill="#ffffe5"/>
<path d="M636 160L700 160 690 180 680 192 640 192 630 170Z" fill="#cdebb0"/>
<path d="M640 200L680 200 660 215 646 232 641 225Z" fill="#cdebb0"/>
<path d="M609 247L634 240 640 256 641 268 612 271Z" fill="#efeee6"/>
<rect x="653.6" y="178" width="7.1" height="9" fill="#88e0be" fill-opacity=".85"/>
<rect x="666.8" y="176" width="8.2" height="13.4" fill="#88e0be" fill-opacity=".85"/>
<rect x="679" y="167" width="11" height="11" fill="#88e0be" fill-opacity=".85"/>
<rect x="623" y="208.7" width="7" height="10.1" fill="#88e0be" fill-opacity=".85"/>
<rect x="617" y="218.8" width="7" height="18.2" fill="#88e0be" fill-opacity=".85"/>
<rect x="625" y="222" width="8" height="11" fill="#88e0be" fill-opacity=".85"/>
<rect x="622" y="243" width="8" height="12" fill="#88e0be" fill-opacity=".85"/>
<rect x="693" y="242" width="14" height="11" fill="#88e0be" fill-opacity=".85"/>
<rect x="646.5" y="283.5" width="10.1" height="12.1" fill="#88e0be" fill-opacity=".85"/>
<rect x="638.4" y="293.6" width="9.1" height="8.1" fill="#88e0be" fill-opacity=".85"/>
<path d="M691 160L742 160 735 177 722 186 700 181 684 177Z" fill="#f2dad9"/>
<path d="M744 160L756 160 756 166 738 182Z" fill="#f2dad9"/>
<path d="M725 195L756 178 756 245 732 252 724 238Z" fill="#ebdbe8"/>
<path d="M648 240L679 229 709 249 724 238 736 256 682 285 668 292 655 268 650 250Z" fill="#add19e" fill-opacity=".9"/>
<path d="M692 244L708.7 248 706 268 692 266Z" fill="#c9e1bf" fill-opacity=".9"/>
<path d="M658 262L680 258 686 278 672 290 664 282Z" fill="#f2dad9"/>
<path d="M600 276L640 272 650 276 664 295 604 326 592 318 604 292Z" fill="#c8facc"/>
<path d="M604 280L622 276 628 300 606 318 596 314Z" fill="#cdebb0" fill-opacity=".7"/>
<path d="M626 283C627.7 281.3 632.2 280.5 634 282C635.8 283.5 637.3 288 637 292C636.7 296 634.2 302.8 632 306C629.8 309.2 625.8 311.5 624 311C622.2 310.5 621 306.2 621 303C621 299.8 623.2 295.3 624 292C624.8 288.7 624.3 284.7 626 283Z" fill="#aad3df"/>
<path d="M560 350L600 328 756 247 756 350 748 340 690 376 650 395 617 409 588 417 555 418 545 404 546 382 552 370Z" fill="#ebdbe8"/>
<path d="M545 380L566 379.5 584 371 589 382.5 546 399Z" fill="#dbdada"/>
<path d="M552 355L600 329.5 756 248.5 756 257 700 287 640 320 600 342 562 362Z" fill="#d4cdd4"/>
<path d="M667 405L701 386 736 366 756 354 756 420 650 420Z" fill="#f2dad9"/>
<path d="M650 421L716 419 716 432 666 432 655 424Z" fill="#d4d6c4"/>
<path d="M733 420L756 420 756 452 733 450Z" fill="#dbdada"/>
<path d="M522 472L541 472 541 448 610 446 668 440 687 443 714 455 714 462 690 463 654 464 640 462 620 470 600 477 566 487 522 489Z" fill="#eef0d5"/>
<path d="M598 437L650 432 666 432 687 437 687 443 668 440 610 446 598 448Z" fill="#eef0d5"/>
<path d="M540 448L560 448 560 472 540 472Z" fill="#f5dcba"/>
<path d="M568 448L598 448 598 460 568 476Z" fill="#f5dcba"/>
<path d="M687 437L714 437 714 447 700 447Z" fill="#f2dad9"/>
<path d="M723 441L756 452 756 493 731 493 727 480Z" fill="#cdebb0" fill-opacity=".9"/>
<path d="M726 455L745 462 756 480 756 493 732 493Z" fill="#add19e" fill-opacity=".5"/>
<rect x="528" y="436.5" width="34" height="7.5" fill="#88e0be" fill-opacity=".7"/>
<path d="M493 449L535 449 535 460 500 461Z" fill="#ebdbe8"/>
<path d="M489 461L541 460 541 472 522 472 522 484 500 474Z" fill="#c9e1bf" fill-opacity=".8"/>
<path d="M562 437L600 438 598 446 562 446Z" fill="#cdebb0" fill-opacity=".7"/>
<path d="M496 385L530 380 531 403 500 408Z" fill="#cdebb0" fill-opacity=".55"/>
<path d="M531 403L551 403 556 414 531 416Z" fill="#c8facc"/>
<path d="M490 327L537 327 530 350 490 350Z" fill="#e6e9d8"/>
<path d="M505 330L528 330 524 347 506 347Z" fill="#cdebb0" fill-opacity=".7"/>
<rect x="499" y="334" width="8" height="6" fill="#aad3df"/>
<path d="M454 364L468 362 470 372 461 386 454 386Z" fill="#c8facc"/>
<path d="M458 368C458.8 365.7 463 364.7 464 366C465 367.3 464.8 373.7 464 376C463.2 378.3 460 381.3 459 380C458 378.7 457.2 370.3 458 368Z" fill="#aad3df"/>
<rect x="360.4" y="237" width="12.2" height="14" fill="#c8facc"/>
<path d="M500.4 208.7L522.7 208.7 518 225 502 222Z" fill="#c8facc"/>
<rect x="61" y="428" width="20" height="8" fill="#cdebb0" fill-opacity=".7"/>
<rect x="84" y="425" width="16" height="8" fill="#cdebb0" fill-opacity=".7"/>
<rect x="88" y="440" width="8" height="12" fill="#cdebb0" fill-opacity=".7"/>
<rect x="112" y="430" width="8" height="16" fill="#cdebb0" fill-opacity=".7"/>
<rect x="128" y="440" width="6" height="12" fill="#cdebb0" fill-opacity=".7"/>
<rect x="150" y="436" width="8" height="10" fill="#cdebb0" fill-opacity=".7"/>
<rect x="106" y="432" width="12" height="12" fill="#ffffe5"/>
<path d="M24 440L42 440 51 459 51 473 24 476Z" fill="#f2dad9"/>
<path d="M197.7 481L244.9 466 236 493 200 493Z" fill="#ebdbe8"/>
<path d="M200 442L232 424 246 424 228 439 198 455Z" fill="#ebdbe8"/>
<path d="M415 432L431 430 433 444 418 446Z" fill="#ffd6d1" fill-opacity=".6"/>
<path d="M336 364L346 362 348 378 336 380Z" fill="#ffd6d1" fill-opacity=".6"/>
<path d="M376 338L392 336 393 346 377 348Z" fill="#ffd6d1" fill-opacity=".5"/>
<rect x="494.5" y="238.5" width="5" height="5" fill="#f4f1b3"/>
<rect x="524.1" y="265.2" width="5" height="5" fill="#f4f1b3"/>
<rect x="518" y="271.2" width="5" height="5" fill="#f4f1b3"/>
<rect x="529.2" y="280.5" width="5" height="5" fill="#f4f1b3"/>
<rect x="562.5" y="223.5" width="5" height="5" fill="#f4f1b3"/>
<rect x="564.5" y="230.5" width="5" height="5" fill="#f4f1b3"/>
<rect x="562.5" y="297.5" width="5" height="5" fill="#f4f1b3"/>
<rect x="537.5" y="306.5" width="5" height="5" fill="#f4f1b3"/>
<rect x="560.5" y="310.5" width="5" height="5" fill="#f4f1b3"/>
<rect x="342.5" y="225.5" width="5" height="5" fill="#f4f1b3"/>
<rect x="349.5" y="229.5" width="5" height="5" fill="#f4f1b3"/>
<rect x="375.5" y="193.5" width="5" height="5" fill="#f4f1b3"/>
<rect x="424.5" y="229.5" width="5" height="5" fill="#f4f1b3"/>
<rect x="429.5" y="233.5" width="5" height="5" fill="#f4f1b3"/>
<rect x="435.5" y="259.5" width="5" height="5" fill="#f4f1b3"/>
<rect x="401.5" y="279.5" width="5" height="5" fill="#f4f1b3"/>
<rect x="413.5" y="289.5" width="5" height="5" fill="#f4f1b3"/>
<rect x="425.5" y="295.5" width="5" height="5" fill="#f4f1b3"/>
<rect x="369.5" y="265.5" width="5" height="5" fill="#f4f1b3"/>
<rect x="353.5" y="297.5" width="5" height="5" fill="#f4f1b3"/>
<rect x="467.5" y="259.5" width="5" height="5" fill="#f4f1b3"/>
<rect x="473.5" y="297.5" width="5" height="5" fill="#f4f1b3"/>
<rect x="485.5" y="315.5" width="5" height="5" fill="#f4f1b3"/>
<rect x="504.5" y="319.5" width="5" height="5" fill="#f4f1b3"/>
<rect x="459.5" y="281.5" width="5" height="5" fill="#f4f1b3"/>
<rect x="452.5" y="297.5" width="5" height="5" fill="#f4f1b3"/>
<rect x="347.5" y="347.5" width="5" height="5" fill="#f4f1b3"/>
<rect x="389.5" y="327.5" width="5" height="5" fill="#f4f1b3"/>
<rect x="401.5" y="345.5" width="5" height="5" fill="#f4f1b3"/>
<rect x="437.5" y="347.5" width="5" height="5" fill="#f4f1b3"/>
<rect x="459.5" y="373.5" width="5" height="5" fill="#f4f1b3"/>
<rect x="377.5" y="433.5" width="5" height="5" fill="#f4f1b3"/>
<rect x="393.5" y="459.5" width="5" height="5" fill="#f4f1b3"/>
<rect x="417.5" y="449.5" width="5" height="5" fill="#f4f1b3"/>
<rect x="349.5" y="471.5" width="5" height="5" fill="#f4f1b3"/>
<rect x="369.5" y="467.5" width="5" height="5" fill="#f4f1b3"/>
<rect x="459.5" y="475.5" width="5" height="5" fill="#f4f1b3"/>
<rect x="471.5" y="437.5" width="5" height="5" fill="#f4f1b3"/>
<rect x="33.5" y="465.5" width="5" height="5" fill="#f4f1b3"/>
<rect x="55.5" y="479.5" width="5" height="5" fill="#f4f1b3"/>
<rect x="115.5" y="467.5" width="5" height="5" fill="#f4f1b3"/>
<rect x="137.5" y="477.5" width="5" height="5" fill="#f4f1b3"/>
<rect x="309.5" y="427.5" width="5" height="5" fill="#f4f1b3"/>
<rect x="317.5" y="449.5" width="5" height="5" fill="#f4f1b3"/>
<rect x="599.5" y="483.5" width="5" height="5" fill="#f4f1b3"/>
<rect x="637.5" y="483.5" width="5" height="5" fill="#f4f1b3"/>
<rect x="687.5" y="481.5" width="5" height="5" fill="#f4f1b3"/>
<rect x="697.5" y="217.5" width="5" height="5" fill="#f4f1b3"/>
<rect x="687.5" y="209.5" width="5" height="5" fill="#f4f1b3"/>
<rect x="709.5" y="223.5" width="5" height="5" fill="#f4f1b3"/>
<path d="M257.7 493C259.5 491.6 263.4 487.3 268.5 484.6C273.6 481.9 284.1 479.3 288.5 477C292.9 474.7 292.1 473.3 294.6 470.8C297.2 468.3 301.2 464.1 303.8 462C306.4 459.9 307.6 459.7 310 458C312.4 456.3 315.1 454.4 318.2 451.8C321.3 449.2 324.7 446.4 328.5 442.6C332.3 438.8 336.7 432.9 340.8 429.2C344.9 425.5 350.4 422.4 353 420.5C355.6 418.6 353.6 419.5 356.4 418C359.2 416.5 364.6 413.6 369.6 411.4C374.7 409.2 380.1 406.8 386.7 404.8C393.3 402.8 402 400.4 409.2 399.5C416.4 398.6 424.9 399.1 430 399.5C435.1 399.9 434.1 400.5 440 401.7C445.9 402.9 457.1 405.2 465.6 406.8C474.2 408.4 482.7 409.9 491.3 411.3C499.9 412.7 508.9 414.2 517 415.1C525.1 416.1 533.7 416.7 540 417C546.3 417.3 547 417.2 555 417C563 416.8 577.7 417.1 588 415.6C598.3 414.1 607 411.4 617 407.9C627 404.4 638.1 398.6 647.7 394.4C657.3 390.2 667.4 386 674.6 382.7C681.8 379.4 681.5 379.9 691 374.5C700.5 369.1 720.9 356.4 731.7 350C742.5 343.6 752 338.3 756 336L756 354C752.6 355.9 744.8 360 735.7 365.3C726.6 370.6 712 379.4 701.2 385.6C690.4 391.9 679.2 397.7 670.8 402.8C662.4 407.9 659.1 412.3 650.6 416C642.1 419.7 629.8 422.6 620 425C610.2 427.4 601.4 429.2 591.6 430.2C581.8 431.2 569.8 431.1 561.2 430.8C552.6 430.5 547.4 429.3 540 428.6C532.6 427.9 525.1 427.4 517 426.7C508.9 425.9 499.9 425.2 491.3 424.1C482.7 423 474.2 421.5 465.6 420.3C457.1 419.1 445.9 418.1 440 417C434.1 415.9 435.1 414.6 430 414C424.9 413.4 415.3 413.1 409.2 413.4C403.1 413.7 398.2 414.6 393.3 416C388.4 417.4 384.6 419.7 380 422C375.4 424.3 369.2 428 365.6 429.9C362 431.8 361.7 431.1 358.2 433.2C354.7 435.3 348 439.9 344.5 442.6C341 445.4 340.2 446.8 337 449.7C333.8 452.6 329.1 456.9 325.5 460C321.9 463.1 318.4 465.4 315.5 468.2C312.6 471 310.3 474.2 308 477C305.7 479.8 303.3 482.3 301.5 485C299.7 487.7 297.8 491.7 297 493Z" fill="#aad3df"/>
<path d="M548 413C550 410.5 557 405.3 562 403C567 400.7 573.7 398.3 578 399C582.3 399.7 588.7 404 588 407C587.3 410 580.3 415.2 574 417C567.7 418.8 554.3 418.7 550 418C545.7 417.3 546 415.5 548 413Z" fill="#aad3df"/>
<path d="M724.5 348L731 347 738 325 746 300 743.5 299 735 318Z" fill="#aad3df"/>
<path d="M630 160C631.6 159 638.8 157.5 641.5 160C644.2 162.5 643.9 170.8 646 175C648.1 179.2 651 182.9 654 185.5C657 188.1 660 188.9 664 190.5C668 192.1 675.7 193.5 678 195C680.3 196.5 680.7 199 678 199.5C675.3 200 666.7 198.9 662 198C657.3 197.1 653.3 195.8 650 194C646.7 192.2 644.3 190 642 187C639.7 184 637.7 179.5 636 176C634.3 172.5 633 168.7 632 166C631 163.3 628.4 161 630 160Z" fill="#5f5f5f"/>
<path d="M244.9 422L228.5 438.5 197.7 454.9 189.5 458 177.2 471.3 150.5 483.6 130 490.8 124 493 187.4 493 191.5 487.7 212 471.3 226.4 463 253 450.8 273.6 440.5 288 428.2 290 422Z" fill="#9a9a9a"/>
<clipPath id="chbf"><path d="M244.9 422L228.5 438.5 197.7 454.9 189.5 458 177.2 471.3 150.5 483.6 130 490.8 124 493 187.4 493 191.5 487.7 212 471.3 226.4 463 253 450.8 273.6 440.5 288 428.2 290 422Z"/></clipPath>
<path clip-path="url(#chbf)" d="M120 457L300 376.7M120 459.5L300 379.2M120 462L300 381.7M120 464.5L300 384.2M120 467L300 386.7M120 469.5L300 389.2M120 472L300 391.7M120 474.5L300 394.2M120 477L300 396.7M120 479.5L300 399.2M120 482L300 401.7M120 484.5L300 404.2M120 487L300 406.7M120 489.5L300 409.2M120 492L300 411.7M120 494.5L300 414.2M120 497L300 416.7M120 499.5L300 419.2M120 502L300 421.7M120 504.5L300 424.2M120 507L300 426.7M120 509.5L300 429.2M120 512L300 431.7M120 514.5L300 434.2M120 517L300 436.7M120 519.5L300 439.2" stroke="#5c5c5c" stroke-width="1.300" fill="none"/>
<path clip-path="url(#chbf)" d="M120 458.2L300 378" stroke="#e6e6e6" stroke-width=".9" stroke-dasharray="4 6.7" stroke-dashoffset="3.7" fill="none"/>
<path clip-path="url(#chbf)" d="M120 460.8L300 380.5" stroke="#e6e6e6" stroke-width=".9" stroke-dasharray="5.4 7.1" stroke-dashoffset="0.7" fill="none"/>
<path clip-path="url(#chbf)" d="M120 463.2L300 383" stroke="#e6e6e6" stroke-width=".9" stroke-dasharray="3.1 8.2" stroke-dashoffset="2.6" fill="none"/>
<path clip-path="url(#chbf)" d="M120 465.8L300 385.5" stroke="#e6e6e6" stroke-width=".9" stroke-dasharray="3.9 9" stroke-dashoffset="4.7" fill="none"/>
<path clip-path="url(#chbf)" d="M120 468.2L300 388" stroke="#e6e6e6" stroke-width=".9" stroke-dasharray="6.3 6.4" stroke-dashoffset="6.4" fill="none"/>
<path clip-path="url(#chbf)" d="M120 470.8L300 390.5" stroke="#e6e6e6" stroke-width=".9" stroke-dasharray="3.6 7.2" stroke-dashoffset="8.7" fill="none"/>
<path clip-path="url(#chbf)" d="M120 473.2L300 393" stroke="#e6e6e6" stroke-width=".9" stroke-dasharray="5.1 7.7" stroke-dashoffset="6.7" fill="none"/>
<path clip-path="url(#chbf)" d="M120 475.8L300 395.5" stroke="#e6e6e6" stroke-width=".9" stroke-dasharray="3.3 7.8" stroke-dashoffset="5.9" fill="none"/>
<path clip-path="url(#chbf)" d="M120 478.2L300 398" stroke="#e6e6e6" stroke-width=".9" stroke-dasharray="4.2 4.2" stroke-dashoffset="8.7" fill="none"/>
<path clip-path="url(#chbf)" d="M120 480.8L300 400.5" stroke="#e6e6e6" stroke-width=".9" stroke-dasharray="4.9 7.6" stroke-dashoffset="8.8" fill="none"/>
<path clip-path="url(#chbf)" d="M120 483.2L300 403" stroke="#e6e6e6" stroke-width=".9" stroke-dasharray="5.9 8.6" stroke-dashoffset="3.9" fill="none"/>
<path clip-path="url(#chbf)" d="M120 485.8L300 405.5" stroke="#e6e6e6" stroke-width=".9" stroke-dasharray="6.2 6.2" stroke-dashoffset="9.4" fill="none"/>
<path clip-path="url(#chbf)" d="M120 488.2L300 408" stroke="#e6e6e6" stroke-width=".9" stroke-dasharray="6.5 4.5" stroke-dashoffset="1.4" fill="none"/>
<path clip-path="url(#chbf)" d="M120 490.8L300 410.5" stroke="#e6e6e6" stroke-width=".9" stroke-dasharray="3.9 8.8" stroke-dashoffset="4.4" fill="none"/>
<path clip-path="url(#chbf)" d="M120 493.2L300 413" stroke="#e6e6e6" stroke-width=".9" stroke-dasharray="5.5 5.5" stroke-dashoffset="5.1" fill="none"/>
<path clip-path="url(#chbf)" d="M120 495.8L300 415.5" stroke="#e6e6e6" stroke-width=".9" stroke-dasharray="4.5 5.8" stroke-dashoffset="5.9" fill="none"/>
<path clip-path="url(#chbf)" d="M120 498.2L300 418" stroke="#e6e6e6" stroke-width=".9" stroke-dasharray="5.3 8.5" stroke-dashoffset="6.8" fill="none"/>
<path clip-path="url(#chbf)" d="M120 500.8L300 420.5" stroke="#e6e6e6" stroke-width=".9" stroke-dasharray="6.7 8.3" stroke-dashoffset="9.9" fill="none"/>
<path clip-path="url(#chbf)" d="M120 503.2L300 423" stroke="#e6e6e6" stroke-width=".9" stroke-dasharray="5.7 4.8" stroke-dashoffset="8.6" fill="none"/>
<path clip-path="url(#chbf)" d="M120 505.8L300 425.5" stroke="#e6e6e6" stroke-width=".9" stroke-dasharray="6.9 8.5" stroke-dashoffset="5.7" fill="none"/>
<path clip-path="url(#chbf)" d="M120 508.2L300 428" stroke="#e6e6e6" stroke-width=".9" stroke-dasharray="5.9 5.1" stroke-dashoffset="8.3" fill="none"/>
<path clip-path="url(#chbf)" d="M120 510.8L300 430.5" stroke="#e6e6e6" stroke-width=".9" stroke-dasharray="5.3 5.4" stroke-dashoffset="0.6" fill="none"/>
<path clip-path="url(#chbf)" d="M120 513.2L300 433" stroke="#e6e6e6" stroke-width=".9" stroke-dasharray="6.4 8.9" stroke-dashoffset="0.9" fill="none"/>
<path clip-path="url(#chbf)" d="M120 515.8L300 435.5" stroke="#e6e6e6" stroke-width=".9" stroke-dasharray="6.2 6.1" stroke-dashoffset="1.5" fill="none"/>
<path clip-path="url(#chbf)" d="M120 518.2L300 438" stroke="#e6e6e6" stroke-width=".9" stroke-dasharray="4.2 7.8" stroke-dashoffset="8.7" fill="none"/>
<path clip-path="url(#chbf)" d="M120 520.8L300 440.5" stroke="#e6e6e6" stroke-width=".9" stroke-dasharray="3.2 7.1" stroke-dashoffset="0.4" fill="none"/>
<path d="M24 493L60 493" stroke="none"/>
<rect x="273" y="433" width="9" height="9" rx="2" fill="#dcdcdc"/>
<pattern id="chk" width="4" height="4" patternUnits="userSpaceOnUse"><rect width="4" height="4" fill="#fff"/><rect width="2" height="2" fill="#e3a0aa"/><rect x="2" y="2" width="2" height="2" fill="#e3a0aa"/></pattern>
<path d="M639.400 193.500L677 193.500L677 203.600L639.400 203.600Z" fill="url(#chk)"/>
<path d="M727 195L756 165.500" stroke="url(#chk)" stroke-width="4" fill="none"/>
<path d="M630 160C631.6 159 638.8 157.5 641.5 160C644.2 162.5 643.9 170.8 646 175C648.1 179.2 651 182.9 654 185.5C657 188.1 660 188.9 664 190.5C668 192.1 675.7 193.5 678 195C680.3 196.5 680.7 199 678 199.5C675.3 200 666.7 198.9 662 198C657.3 197.1 653.3 195.8 650 194C646.7 192.2 644.3 190 642 187C639.7 184 637.7 179.5 636 176C634.3 172.5 633 168.7 632 166C631 163.3 628.4 161 630 160Z" fill="#5f5f5f"/>
<path d="M349 330C353.1 328.5 366.6 324.2 373.6 321C380.6 317.8 384.4 313.7 391 311C397.6 308.3 406.8 304.5 413 305C419.2 305.5 422.7 311.2 428 314C433.3 316.8 440.2 318 445 322C449.8 326 453.5 333.8 457 338C460.5 342.2 464.5 345.5 466 347" stroke="#c8facc" stroke-width="9" fill="none" stroke-linecap="butt" stroke-linejoin="round"/>
<path d="M556 413C557.5 411.7 561.8 408.4 565 405C568.2 401.6 569.5 396.5 575 392.5C580.5 388.5 590.3 384.4 598 381C605.7 377.6 617.2 373.5 621 372" stroke="#aad3df" stroke-width="6.5" fill="none" stroke-linecap="butt" stroke-linejoin="round"/>
<path d="M568 412C571.7 411.2 581.8 410 590 407C598.2 404 608.7 398.6 617 394.2C625.3 389.8 632.3 385 640 380.8C647.7 376.6 657.8 371.8 663 369.2C668.2 366.6 669.7 366 671 365.4" stroke="#aad3df" stroke-width="7" fill="none" stroke-linecap="butt" stroke-linejoin="round"/>
<path d="M349 160L357 190" stroke="#fff" stroke-width="1.6" fill="none" stroke-linecap="round" stroke-linejoin="round"/>
<path d="M366.2 177L367 190" stroke="#fff" stroke-width="1.6" fill="none" stroke-linecap="round" stroke-linejoin="round"/>
<path d="M335 176L353 174" stroke="#fff" stroke-width="1.6" fill="none" stroke-linecap="round" stroke-linejoin="round"/>
<path d="M24 252C25 251.2 27.8 248.5 30 247.5C32.2 246.5 35.8 246.2 37 246" stroke="#fff" stroke-width="1.6" fill="none" stroke-linecap="round" stroke-linejoin="round"/>
<path d="M615 188C615.2 195 616.3 217.7 616 230C615.7 242.3 613.5 256.7 613 262" stroke="#fff" stroke-width="1.6" fill="none" stroke-linecap="round" stroke-linejoin="round"/>
<path d="M612 276C608.6 282.8 599.2 305.5 591.7 317C584.2 328.5 573.2 338.5 567.3 345C561.3 351.5 557.9 354.2 556 356" stroke="#fff" stroke-width="2.6" fill="none" stroke-linecap="round" stroke-linejoin="round"/>
<path d="M545 382.6C545.3 385.3 544.6 393.4 547 398.8C549.4 404.2 557.2 409.3 559.2 415C561.2 420.7 559.2 430.2 559.2 433.2" stroke="#fff" stroke-width="2.6" fill="none" stroke-linecap="round" stroke-linejoin="round"/>
<path d="M556 380L560 393" stroke="#fff" stroke-width="1.5" fill="none" stroke-linecap="round" stroke-linejoin="round"/>
<path d="M570 378L574 388" stroke="#fff" stroke-width="1.5" fill="none" stroke-linecap="round" stroke-linejoin="round"/>
<path d="M545.8 398L588 382.7 640 359.6 663 350 700 331 756 303" stroke="#fff" stroke-width="1.6" fill="none" stroke-linecap="round" stroke-linejoin="round"/>
<path d="M567 368.3L603.5 352 640 336 700 306 756 278" stroke="#fff" stroke-width="1.6" fill="none" stroke-linecap="round" stroke-linejoin="round"/>
<path d="M572.7 416.3C576.9 416 588.7 416.9 597.7 414.6C606.7 412.3 616.9 406.6 626.5 402.3C636.1 398 644.8 393.9 655.4 388.7C666 383.5 684.2 374.2 690 371.3" stroke="#fff" stroke-width="1.6" fill="none" stroke-linecap="round" stroke-linejoin="round"/>
<path d="M730 283.4L735.7 292.3 733.5 303.5" stroke="#fff" stroke-width="1.5" fill="none" stroke-linecap="round" stroke-linejoin="round"/>
<path d="M753.5 272C752.4 277.6 748.6 294.5 746.8 305.7C744.9 316.9 743.1 333.4 742.4 339" stroke="#fff" stroke-width="1.5" fill="none" stroke-linecap="round" stroke-linejoin="round"/>
<path d="M640 336L646 350" stroke="#fff" stroke-width="1.5" fill="none" stroke-linecap="round" stroke-linejoin="round"/>
<path d="M654.2 466.4L675.4 466.4" stroke="#fff" stroke-width="1.6" fill="none" stroke-linecap="round" stroke-linejoin="round"/>
<path d="M631 446C630.7 448.7 628.7 457 629 462C629.3 467 632.3 473.7 633 476" stroke="#fff" stroke-width="2" fill="none" stroke-linecap="round" stroke-linejoin="round"/>
<path d="M669 405L669 420" stroke="#fff" stroke-width="1.5" fill="none" stroke-linecap="round" stroke-linejoin="round"/>
<path d="M690 406L690 420" stroke="#fff" stroke-width="1.5" fill="none" stroke-linecap="round" stroke-linejoin="round"/>
<path d="M676 406L700 400" stroke="#fff" stroke-width="1.5" fill="none" stroke-linecap="round" stroke-linejoin="round"/>
<path d="M724 200L756 190" stroke="#fff" stroke-width="2" fill="none" stroke-linecap="round" stroke-linejoin="round"/>
<path d="M735 225L756 217" stroke="#fff" stroke-width="1.6" fill="none" stroke-linecap="round" stroke-linejoin="round"/>
<path d="M735 225C734.7 227.2 731.3 234.5 733 238C734.7 241.5 743 244.7 745 246" stroke="#fff" stroke-width="1.6" fill="none" stroke-linecap="round" stroke-linejoin="round"/>
<path d="M692 160L722 186" stroke="#fff" stroke-width="1.6" fill="none" stroke-linecap="round" stroke-linejoin="round"/>
<path d="M706 160L724 178" stroke="#fff" stroke-width="1.6" fill="none" stroke-linecap="round" stroke-linejoin="round"/>
<path d="M340 427.5C342.7 425.6 351.1 419 356 416C360.9 413 364.5 411.7 369.6 409.5C374.7 407.3 380.1 404.8 386.7 402.8C393.3 400.8 402.8 398.6 409.2 397.5C415.6 396.4 422.6 396.7 425.3 396.5" stroke="#fff" stroke-width="2" fill="none" stroke-linecap="round" stroke-linejoin="round"/>
<path d="M679 198.5C677 200.5 670.7 206.6 667 210.7C663.3 214.8 660.9 219.6 657 223C653.1 226.4 648.2 228.8 643.8 231C639.4 233.2 635.2 234.3 630.6 236C626 237.7 620.8 238.1 616.4 241C612 243.9 606.1 251.2 604 253.3" stroke="#5f5f5f" stroke-width="3" fill="none" stroke-linecap="butt" stroke-linejoin="round"/>
<path d="M679 198C682.5 197.9 693.8 197.8 700 197.5C706.2 197.2 711.7 197.2 716 196C720.3 194.8 723.2 193.2 726 190.5C728.8 187.8 730.5 183.4 732.5 180C734.5 176.6 736.4 173.3 738 170C739.6 166.7 741.3 161.7 742 160" stroke="#5f5f5f" stroke-width="3" fill="none" stroke-linecap="butt" stroke-linejoin="round"/>
<path d="M600 328.2L756 247.2" stroke="#6b6b6b" stroke-width="4.2" fill="none"/>
<path d="M600 328.2L756 247.2" stroke="#fff" stroke-width="1.6" stroke-dasharray="4.500 4.500" fill="none"/>
<path d="M556 352L600 328.2" stroke="#6b6b6b" stroke-width="4.2" fill="none"/>
<path d="M556 352L600 328.2" stroke="#fff" stroke-width="1.6" stroke-dasharray="4.500 4.500" fill="none"/>
<path d="M571.4 340C568 343 556.7 352.4 551 358.2C545.3 363.9 540.7 368.8 537 374.5C533.3 380.2 530.7 386.6 528.8 392.7C526.9 398.8 526.6 404.9 525.8 411C524.9 417.1 524.3 425 523.7 429.2C523.1 433.4 523.9 433.3 522 436C520.1 438.7 517.8 442.4 512.3 445.2C506.8 448 496.2 450.6 489.2 453C482.1 455.4 473.2 458.6 470 459.7" stroke="#777" stroke-width="7" fill="none"/>
<path d="M571.4 340C568 343 556.7 352.4 551 358.2C545.3 363.9 540.7 368.8 537 374.5C533.3 380.2 530.7 386.6 528.8 392.7C526.9 398.8 526.6 404.9 525.8 411C524.9 417.1 524.3 425 523.7 429.2C523.1 433.4 523.9 433.3 522 436C520.1 438.7 517.8 442.4 512.3 445.2C506.8 448 496.2 450.6 489.2 453C482.1 455.4 473.2 458.6 470 459.7" stroke="#fff" stroke-width="4.9" fill="none"/>
<path d="M571.4 340C568 343 556.7 352.4 551 358.2C545.3 363.9 540.7 368.8 537 374.5C533.3 380.2 530.7 386.6 528.8 392.7C526.9 398.8 526.6 404.9 525.8 411C524.9 417.1 524.3 425 523.7 429.2C523.1 433.4 523.9 433.3 522 436C520.1 438.7 517.8 442.4 512.3 445.2C506.8 448 496.2 450.6 489.2 453C482.1 455.4 473.2 458.6 470 459.7" stroke="#666" stroke-width="2.9" fill="none"/>
<path d="M571.4 340C568 343 556.7 352.4 551 358.2C545.3 363.9 540.7 368.8 537 374.5C533.3 380.2 530.7 386.6 528.8 392.7C526.9 398.8 526.6 404.9 525.8 411C524.9 417.1 524.3 425 523.7 429.2C523.1 433.4 523.9 433.3 522 436C520.1 438.7 517.8 442.4 512.3 445.2C506.8 448 496.2 450.6 489.2 453C482.1 455.4 473.2 458.6 470 459.7" stroke="#fff" stroke-width="1" fill="none"/>
<path d="M470 458.7C474.2 457.4 487 453.1 495 451C503 448.9 506.1 447 518 446.2C529.9 445.4 549.2 446.7 566.2 446.2C583.2 445.7 607.9 444.3 620 443.3C632.1 442.3 630.8 441.2 638.8 440.4C646.8 439.6 659.7 438.2 667.7 438.5C675.7 438.8 680.6 440.2 687 442.3C693.4 444.4 699.6 447.8 706 451C712.4 454.2 719 458.1 725.4 461.6C731.8 465.1 739.5 469.3 744.6 472C749.7 474.7 754.1 477 756 478" stroke="#6b6b6b" stroke-width="3" fill="none"/>
<path d="M470 458.7C474.2 457.4 487 453.1 495 451C503 448.9 506.1 447 518 446.2C529.9 445.4 549.2 446.7 566.2 446.2C583.2 445.7 607.9 444.3 620 443.3C632.1 442.3 630.8 441.2 638.8 440.4C646.8 439.6 659.7 438.2 667.7 438.5C675.7 438.8 680.6 440.2 687 442.3C693.4 444.4 699.6 447.8 706 451C712.4 454.2 719 458.1 725.4 461.6C731.8 465.1 739.5 469.3 744.6 472C749.7 474.7 754.1 477 756 478" stroke="#fff" stroke-width="1.1" stroke-dasharray="4.500 4.500" fill="none"/>
<path d="M488 385C487.7 389.3 486.8 403.6 486 410.6C485.2 417.7 483.5 424.5 483 427.3" stroke="#6b6b6b" stroke-width="2.5" stroke-dasharray="7 2.500" fill="none"/>
<path d="M564.2 447.2C562 448.8 555.3 453.6 550.8 456.8C546.3 460 542.1 464 537.3 466.4C532.5 468.8 527.1 470.7 522 471.2C516.9 471.7 509.1 469.6 506.5 469.3" stroke="#6b6b6b" stroke-width="3" stroke-dasharray="7 2.500" fill="none"/>
<path d="M407 492.3C412.1 488.6 428.1 475.8 437.7 470.2C447.3 464.6 457.6 461.9 464.6 458.7C471.7 455.5 477.4 452.3 480 451" stroke="#777" stroke-width="7" fill="none"/>
<path d="M407 492.3C412.1 488.6 428.1 475.8 437.7 470.2C447.3 464.6 457.6 461.9 464.6 458.7C471.7 455.5 477.4 452.3 480 451" stroke="#fff" stroke-width="4.9" fill="none"/>
<path d="M407 492.3C412.1 488.6 428.1 475.8 437.7 470.2C447.3 464.6 457.6 461.9 464.6 458.7C471.7 455.5 477.4 452.3 480 451" stroke="#666" stroke-width="2.9" fill="none"/>
<path d="M407 492.3C412.1 488.6 428.1 475.8 437.7 470.2C447.3 464.6 457.6 461.9 464.6 458.7C471.7 455.5 477.4 452.3 480 451" stroke="#fff" stroke-width="1" fill="none"/>
<path d="M24 436.4C28.5 440 43.6 452.2 50.8 458C58 463.8 61.4 466.4 67.2 471.3C73 476.2 81.5 484.1 85.6 487.7C89.7 491.3 90.8 492.1 91.8 493" stroke="#6b6b6b" stroke-width="3" fill="none"/>
<path d="M24 436.4C28.5 440 43.6 452.2 50.8 458C58 463.8 61.4 466.4 67.2 471.3C73 476.2 81.5 484.1 85.6 487.7C89.7 491.3 90.8 492.1 91.8 493" stroke="#fff" stroke-width="1.1" stroke-dasharray="4.500 4.500" fill="none"/>
<path d="M731.7 262L756 243" stroke="#6b6b6b" stroke-width="2.5" fill="none"/>
<path d="M731.7 262L756 243" stroke="#fff" stroke-width="0.9" stroke-dasharray="4.500 4.500" fill="none"/>
<path d="M163.8 422C164.2 424.4 164.4 431.3 165.9 436.4C167.4 441.5 170.1 448 173 452.8C175.9 457.6 179.2 460.2 183.3 465C187.4 469.8 194.3 476.8 197.7 481.5C201.1 486.2 202.8 491.1 203.8 493" stroke="#777" stroke-width="4.5" fill="none"/>
<path d="M163.8 422C164.2 424.4 164.4 431.3 165.9 436.4C167.4 441.5 170.1 448 173 452.8C175.9 457.6 179.2 460.2 183.3 465C187.4 469.8 194.3 476.8 197.7 481.5C201.1 486.2 202.8 491.1 203.8 493" stroke="#fff" stroke-width="3.1" fill="none"/>
<path d="M163.8 422C164.2 424.4 164.4 431.3 165.9 436.4C167.4 441.5 170.1 448 173 452.8C175.9 457.6 179.2 460.2 183.3 465C187.4 469.8 194.3 476.8 197.7 481.5C201.1 486.2 202.8 491.1 203.8 493" stroke="#666" stroke-width="1.9" fill="none"/>
<path d="M163.8 422C164.2 424.4 164.4 431.3 165.9 436.4C167.4 441.5 170.1 448 173 452.8C175.9 457.6 179.2 460.2 183.3 465C187.4 469.8 194.3 476.8 197.7 481.5C201.1 486.2 202.8 491.1 203.8 493" stroke="#fff" stroke-width="0.6" fill="none"/>
<path d="M413 241L480 227 496.4 219.8 513.6 232 518.7 231 529 233" stroke="#707070" stroke-width="1" fill="none" stroke-linecap="butt" stroke-linejoin="round"/>
<path d="M573.4 260L589.7 243" stroke="#707070" stroke-width="1" fill="none" stroke-linecap="butt" stroke-linejoin="round"/>
<path d="M520.7 298.7C519 299.7 513.7 301.8 510.6 304.8C507.6 307.9 504.8 313.3 502.4 317C500 320.7 498.8 324.8 496.4 327C494 329.2 490.3 328 488.3 330C486.3 332 484.9 337.7 484.2 339.2" stroke="#707070" stroke-width="1.4" fill="none" stroke-linecap="butt" stroke-linejoin="round"/>
<path d="M494.3 340L497.4 360.3" stroke="#707070" stroke-width="1.4" fill="none" stroke-linecap="butt" stroke-linejoin="round"/>
<path d="M449.2 426C448.9 429.2 448.6 438.8 447.3 445.2C446 451.6 442.5 461.3 441.5 464.5" stroke="#707070" stroke-width="1.4" fill="none" stroke-linecap="butt" stroke-linejoin="round"/>
<path d="M336 402.8C339.4 401.8 348.9 399.5 356.4 396.8C363.8 394.1 371.6 389.3 380.7 386.6C389.8 383.9 405.9 381.5 411 380.5" stroke="#707070" stroke-width="1.2" fill="none" stroke-linecap="butt" stroke-linejoin="round"/>
<path d="M24 478L40 470" stroke="#707070" stroke-width="1" fill="none" stroke-linecap="butt" stroke-linejoin="round"/>
<path d="M330 478L374.2 453.9 376.2 454.8 395.4 492.3" stroke="#707070" stroke-width="1" fill="none" stroke-linecap="butt" stroke-linejoin="round"/>
<path d="M412.7 479.8C413.3 477.9 413 471.5 416.5 468.3C420 465.1 425.8 463.7 433.8 460.6C441.8 457.6 457.6 451.9 464.6 450C471.6 448.1 474.1 449.2 476 449" stroke="#707070" stroke-width="1" fill="none" stroke-linecap="butt" stroke-linejoin="round"/>
<path d="M40.5 442.6L106 491.8" stroke="#707070" stroke-width="1" fill="none" stroke-linecap="butt" stroke-linejoin="round"/>
<path d="M106 492L163.6 461 180 453" stroke="#707070" stroke-width="1" fill="none" stroke-linecap="butt" stroke-linejoin="round"/>
<path d="M401 209.7C401.8 212.6 404 220.8 406 227C408 233.2 411.6 241.2 413 247C414.4 252.8 414.2 259.5 414.5 262" stroke="#bcbf78" stroke-width="5.2" fill="none" stroke-linecap="butt" stroke-linejoin="round"/>
<path d="M179.5 160L180.5 172" stroke="#bcbf78" stroke-width="4.7" fill="none" stroke-linecap="butt" stroke-linejoin="round"/>
<path d="M305 160C305.7 161 308.5 164 309 166C309.5 168 308.2 171 308 172" stroke="#bcbf78" stroke-width="4.2" fill="none" stroke-linecap="butt" stroke-linejoin="round"/>
<path d="M337 221C337.5 224.3 338.5 236 340 241C341.5 246 344.5 247.5 346 251C347.5 254.5 347.8 257.8 349 262C350.2 266.2 352.3 271.6 353 276C353.7 280.4 351.8 284.7 353 288.5C354.2 292.3 357.8 294.6 360.4 298.7C363 302.8 366.3 308.8 368.5 312.8C370.7 316.9 372.8 321.3 373.6 323" stroke="#bcbf78" stroke-width="5" fill="none" stroke-linecap="butt" stroke-linejoin="round"/>
<path d="M373.6 323C374.8 321 377.8 313.2 380.7 310.8C383.6 308.4 387.4 309 390.8 308.8C394.2 308.6 397.3 311 401 309.8C404.7 308.6 410 302.9 413 301.7C416 300.5 416.9 301.2 419 302.7C421.1 304.2 423.2 308.6 425.3 310.8C427.4 313 428.3 315.1 431.4 316C434.4 316.9 440.6 314.5 443.6 316C446.6 317.5 446.9 321.8 449.6 325C452.3 328.2 456.4 332.7 459.8 335C463.2 337.3 468.6 336.7 470 339C471.4 341.3 468.4 345.4 468 349C467.6 352.6 467.5 356.7 467.8 360.3C468.1 363.9 471.3 366.3 470 370.4C468.7 374.4 461.2 379.9 459.8 384.6C458.4 389.3 461.5 396.4 461.8 398.8" stroke="#bcbf78" stroke-width="5" fill="none" stroke-linecap="butt" stroke-linejoin="round"/>
<path d="M336 341C342.3 338.3 361.4 329.2 373.6 325C385.8 320.8 401.4 317.2 409 316C416.6 314.8 415.6 316.5 419 318C422.4 319.5 425.3 322.2 429.4 325C433.5 327.8 439.2 331.6 443.6 335C448 338.4 453.8 342.5 455.8 345.3C457.8 348.1 456.4 349.2 455.7 352C455 354.8 452.2 354.5 451.7 362.3C451.2 370.1 452.5 392.7 452.6 398.8" stroke="#bcbf78" stroke-width="5" fill="none" stroke-linecap="butt" stroke-linejoin="round"/>
<path d="M373.6 323C370.7 322.3 360.3 318.3 356.4 319C352.5 319.7 353.4 325 350 327C346.6 329 338.3 330.3 336 331" stroke="#bcbf78" stroke-width="5" fill="none" stroke-linecap="butt" stroke-linejoin="round"/>
<path d="M373.6 323C371.7 325.4 364.6 334.4 362.4 337.2C360.2 340 361.2 335.8 360.4 340C359.6 344.2 360.1 355.6 357.4 362.3C354.7 369.1 346.1 374.4 344.2 380.5C342.3 386.6 344.2 392.1 346.2 398.8C348.2 405.6 353.2 414.9 356.4 421C359.6 427.1 363.2 431.9 365.5 435.6C367.8 439.3 369.6 442 370.4 443.3" stroke="#bcbf78" stroke-width="5" fill="none" stroke-linecap="butt" stroke-linejoin="round"/>
<path d="M344.2 380.5L336 374.5" stroke="#bcbf78" stroke-width="4.7" fill="none" stroke-linecap="butt" stroke-linejoin="round"/>
<path d="M380.7 374.5C387.5 373.6 412.2 370.8 421.3 369.4C430.4 368 430.3 367.4 435.4 366.4C440.5 365.4 444.3 364.5 451.7 363.3C459.1 362.1 469.2 359 480 359.3C490.8 359.6 510.5 364.3 516.6 365.3" stroke="#bcbf78" stroke-width="4.4" fill="none" stroke-linecap="butt" stroke-linejoin="round"/>
<path d="M360.3 436.5C361.9 435.4 364.8 432.6 369.6 429.9C374.5 427.1 382.8 422.3 389.4 420C396 417.7 403.7 416.6 409 416C414.3 415.4 419 416.4 421 416.5" stroke="#bcbf78" stroke-width="4.2" fill="none" stroke-linecap="butt" stroke-linejoin="round"/>
<path d="M366.5 435.6C363.3 437.2 349.6 441.4 347.3 445.2C345.1 449 352.1 456.4 353 458.7" stroke="#bcbf78" stroke-width="4.7" fill="none" stroke-linecap="butt" stroke-linejoin="round"/>
<path d="M421 425.7C422.9 426.5 429.8 427.9 432.5 430.6C435.2 433.3 436.2 438.5 437.3 442C438.4 445.5 438.7 450.1 439 451.7" stroke="#bcbf78" stroke-width="4.7" fill="none" stroke-linecap="butt" stroke-linejoin="round"/>
<path d="M536 217.8C535.5 220.3 527.8 226.6 533 233C538.2 239.4 560.4 251.8 567.4 256.3C574.4 260.8 573.7 259.4 575 260" stroke="#bcbf78" stroke-width="5" fill="none" stroke-linecap="butt" stroke-linejoin="round"/>
<path d="M551 250L571.4 259" stroke="#bcbf78" stroke-width="4.2" fill="none" stroke-linecap="butt" stroke-linejoin="round"/>
<path d="M679 200.8C682.5 200.7 693.7 200.7 700 200.3C706.3 200 712.2 200.1 717 198.7C721.8 197.3 725.4 194.9 728.5 192C731.6 189.1 733.4 184.7 735.5 181C737.6 177.3 739.4 173.5 741 170C742.6 166.5 744.3 161.7 745 160" stroke="#bcbf78" stroke-width="3.7" fill="none" stroke-linecap="butt" stroke-linejoin="round"/>
<path d="M669 211.5C667.2 213.8 662.5 221.3 658.5 225C654.5 228.7 647.2 232.1 645 233.5" stroke="#bcbf78" stroke-width="3.7" fill="none" stroke-linecap="butt" stroke-linejoin="round"/>
<path d="M652.6 421C655 422.7 661.1 428.8 666.8 431.2C672.5 433.6 678.5 434.7 687 435.3C695.5 435.9 706.2 435.3 717.7 434.7C729.2 434.1 749.6 432.3 756 431.8" stroke="#bcbf78" stroke-width="4.7" fill="none" stroke-linecap="butt" stroke-linejoin="round"/>
<path d="M470 463.5C472.6 463.3 480.3 460.8 485.4 462.5C490.5 464.2 494.7 469.5 500.8 474C506.9 478.5 511.1 487.1 522 489.5C532.9 491.9 552.2 489.5 566 488.5C579.8 487.5 595.6 484.9 604.6 483.7C613.6 482.4 615.3 482.3 620 481C624.7 479.7 628.2 476.5 633 476C637.8 475.5 639.5 477.5 648.5 478C657.5 478.5 676.1 479.1 687 478.9C697.9 478.7 707.7 477.8 713.8 477C719.9 476.2 719 474.5 723.5 474C728 473.5 736.6 474.9 740.8 474C745 473.1 746 469.6 748.5 468.3C751 467 754.8 466.7 756 466.4" stroke="#bcbf78" stroke-width="4.7" fill="none" stroke-linecap="butt" stroke-linejoin="round"/>
<path d="M213.6 489.7C220.9 486.8 246.3 478.1 257.2 472.3C268.1 466.5 271.7 460.4 279 455C286.3 449.6 293.5 444.7 300.8 439.6C308.1 434.5 319 426.9 322.6 424.4" stroke="#bcbf78" stroke-width="5" fill="none" stroke-linecap="butt" stroke-linejoin="round"/>
<path d="M294.6 450.8C297.9 449.2 308.6 445 314.6 441.5C320.6 438 326.6 433.4 330.5 430C334.4 426.6 336.8 422.5 338 421" stroke="#bcbf78" stroke-width="5" fill="none" stroke-linecap="butt" stroke-linejoin="round"/>
<path d="M24 366.4L36 382" stroke="#bcbf78" stroke-width="4.2" fill="none" stroke-linecap="butt" stroke-linejoin="round"/>
<path d="M24 412.5L37 410.5" stroke="#bcbf78" stroke-width="4.7" fill="none" stroke-linecap="butt" stroke-linejoin="round"/>
<path d="M24 384C25.7 384 32 381.7 34 384C36 386.3 35.7 395.7 36 398" stroke="#bcbf78" stroke-width="2.7" fill="none" stroke-linecap="butt" stroke-linejoin="round"/>
<path d="M424 395.7L448.7 397.3" stroke="#bcbf78" stroke-width="4.4" fill="none" stroke-linecap="butt" stroke-linejoin="round"/>
<path d="M401 209.7C401.8 212.6 404 220.8 406 227C408 233.2 411.6 241.2 413 247C414.4 252.8 414.2 259.5 414.5 262" stroke="#f7fabf" stroke-width="4" fill="none" stroke-linecap="round" stroke-linejoin="round"/>
<path d="M179.5 160L180.5 172" stroke="#f7fabf" stroke-width="3.5" fill="none" stroke-linecap="round" stroke-linejoin="round"/>
<path d="M305 160C305.7 161 308.5 164 309 166C309.5 168 308.2 171 308 172" stroke="#f7fabf" stroke-width="3" fill="none" stroke-linecap="round" stroke-linejoin="round"/>
<path d="M337 221C337.5 224.3 338.5 236 340 241C341.5 246 344.5 247.5 346 251C347.5 254.5 347.8 257.8 349 262C350.2 266.2 352.3 271.6 353 276C353.7 280.4 351.8 284.7 353 288.5C354.2 292.3 357.8 294.6 360.4 298.7C363 302.8 366.3 308.8 368.5 312.8C370.7 316.9 372.8 321.3 373.6 323" stroke="#f7fabf" stroke-width="3.8" fill="none" stroke-linecap="round" stroke-linejoin="round"/>
<path d="M373.6 323C374.8 321 377.8 313.2 380.7 310.8C383.6 308.4 387.4 309 390.8 308.8C394.2 308.6 397.3 311 401 309.8C404.7 308.6 410 302.9 413 301.7C416 300.5 416.9 301.2 419 302.7C421.1 304.2 423.2 308.6 425.3 310.8C427.4 313 428.3 315.1 431.4 316C434.4 316.9 440.6 314.5 443.6 316C446.6 317.5 446.9 321.8 449.6 325C452.3 328.2 456.4 332.7 459.8 335C463.2 337.3 468.6 336.7 470 339C471.4 341.3 468.4 345.4 468 349C467.6 352.6 467.5 356.7 467.8 360.3C468.1 363.9 471.3 366.3 470 370.4C468.7 374.4 461.2 379.9 459.8 384.6C458.4 389.3 461.5 396.4 461.8 398.8" stroke="#f7fabf" stroke-width="3.8" fill="none" stroke-linecap="round" stroke-linejoin="round"/>
<path d="M336 341C342.3 338.3 361.4 329.2 373.6 325C385.8 320.8 401.4 317.2 409 316C416.6 314.8 415.6 316.5 419 318C422.4 319.5 425.3 322.2 429.4 325C433.5 327.8 439.2 331.6 443.6 335C448 338.4 453.8 342.5 455.8 345.3C457.8 348.1 456.4 349.2 455.7 352C455 354.8 452.2 354.5 451.7 362.3C451.2 370.1 452.5 392.7 452.6 398.8" stroke="#f7fabf" stroke-width="3.8" fill="none" stroke-linecap="round" stroke-linejoin="round"/>
<path d="M373.6 323C370.7 322.3 360.3 318.3 356.4 319C352.5 319.7 353.4 325 350 327C346.6 329 338.3 330.3 336 331" stroke="#f7fabf" stroke-width="3.8" fill="none" stroke-linecap="round" stroke-linejoin="round"/>
<path d="M373.6 323C371.7 325.4 364.6 334.4 362.4 337.2C360.2 340 361.2 335.8 360.4 340C359.6 344.2 360.1 355.6 357.4 362.3C354.7 369.1 346.1 374.4 344.2 380.5C342.3 386.6 344.2 392.1 346.2 398.8C348.2 405.6 353.2 414.9 356.4 421C359.6 427.1 363.2 431.9 365.5 435.6C367.8 439.3 369.6 442 370.4 443.3" stroke="#f7fabf" stroke-width="3.8" fill="none" stroke-linecap="round" stroke-linejoin="round"/>
<path d="M344.2 380.5L336 374.5" stroke="#f7fabf" stroke-width="3.5" fill="none" stroke-linecap="round" stroke-linejoin="round"/>
<path d="M380.7 374.5C387.5 373.6 412.2 370.8 421.3 369.4C430.4 368 430.3 367.4 435.4 366.4C440.5 365.4 444.3 364.5 451.7 363.3C459.1 362.1 469.2 359 480 359.3C490.8 359.6 510.5 364.3 516.6 365.3" stroke="#f7fabf" stroke-width="3.2" fill="none" stroke-linecap="round" stroke-linejoin="round"/>
<path d="M360.3 436.5C361.9 435.4 364.8 432.6 369.6 429.9C374.5 427.1 382.8 422.3 389.4 420C396 417.7 403.7 416.6 409 416C414.3 415.4 419 416.4 421 416.5" stroke="#f7fabf" stroke-width="3" fill="none" stroke-linecap="round" stroke-linejoin="round"/>
<path d="M366.5 435.6C363.3 437.2 349.6 441.4 347.3 445.2C345.1 449 352.1 456.4 353 458.7" stroke="#f7fabf" stroke-width="3.5" fill="none" stroke-linecap="round" stroke-linejoin="round"/>
<path d="M421 425.7C422.9 426.5 429.8 427.9 432.5 430.6C435.2 433.3 436.2 438.5 437.3 442C438.4 445.5 438.7 450.1 439 451.7" stroke="#f7fabf" stroke-width="3.5" fill="none" stroke-linecap="round" stroke-linejoin="round"/>
<path d="M536 217.8C535.5 220.3 527.8 226.6 533 233C538.2 239.4 560.4 251.8 567.4 256.3C574.4 260.8 573.7 259.4 575 260" stroke="#f7fabf" stroke-width="3.8" fill="none" stroke-linecap="round" stroke-linejoin="round"/>
<path d="M551 250L571.4 259" stroke="#f7fabf" stroke-width="3" fill="none" stroke-linecap="round" stroke-linejoin="round"/>
<path d="M679 200.8C682.5 200.7 693.7 200.7 700 200.3C706.3 200 712.2 200.1 717 198.7C721.8 197.3 725.4 194.9 728.5 192C731.6 189.1 733.4 184.7 735.5 181C737.6 177.3 739.4 173.5 741 170C742.6 166.5 744.3 161.7 745 160" stroke="#f7fabf" stroke-width="2.5" fill="none" stroke-linecap="round" stroke-linejoin="round"/>
<path d="M669 211.5C667.2 213.8 662.5 221.3 658.5 225C654.5 228.7 647.2 232.1 645 233.5" stroke="#f7fabf" stroke-width="2.5" fill="none" stroke-linecap="round" stroke-linejoin="round"/>
<path d="M652.6 421C655 422.7 661.1 428.8 666.8 431.2C672.5 433.6 678.5 434.7 687 435.3C695.5 435.9 706.2 435.3 717.7 434.7C729.2 434.1 749.6 432.3 756 431.8" stroke="#f7fabf" stroke-width="3.5" fill="none" stroke-linecap="round" stroke-linejoin="round"/>
<path d="M470 463.5C472.6 463.3 480.3 460.8 485.4 462.5C490.5 464.2 494.7 469.5 500.8 474C506.9 478.5 511.1 487.1 522 489.5C532.9 491.9 552.2 489.5 566 488.5C579.8 487.5 595.6 484.9 604.6 483.7C613.6 482.4 615.3 482.3 620 481C624.7 479.7 628.2 476.5 633 476C637.8 475.5 639.5 477.5 648.5 478C657.5 478.5 676.1 479.1 687 478.9C697.9 478.7 707.7 477.8 713.8 477C719.9 476.2 719 474.5 723.5 474C728 473.5 736.6 474.9 740.8 474C745 473.1 746 469.6 748.5 468.3C751 467 754.8 466.7 756 466.4" stroke="#f7fabf" stroke-width="3.5" fill="none" stroke-linecap="round" stroke-linejoin="round"/>
<path d="M213.6 489.7C220.9 486.8 246.3 478.1 257.2 472.3C268.1 466.5 271.7 460.4 279 455C286.3 449.6 293.5 444.7 300.8 439.6C308.1 434.5 319 426.9 322.6 424.4" stroke="#f7fabf" stroke-width="3.8" fill="none" stroke-linecap="round" stroke-linejoin="round"/>
<path d="M294.6 450.8C297.9 449.2 308.6 445 314.6 441.5C320.6 438 326.6 433.4 330.5 430C334.4 426.6 336.8 422.5 338 421" stroke="#f7fabf" stroke-width="3.8" fill="none" stroke-linecap="round" stroke-linejoin="round"/>
<path d="M24 366.4L36 382" stroke="#f7fabf" stroke-width="3" fill="none" stroke-linecap="round" stroke-linejoin="round"/>
<path d="M24 412.5L37 410.5" stroke="#f7fabf" stroke-width="3.5" fill="none" stroke-linecap="round" stroke-linejoin="round"/>
<path d="M24 384C25.7 384 32 381.7 34 384C36 386.3 35.7 395.7 36 398" stroke="#f7fabf" stroke-width="1.5" fill="none" stroke-linecap="round" stroke-linejoin="round"/>
<path d="M424 395.7L448.7 397.3" stroke="#f7fabf" stroke-width="3.2" fill="none" stroke-linecap="round" stroke-linejoin="round"/>
<path d="M24 188.4L36.2 208.3" stroke="#cfa061" stroke-width="5.2" fill="none" stroke-linecap="butt" stroke-linejoin="round"/>
<path d="M36.2 208.3C36.1 215.2 35.9 235.6 35.8 250C35.7 264.4 35.5 287.5 35.5 295" stroke="#cfa061" stroke-width="3.7" fill="none" stroke-linecap="butt" stroke-linejoin="round"/>
<path d="M328 160L328 190" stroke="#cfa061" stroke-width="5.2" fill="none" stroke-linecap="butt" stroke-linejoin="round"/>
<path d="M330 196C335 195.1 350 191.2 360 190.4C370 189.6 385 190.9 390 191" stroke="#cfa061" stroke-width="5.7" fill="none" stroke-linecap="butt" stroke-linejoin="round"/>
<path d="M429.5 208.5C432.1 209.6 439.6 212.7 445 215C450.4 217.3 457.2 219.6 462 222.3C466.8 225 470.6 227.9 474 231C477.4 234.1 479 236.6 482.2 240.6C485.4 244.6 489.3 249.9 493 255C496.7 260.1 499.9 264.4 504.5 271C509.1 277.6 515.3 287.3 520.7 294.6C526.1 301.9 532 307.9 537 315C542 322.1 549 330.8 551 337C553 343.2 551.3 347.8 549 352C546.7 356.2 540 358.6 537 362.3C534 366.1 531.8 372.5 530.8 374.5" stroke="#cfa061" stroke-width="7.4" fill="none" stroke-linecap="butt" stroke-linejoin="round"/>
<path d="M455.7 212.7C454.7 214.8 451 218.8 449.6 225C448.2 231.2 448.3 242.2 447.6 250C446.9 257.8 447.3 265.2 445.6 272C443.9 278.8 439.5 284.8 437.5 290.6C435.5 296.4 436 300.7 433.4 306.8C430.8 312.9 423.9 321.5 422 327C420.1 332.5 422.1 333.8 422.3 340C422.5 346.2 422.8 355.9 423.3 364.3C423.8 372.8 425.7 381.8 425.3 390.7C424.9 399.6 422.6 411.5 421 417.6C419.4 423.7 419 423.8 416 427.3C413 430.8 407.7 435.7 403 438.7C398.3 441.7 393.4 442.5 387.7 445.2C381.9 447.9 375.2 450.9 368.5 454.8C361.8 458.7 352.4 463.8 347.3 468.3C342.2 472.8 340.2 477.8 337.7 481.8C335.1 485.8 332.9 490.6 332 492.3" stroke="#cfa061" stroke-width="5.7" fill="none" stroke-linecap="butt" stroke-linejoin="round"/>
<path d="M520.7 298.7C523.4 297.9 531.3 296.7 537 293.6C542.7 290.6 549.4 286 555 280.4C560.6 274.8 565.6 262.7 570.4 260C575.2 257.3 578.7 262.3 583.6 264C588.5 265.7 593.7 269.1 599.8 270.3C605.9 271.5 613.2 271 620 271.3C626.8 271.6 635.6 271.6 640.4 272.3C645.1 273 647.1 274.8 648.5 275.3" stroke="#cfa061" stroke-width="5.8" fill="none" stroke-linecap="butt" stroke-linejoin="round"/>
<path d="M648.5 275.3C650.4 278.1 656.3 285.8 660 292C663.7 298.2 669 309.3 670.8 312.8" stroke="#cfa061" stroke-width="2.7" fill="none" stroke-linecap="butt" stroke-linejoin="round"/>
<path d="M517.6 364.3L537 362.3" stroke="#cfa061" stroke-width="5.2" fill="none" stroke-linecap="butt" stroke-linejoin="round"/>
<path d="M517.6 364.3C518.1 366.3 518.5 374.8 520.7 376.5C522.9 378.2 529.1 374.8 530.8 374.5" stroke="#cfa061" stroke-width="5.2" fill="none" stroke-linecap="butt" stroke-linejoin="round"/>
<path d="M518.7 377.5C525.8 377.8 550.4 380.7 561.2 379.5C572 378.3 573.8 375.5 583.6 370.4C593.4 365.3 606.5 357.6 620 349C633.5 340.4 655 325.7 664.8 319C674.6 312.3 671.2 314.2 679 308.8C686.8 303.4 698.6 294.6 711.4 286.5C724.2 278.4 748.6 264.4 756 260" stroke="#cfa061" stroke-width="5.7" fill="none" stroke-linecap="butt" stroke-linejoin="round"/>
<path d="M448.7 397.3C450.6 397.5 456.3 398.1 460 398.5C463.7 398.9 467.5 400.2 470.8 400C474.1 399.8 476.6 398.7 480 397.5C483.4 396.3 486 394.7 491.3 392.7C496.6 390.7 507.2 387.8 511.8 385.6C516.4 383.4 517.6 380.5 518.7 379.5" stroke="#cfa061" stroke-width="5.4" fill="none" stroke-linecap="butt" stroke-linejoin="round"/>
<path d="M452 396.5C452 400.3 452.8 412.2 452 419.2C451.2 426.2 448.9 432.7 447 438.7C445.1 444.7 441.9 450.4 440.6 455C439.3 459.6 439.3 464.2 439 466" stroke="#cfa061" stroke-width="5" fill="none" stroke-linecap="butt" stroke-linejoin="round"/>
<path d="M461.7 398C462.2 401.5 463.9 412.7 465 419.2C466.1 425.7 467.9 430.5 468.2 437C468.5 443.5 466.9 454.5 466.6 458" stroke="#cfa061" stroke-width="5" fill="none" stroke-linecap="butt" stroke-linejoin="round"/>
<path d="M453.6 422.5C456 424.9 463.1 433.8 468.2 437C473.3 440.2 479.1 440.8 484.4 442C489.7 443.2 497.4 443.7 500 444" stroke="#cfa061" stroke-width="5" fill="none" stroke-linecap="butt" stroke-linejoin="round"/>
<path d="M421 418.4C425.6 418.7 440.8 419.2 448.7 420C456.6 420.8 464.9 422.8 468.2 423.3" stroke="#cfa061" stroke-width="5" fill="none" stroke-linecap="butt" stroke-linejoin="round"/>
<path d="M470 439.5C475.8 440.1 496.6 443.2 504.6 443.3C512.6 443.4 513.8 442.3 518 440.4C522.2 438.5 523.2 432.8 529.6 431.8C536 430.9 546.6 433.6 556.5 434.7C566.4 435.8 578.6 438.3 589.2 438.5C599.8 438.7 612.4 437.1 620 436C627.6 434.9 629.9 434.5 635 431.8C640.1 429.1 633.8 422.3 650.6 420C667.4 417.7 720.2 418.8 735.7 418C751.2 417.2 742.8 418.2 743.8 415C744.8 411.8 743.1 404.6 741.8 398.8C740.4 393.1 736.4 384.6 735.7 380.5C735 376.4 734.3 376.2 737.7 374.5C741.1 372.8 753 371.1 756 370.4" stroke="#cfa061" stroke-width="5.7" fill="none" stroke-linecap="butt" stroke-linejoin="round"/>
<path d="M439 466C439.8 467 442.4 467.6 443.5 472C444.6 476.4 445.1 488.9 445.4 492.3" stroke="#cfa061" stroke-width="5.2" fill="none" stroke-linecap="butt" stroke-linejoin="round"/>
<path d="M443.5 472C447 470.8 458.5 466.7 464.6 464.5C470.7 462.3 477.4 459.7 480 458.7" stroke="#cfa061" stroke-width="5.2" fill="none" stroke-linecap="butt" stroke-linejoin="round"/>
<path d="M24 476.4C37 474.3 78 467.4 102 464C126 460.6 154.7 457.5 167.7 456C180.7 454.5 177.9 455.2 180 455" stroke="#cfa061" stroke-width="5.2" fill="none" stroke-linecap="butt" stroke-linejoin="round"/>
<path d="M171 455C172.4 454.3 174.8 453.6 179.2 450.8C183.6 448.1 190.8 443 197.7 438.5C204.5 434 216.5 426.4 220.3 424" stroke="#cfa061" stroke-width="5.2" fill="none" stroke-linecap="butt" stroke-linejoin="round"/>
<path d="M288.8 422C288.6 425.3 287.5 436 287.7 441.8C287.9 447.6 288.2 451.6 290 457C291.8 462.4 295.4 468.5 298.6 474.5C301.9 480.5 307.7 489.9 309.5 493" stroke="#cfa061" stroke-width="5.2" fill="none" stroke-linecap="butt" stroke-linejoin="round"/>
<path d="M24 188.4L36.2 208.3" stroke="#fcd6a4" stroke-width="4" fill="none" stroke-linecap="round" stroke-linejoin="round"/>
<path d="M36.2 208.3C36.1 215.2 35.9 235.6 35.8 250C35.7 264.4 35.5 287.5 35.5 295" stroke="#fcd6a4" stroke-width="2.5" fill="none" stroke-linecap="round" stroke-linejoin="round"/>
<path d="M328 160L328 190" stroke="#fcd6a4" stroke-width="4" fill="none" stroke-linecap="round" stroke-linejoin="round"/>
<path d="M330 196C335 195.1 350 191.2 360 190.4C370 189.6 385 190.9 390 191" stroke="#fcd6a4" stroke-width="4.5" fill="none" stroke-linecap="round" stroke-linejoin="round"/>
<path d="M429.5 208.5C432.1 209.6 439.6 212.7 445 215C450.4 217.3 457.2 219.6 462 222.3C466.8 225 470.6 227.9 474 231C477.4 234.1 479 236.6 482.2 240.6C485.4 244.6 489.3 249.9 493 255C496.7 260.1 499.9 264.4 504.5 271C509.1 277.6 515.3 287.3 520.7 294.6C526.1 301.9 532 307.9 537 315C542 322.1 549 330.8 551 337C553 343.2 551.3 347.8 549 352C546.7 356.2 540 358.6 537 362.3C534 366.1 531.8 372.5 530.8 374.5" stroke="#fcd6a4" stroke-width="6.2" fill="none" stroke-linecap="round" stroke-linejoin="round"/>
<path d="M455.7 212.7C454.7 214.8 451 218.8 449.6 225C448.2 231.2 448.3 242.2 447.6 250C446.9 257.8 447.3 265.2 445.6 272C443.9 278.8 439.5 284.8 437.5 290.6C435.5 296.4 436 300.7 433.4 306.8C430.8 312.9 423.9 321.5 422 327C420.1 332.5 422.1 333.8 422.3 340C422.5 346.2 422.8 355.9 423.3 364.3C423.8 372.8 425.7 381.8 425.3 390.7C424.9 399.6 422.6 411.5 421 417.6C419.4 423.7 419 423.8 416 427.3C413 430.8 407.7 435.7 403 438.7C398.3 441.7 393.4 442.5 387.7 445.2C381.9 447.9 375.2 450.9 368.5 454.8C361.8 458.7 352.4 463.8 347.3 468.3C342.2 472.8 340.2 477.8 337.7 481.8C335.1 485.8 332.9 490.6 332 492.3" stroke="#fcd6a4" stroke-width="4.5" fill="none" stroke-linecap="round" stroke-linejoin="round"/>
<path d="M520.7 298.7C523.4 297.9 531.3 296.7 537 293.6C542.7 290.6 549.4 286 555 280.4C560.6 274.8 565.6 262.7 570.4 260C575.2 257.3 578.7 262.3 583.6 264C588.5 265.7 593.7 269.1 599.8 270.3C605.9 271.5 613.2 271 620 271.3C626.8 271.6 635.6 271.6 640.4 272.3C645.1 273 647.1 274.8 648.5 275.3" stroke="#fcd6a4" stroke-width="4.6" fill="none" stroke-linecap="round" stroke-linejoin="round"/>
<path d="M648.5 275.3C650.4 278.1 656.3 285.8 660 292C663.7 298.2 669 309.3 670.8 312.8" stroke="#fcd6a4" stroke-width="1.5" fill="none" stroke-linecap="round" stroke-linejoin="round"/>
<path d="M517.6 364.3L537 362.3" stroke="#fcd6a4" stroke-width="4" fill="none" stroke-linecap="round" stroke-linejoin="round"/>
<path d="M517.6 364.3C518.1 366.3 518.5 374.8 520.7 376.5C522.9 378.2 529.1 374.8 530.8 374.5" stroke="#fcd6a4" stroke-width="4" fill="none" stroke-linecap="round" stroke-linejoin="round"/>
<path d="M518.7 377.5C525.8 377.8 550.4 380.7 561.2 379.5C572 378.3 573.8 375.5 583.6 370.4C593.4 365.3 606.5 357.6 620 349C633.5 340.4 655 325.7 664.8 319C674.6 312.3 671.2 314.2 679 308.8C686.8 303.4 698.6 294.6 711.4 286.5C724.2 278.4 748.6 264.4 756 260" stroke="#fcd6a4" stroke-width="4.5" fill="none" stroke-linecap="round" stroke-linejoin="round"/>
<path d="M448.7 397.3C450.6 397.5 456.3 398.1 460 398.5C463.7 398.9 467.5 400.2 470.8 400C474.1 399.8 476.6 398.7 480 397.5C483.4 396.3 486 394.7 491.3 392.7C496.6 390.7 507.2 387.8 511.8 385.6C516.4 383.4 517.6 380.5 518.7 379.5" stroke="#fcd6a4" stroke-width="4.2" fill="none" stroke-linecap="round" stroke-linejoin="round"/>
<path d="M452 396.5C452 400.3 452.8 412.2 452 419.2C451.2 426.2 448.9 432.7 447 438.7C445.1 444.7 441.9 450.4 440.6 455C439.3 459.6 439.3 464.2 439 466" stroke="#fcd6a4" stroke-width="3.8" fill="none" stroke-linecap="round" stroke-linejoin="round"/>
<path d="M461.7 398C462.2 401.5 463.9 412.7 465 419.2C466.1 425.7 467.9 430.5 468.2 437C468.5 443.5 466.9 454.5 466.6 458" stroke="#fcd6a4" stroke-width="3.8" fill="none" stroke-linecap="round" stroke-linejoin="round"/>
<path d="M453.6 422.5C456 424.9 463.1 433.8 468.2 437C473.3 440.2 479.1 440.8 484.4 442C489.7 443.2 497.4 443.7 500 444" stroke="#fcd6a4" stroke-width="3.8" fill="none" stroke-linecap="round" stroke-linejoin="round"/>
<path d="M421 418.4C425.6 418.7 440.8 419.2 448.7 420C456.6 420.8 464.9 422.8 468.2 423.3" stroke="#fcd6a4" stroke-width="3.8" fill="none" stroke-linecap="round" stroke-linejoin="round"/>
<path d="M470 439.5C475.8 440.1 496.6 443.2 504.6 443.3C512.6 443.4 513.8 442.3 518 440.4C522.2 438.5 523.2 432.8 529.6 431.8C536 430.9 546.6 433.6 556.5 434.7C566.4 435.8 578.6 438.3 589.2 438.5C599.8 438.7 612.4 437.1 620 436C627.6 434.9 629.9 434.5 635 431.8C640.1 429.1 633.8 422.3 650.6 420C667.4 417.7 720.2 418.8 735.7 418C751.2 417.2 742.8 418.2 743.8 415C744.8 411.8 743.1 404.6 741.8 398.8C740.4 393.1 736.4 384.6 735.7 380.5C735 376.4 734.3 376.2 737.7 374.5C741.1 372.8 753 371.1 756 370.4" stroke="#fcd6a4" stroke-width="4.5" fill="none" stroke-linecap="round" stroke-linejoin="round"/>
<path d="M439 466C439.8 467 442.4 467.6 443.5 472C444.6 476.4 445.1 488.9 445.4 492.3" stroke="#fcd6a4" stroke-width="4" fill="none" stroke-linecap="round" stroke-linejoin="round"/>
<path d="M443.5 472C447 470.8 458.5 466.7 464.6 464.5C470.7 462.3 477.4 459.7 480 458.7" stroke="#fcd6a4" stroke-width="4" fill="none" stroke-linecap="round" stroke-linejoin="round"/>
<path d="M24 476.4C37 474.3 78 467.4 102 464C126 460.6 154.7 457.5 167.7 456C180.7 454.5 177.9 455.2 180 455" stroke="#fcd6a4" stroke-width="4" fill="none" stroke-linecap="round" stroke-linejoin="round"/>
<path d="M171 455C172.4 454.3 174.8 453.6 179.2 450.8C183.6 448.1 190.8 443 197.7 438.5C204.5 434 216.5 426.4 220.3 424" stroke="#fcd6a4" stroke-width="4" fill="none" stroke-linecap="round" stroke-linejoin="round"/>
<path d="M288.8 422C288.6 425.3 287.5 436 287.7 441.8C287.9 447.6 288.2 451.6 290 457C291.8 462.4 295.4 468.5 298.6 474.5C301.9 480.5 307.7 489.9 309.5 493" stroke="#fcd6a4" stroke-width="4" fill="none" stroke-linecap="round" stroke-linejoin="round"/>
<path d="M242 160L238 172" stroke="#d58a72" stroke-width="6.2" fill="none" stroke-linecap="butt" stroke-linejoin="round"/>
<path d="M242 160L238 172" stroke="#f9b29c" stroke-width="5" fill="none" stroke-linecap="butt" stroke-linejoin="round"/>
<path d="M24 350L37 342.5" stroke="#d7657d" stroke-width="4.2" fill="none" stroke-linecap="butt" stroke-linejoin="round"/>
<path d="M24 165.2C29.1 164.8 43.8 163.2 54.6 163C65.4 162.8 79.4 163.1 89 164C98.6 164.9 105.7 167.5 112.3 168.7C118.9 169.9 120.5 170.3 128.5 171C136.4 171.7 154.8 172.7 160 173" stroke="#d7657d" stroke-width="6.2" fill="none" stroke-linecap="butt" stroke-linejoin="round"/>
<path d="M627 160C627.9 163.4 631.3 173.5 632.6 180.3C633.9 187.1 634.1 193.8 635 200.6C635.9 207.4 636.5 214.2 637.7 220.9C638.9 227.6 640.8 234.9 642.2 241C643.6 247.1 643.8 251.8 646.2 257.4C648.6 262.9 652.8 268.1 656.6 274.3C660.4 280.5 666.8 291.2 668.8 294.6" stroke="#d7657d" stroke-width="9.7" fill="none" stroke-linecap="butt" stroke-linejoin="round"/>
<path d="M668.8 294.6C670.5 299 676.3 313.3 679 321C681.7 328.7 683 334.4 685 341C687 347.6 688.3 353.7 691 360.3C693.7 366.9 697.8 373.8 701.2 380.5C704.6 387.2 708.7 394.1 711.4 400.8C714.1 407.6 716.1 413.6 717.5 421C718.9 428.4 718.6 437.9 719.6 445.2C720.6 452.4 722.2 458.4 723.5 464.5C724.8 470.6 726.2 477.1 727.3 481.8C728.4 486.6 729.7 491.1 730.2 493" stroke="#d7657d" stroke-width="7.2" fill="none" stroke-linecap="butt" stroke-linejoin="round"/>
<path d="M24 350L37 342.5" stroke="#e892a2" stroke-width="3" fill="none" stroke-linecap="butt" stroke-linejoin="round"/>
<path d="M24 165.2C29.1 164.8 43.8 163.2 54.6 163C65.4 162.8 79.4 163.1 89 164C98.6 164.9 105.7 167.5 112.3 168.7C118.9 169.9 120.5 170.3 128.5 171C136.4 171.7 154.8 172.7 160 173" stroke="#e892a2" stroke-width="5" fill="none" stroke-linecap="butt" stroke-linejoin="round"/>
<path d="M627 160C627.9 163.4 631.3 173.5 632.6 180.3C633.9 187.1 634.1 193.8 635 200.6C635.9 207.4 636.5 214.2 637.7 220.9C638.9 227.6 640.8 234.9 642.2 241C643.6 247.1 643.8 251.8 646.2 257.4C648.6 262.9 652.8 268.1 656.6 274.3C660.4 280.5 666.8 291.2 668.8 294.6" stroke="#e892a2" stroke-width="8.5" fill="none" stroke-linecap="butt" stroke-linejoin="round"/>
<path d="M668.8 294.6C670.5 299 676.3 313.3 679 321C681.7 328.7 683 334.4 685 341C687 347.6 688.3 353.7 691 360.3C693.7 366.9 697.8 373.8 701.2 380.5C704.6 387.2 708.7 394.1 711.4 400.8C714.1 407.6 716.1 413.6 717.5 421C718.9 428.4 718.6 437.9 719.6 445.2C720.6 452.4 722.2 458.4 723.5 464.5C724.8 470.6 726.2 477.1 727.3 481.8C728.4 486.6 729.7 491.1 730.2 493" stroke="#e892a2" stroke-width="6" fill="none" stroke-linecap="butt" stroke-linejoin="round"/>
<path d="M401 209.7C401.8 212.6 404 220.8 406 227C408 233.2 411.5 238.1 413 247C414.5 255.9 414.8 272 415 280.4C415.2 288.8 413 293.2 414 297.6C415 302 419.2 303.6 421 306.8C422.8 310 424.3 315.3 425 317" stroke="#707070" stroke-width="2.7" fill="none" stroke-linecap="butt" stroke-linejoin="round"/>
<path d="M529 233L571 260" stroke="#707070" stroke-width="1.8" fill="none" stroke-linecap="butt" stroke-linejoin="round"/>
<path d="M455.7 212.7C454.7 214.8 451 218.8 449.6 225C448.2 231.2 448.3 242.2 447.6 250C446.9 257.8 447.3 265.2 445.6 272C443.9 278.8 439.5 284.8 437.5 290.6C435.5 296.4 436 300.7 433.4 306.8C430.8 312.9 423.9 321.5 422 327C420.1 332.5 422.2 337.8 422.3 340" stroke="#77706a" stroke-width="1.300" fill="none"/>
<path d="M520.7 298.7C523.4 297.9 531.3 296.7 537 293.6C542.7 290.6 549.4 286 555 280.4C560.6 274.8 565.6 262.7 570.4 260C575.2 257.3 578.7 262.3 583.6 264C588.5 265.7 593.7 269.1 599.8 270.3C605.9 271.5 613.3 271 620 271.3C626.7 271.6 636.7 272.1 640 272.3" stroke="#77706a" stroke-width="1.300" fill="none"/>
<path d="M518.7 377.5C525.8 377.8 550.4 380.7 561.2 379.5C572 378.3 573.8 375.5 583.6 370.4C593.4 365.3 606.5 357.6 620 349C633.5 340.4 655 325.7 664.8 319C674.6 312.3 671.2 314.2 679 308.8C686.8 303.4 698.6 294.6 711.4 286.5C724.2 278.4 748.6 264.4 756 260" stroke="#77706a" stroke-width="1.300" fill="none"/>
<path d="M24 476.4C37 474.3 78 467.4 102 464C126 460.6 154.7 457.5 167.7 456C180.7 454.5 177.9 455.2 180 455" stroke="#77706a" stroke-width="1.300" fill="none"/>
<path d="M328 160L328 190" stroke="#77706a" stroke-width="1.300" fill="none"/>
<path d="M451.7 398.8C451.7 402.5 452 414.2 451.7 421C451.4 427.8 450 436.3 449.6 439.4" stroke="#77706a" stroke-width="1.300" fill="none"/>
<path d="M288.8 422C288.6 425.3 287.5 436 287.7 441.8C287.9 447.6 288.2 451.6 290 457C291.8 462.4 295.4 468.5 298.6 474.5C301.9 480.5 307.7 489.9 309.5 493" stroke="#77706a" stroke-width="1.300" fill="none"/>
<path d="M349 262C349.7 264.3 352.3 271.6 353 276C353.7 280.4 351.8 284.7 353 288.5C354.2 292.3 357.8 294.6 360.4 298.7C363 302.8 366.3 308.8 368.5 312.8C370.7 316.9 372.8 321.3 373.6 323" stroke="#a9a397" stroke-width="1.100" stroke-dasharray="2 2.500" fill="none"/>
<path d="M373.6 323C374.8 321 377.8 313.2 380.7 310.8C383.6 308.4 387.4 309 390.8 308.8C394.2 308.6 397.3 311 401 309.8C404.7 308.6 410 302.9 413 301.7C416 300.5 416.9 301.2 419 302.7C421.1 304.2 423.2 308.6 425.3 310.8C427.4 313 428.3 315.1 431.4 316C434.4 316.9 440.6 314.5 443.6 316C446.6 317.5 446.9 321.8 449.6 325C452.3 328.2 456.4 332.7 459.8 335C463.2 337.3 468.6 336.7 470 339C471.4 341.3 468.4 345.4 468 349C467.6 352.6 467.5 356.7 467.8 360.3C468.1 363.9 471.3 366.3 470 370.4C468.7 374.4 461.2 379.9 459.8 384.6C458.4 389.3 461.5 396.4 461.8 398.8" stroke="#a9a397" stroke-width="1.100" stroke-dasharray="2 2.500" fill="none"/>
<rect x="547" y="358.3" width="6" height="6" fill="#7a86c0"/>
<rect x="515.5" y="410.4" width="4.5" height="4.5" fill="#7a86c0"/>
<rect x="449.2" y="459.8" width="5.5" height="5.5" fill="#7a86c0"/>
<rect x="410.9" y="485.8" width="5.5" height="5.5" fill="#7a86c0"/>
<rect x="496.1" y="462.6" width="5.5" height="5.5" fill="#7a86c0"/>
<rect x="714.2" y="432.9" width="5.5" height="5.5" fill="#7a86c0"/>
<path d="M603 430C610.5 427.6 633.5 421.2 648 415.5C662.5 409.8 675.3 403.2 690 396C704.7 388.8 725 377.7 736 372C747 366.3 752.7 363.7 756 362" stroke="#4b63d8" stroke-width="1" stroke-dasharray="1 3" fill="none" opacity=".8"/>
<path d="M470 425C475 425.8 491.3 428.7 500 430C508.7 431.3 518.3 432.5 522 433" stroke="#4b63d8" stroke-width="1" stroke-dasharray="1 3" fill="none" opacity=".8"/>
<path d="M583 436L620 428" stroke="#4b63d8" stroke-width="1" stroke-dasharray="1 3" fill="none" opacity=".8"/>
<path d="M727 238C728.5 242 731.2 259.2 736 262C740.8 264.8 752.7 256.2 756 255" stroke="#4b63d8" stroke-width="1" stroke-dasharray="1 3" fill="none" opacity=".8"/>
<path d="M640 402L700 378L756 345" stroke="#b093c6" stroke-width="1" stroke-dasharray="6 2 1 2" fill="none"/>
<path d="M575 372L650 336M585 396L650 364M592 399L655 368M600 372L640 354M566 358L640 322M570 361L660 316M580 360L700 300M610 349L720 292M640 340L700 310M600 366L660 338M620 388L665 366M640 352L690 328M755.700 270Q742 290 735.700 312.400T726.800 343.500" stroke="#b5aab5" stroke-width="1" fill="none"/>
<path d="M560 449L560 472M541 460L598 460M600 448L604 480M640 442L642 462M660 440L662 464M620 458L690 452M568 476L598 460L640 456" stroke="#d9bf95" stroke-width=".8" fill="none"/>
<text x="528.8" y="216.8" font-size="11.5" fill="#3a3a3a" text-anchor="start" textLength="54.2" lengthAdjust="spacingAndGlyphs" stroke="#fff" stroke-opacity=".75" stroke-width="1.600" paint-order="stroke" stroke-linejoin="round">Bornheim</text>
<text x="656.6" y="225" font-size="11.5" fill="#3a3a3a" text-anchor="start" textLength="61.9" lengthAdjust="spacingAndGlyphs" stroke="#fff" stroke-opacity=".75" stroke-width="1.600" paint-order="stroke" stroke-linejoin="round">Riederwald</text>
<text x="329" y="260.1" font-size="11.5" fill="#3a3a3a" text-anchor="start" textLength="77" lengthAdjust="spacingAndGlyphs" stroke="#fff" stroke-opacity=".75" stroke-width="1.600" paint-order="stroke" stroke-linejoin="round">Nordend West</text>
<text x="368.5" y="355.2" font-size="11.5" fill="#3a3a3a" text-anchor="start" textLength="60.9" lengthAdjust="spacingAndGlyphs" stroke="#fff" stroke-opacity=".75" stroke-width="1.600" paint-order="stroke" stroke-linejoin="round">Innenstadt</text>
<text x="345.2" y="381.6" font-size="14.5" fill="#2e2e2e" text-anchor="start" textLength="90.2" lengthAdjust="spacingAndGlyphs" stroke="#fff" stroke-opacity=".75" stroke-width="1.600" paint-order="stroke" stroke-linejoin="round">Frankfurt am</text>
<text x="372.6" y="400.8" font-size="14.5" fill="#2e2e2e" text-anchor="start" textLength="34.4" lengthAdjust="spacingAndGlyphs" stroke="#fff" stroke-opacity=".75" stroke-width="1.600" paint-order="stroke" stroke-linejoin="round">Main</text>
<text x="474" y="374.5" font-size="11.5" fill="#3a3a3a" text-anchor="start" textLength="39.6" lengthAdjust="spacingAndGlyphs" stroke="#fff" stroke-opacity=".75" stroke-width="1.600" paint-order="stroke" stroke-linejoin="round">Ostend</text>
<text x="355" y="484.7" font-size="11.5" fill="#3a3a3a" text-anchor="start" textLength="87.5" lengthAdjust="spacingAndGlyphs" stroke="#fff" stroke-opacity=".75" stroke-width="1.600" paint-order="stroke" stroke-linejoin="round">Sachsenhausen</text>
<text x="145.4" y="452.8" font-size="11.8" fill="#3a3a3a" text-anchor="start" textLength="34.9" lengthAdjust="spacingAndGlyphs" stroke="#fff" stroke-opacity=".75" stroke-width="1.600" paint-order="stroke" stroke-linejoin="round">Gallus</text>
<text x="226.2" y="471.5" font-size="11.8" fill="#3a3a3a" text-anchor="start" textLength="76.8" lengthAdjust="spacingAndGlyphs" stroke="#fff" stroke-opacity=".75" stroke-width="1.600" paint-order="stroke" stroke-linejoin="round">Gutleutviertel</text>
<text x="604.5" y="489.5" font-size="11.5" fill="#3a3a3a" text-anchor="start" textLength="45.9" lengthAdjust="spacingAndGlyphs" stroke="#fff" stroke-opacity=".75" stroke-width="1.600" paint-order="stroke" stroke-linejoin="round">Oberrad</text>
<path id="rwt" d="M695.500 201.500L716 200.500Q727 199 734 190L756 163" fill="none"/>
<text font-size="10" fill="#333" stroke="#fff" stroke-opacity=".75" stroke-width="1.600" paint-order="stroke"><textPath href="#rwt" textLength="70" lengthAdjust="spacingAndGlyphs">Riederwaldtunnel</textPath></text>
<text x="622.2" y="263.2" font-size="10" fill="#a83248" text-anchor="start" font-style="italic" textLength="59.8" lengthAdjust="spacingAndGlyphs" stroke="#fff" stroke-opacity=".75" stroke-width="1.600" paint-order="stroke" stroke-linejoin="round">Frankfurt-Ost</text>
<text x="648" y="274.3" font-size="10" fill="#a83248" text-anchor="start" font-style="italic" textLength="9.5" lengthAdjust="spacingAndGlyphs" stroke="#fff" stroke-opacity=".75" stroke-width="1.600" paint-order="stroke" stroke-linejoin="round">14</text>
<text x="659.7" y="349" font-size="10" fill="#a83248" text-anchor="start" font-style="italic" textLength="59.8" lengthAdjust="spacingAndGlyphs" stroke="#fff" stroke-opacity=".75" stroke-width="1.600" paint-order="stroke" stroke-linejoin="round">Frankfurt-Ost</text>
<text x="684.5" y="360.3" font-size="10" fill="#a83248" text-anchor="start" font-style="italic" textLength="9.5" lengthAdjust="spacingAndGlyphs" stroke="#fff" stroke-opacity=".75" stroke-width="1.600" paint-order="stroke" stroke-linejoin="round">14</text>
<text x="662.7" y="390.7" font-size="10" fill="#a83248" text-anchor="start" font-style="italic" textLength="87.3" lengthAdjust="spacingAndGlyphs" stroke="#fff" stroke-opacity=".75" stroke-width="1.600" paint-order="stroke" stroke-linejoin="round">Offenbach-Kaiserlei</text>
<text x="701.5" y="401.8" font-size="10" fill="#a83248" text-anchor="start" font-style="italic" textLength="9.5" lengthAdjust="spacingAndGlyphs" stroke="#fff" stroke-opacity=".75" stroke-width="1.600" paint-order="stroke" stroke-linejoin="round">15</text>
<text x="679.2" y="457.7" font-size="10" fill="#a83248" text-anchor="start" font-style="italic" textLength="87.3" lengthAdjust="spacingAndGlyphs" stroke="#fff" stroke-opacity=".75" stroke-width="1.600" paint-order="stroke" stroke-linejoin="round">Offenbach-Kaiserlei</text>
<text x="718" y="469.3" font-size="10" fill="#a83248" text-anchor="start" font-style="italic" textLength="9.5" lengthAdjust="spacingAndGlyphs" stroke="#fff" stroke-opacity=".75" stroke-width="1.600" paint-order="stroke" stroke-linejoin="round">15</text>
<text x="-4.5" y="347.5" font-size="13.5" fill="#b3263f" text-anchor="start" font-style="italic" stroke="#fff" stroke-opacity=".75" stroke-width="1.600" paint-order="stroke" stroke-linejoin="round">Frankfurt</text>
<text x="610" y="372.4" font-size="9.5" fill="#7a6388" text-anchor="start" font-style="italic" textLength="39.5" lengthAdjust="spacingAndGlyphs">Osthafen</text>
<text x="396.6" y="412.5" font-size="10" fill="#4a7fb5" text-anchor="start" font-style="italic" textLength="51" lengthAdjust="spacingAndGlyphs" transform="rotate(7 396.6 412.5)">Müllermain</text>
<text x="609.5" y="423" font-size="10" fill="#4a7fb5" text-anchor="start" font-style="italic" textLength="21.5" lengthAdjust="spacingAndGlyphs" transform="rotate(-18 609.5 423)">Main</text>
</svg>
<!--MAPEND-->
</div>

<div id="drop"><div class="t">Berlin, Germany</div><div class="s">Administrative</div></div>

<div id="panel"><div class="abs" style="left:1px;top:0;width:296px;height:248px">
<svg class="abs" style="left:14.500px;top:14.800px" width="18" height="18" viewBox="0 0 24 24" fill="none" stroke="#0a84ff" stroke-width="2" stroke-linecap="round" stroke-linejoin="round"><polygon points="3 11 22 2 13 21 11 13 3 11"/></svg>
<div class="hd">Navigation</div>
<div class="ln" style="top:48px"></div>
<div class="mode" style="left:11px;background:#0a84ff"></div>
<svg class="abs" style="left:47.500px;top:65px" width="16" height="16" viewBox="0 0 24 24" fill="none" stroke="#fff" stroke-width="2" stroke-linecap="round" stroke-linejoin="round"><path d="M19 17h2c.6 0 1-.4 1-1v-3c0-.9-.7-1.700-1.500-1.900C18.700 10.600 16 10 16 10s-1.300-1.400-2.200-2.300c-.5-.4-1.100-.7-1.800-.7H5c-.6 0-1.100.4-1.400.9l-1.400 2.900A3.700 3.700 0 0 0 2 12v4c0 .6.400 1 1 1h2"/><circle cx="7" cy="17" r="2"/><path d="M9 17h6"/><circle cx="17" cy="17" r="2"/></svg>
<svg class="abs" style="left:140px;top:64px" width="18" height="18" viewBox="177 236 18 18" fill="none" stroke="#cfcfcf" stroke-width="1.25" stroke-linecap="round" stroke-linejoin="round"><circle cx="185.900" cy="241.100" r="1.150"/><path d="M181.800 243.300L184.300 245.700H187.500L190.100 243.300M184.300 245.700L183.600 251.300M187.500 245.700L188.200 251.300M184 248.500H187.800"/></svg>
<svg class="abs" style="left:233px;top:65px" width="16" height="16" viewBox="0 0 24 24" fill="none" stroke="#cfcfcf" stroke-width="2" stroke-linecap="round" stroke-linejoin="round"><circle cx="18.500" cy="17.500" r="3.500"/><circle cx="5.500" cy="17.500" r="3.500"/><circle cx="15" cy="5" r="1"/><path d="M12 17.500V14l-3-3 4-3 2 3h2"/></svg>
<div class="ln" style="top:97px"></div>
<div class="dot" style="top:121.500px;background:#22c55e;box-shadow:0 0 0 2.500px rgba(34,197,94,.35)"></div>
<div class="inp" style="top:110px"><span style="letter-spacing:.38px">Start point</span><svg class="abs" style="left:227px;top:9px" width="16" height="16" viewBox="0 0 24 24" fill="none" stroke="#a3a3a3" stroke-width="2" stroke-linecap="round" stroke-linejoin="round"><path d="M20 10c0 4.993-5.539 10.193-7.399 11.799a1 1 0 0 1-1.202 0C9.539 20.193 4 14.993 4 10a8 8 0 0 1 16 0"/><circle cx="12" cy="10" r="3"/></svg></div>
<div class="dot" style="top:165.500px;background:#ef4444;box-shadow:0 0 0 2.500px rgba(239,68,68,.35)"></div>
<div class="inp" style="top:154px"><span style="letter-spacing:.1px">End point</span><svg class="abs" style="left:227px;top:9px" width="16" height="16" viewBox="0 0 24 24" fill="none" stroke="#a3a3a3" stroke-width="2" stroke-linecap="round" stroke-linejoin="round"><path d="M20 10c0 4.993-5.539 10.193-7.399 11.799a1 1 0 0 1-1.202 0C9.539 20.193 4 14.993 4 10a8 8 0 0 1 16 0"/><circle cx="12" cy="10" r="3"/></svg></div>
<div class="btn" style="left:11px;background:#10589c;color:#7ea3c9">Get Route</div>
<div class="btn" style="left:152px;background:#3a3a3a;color:#ececec">Clear</div>
</div>
</div>
</body>
</html>
